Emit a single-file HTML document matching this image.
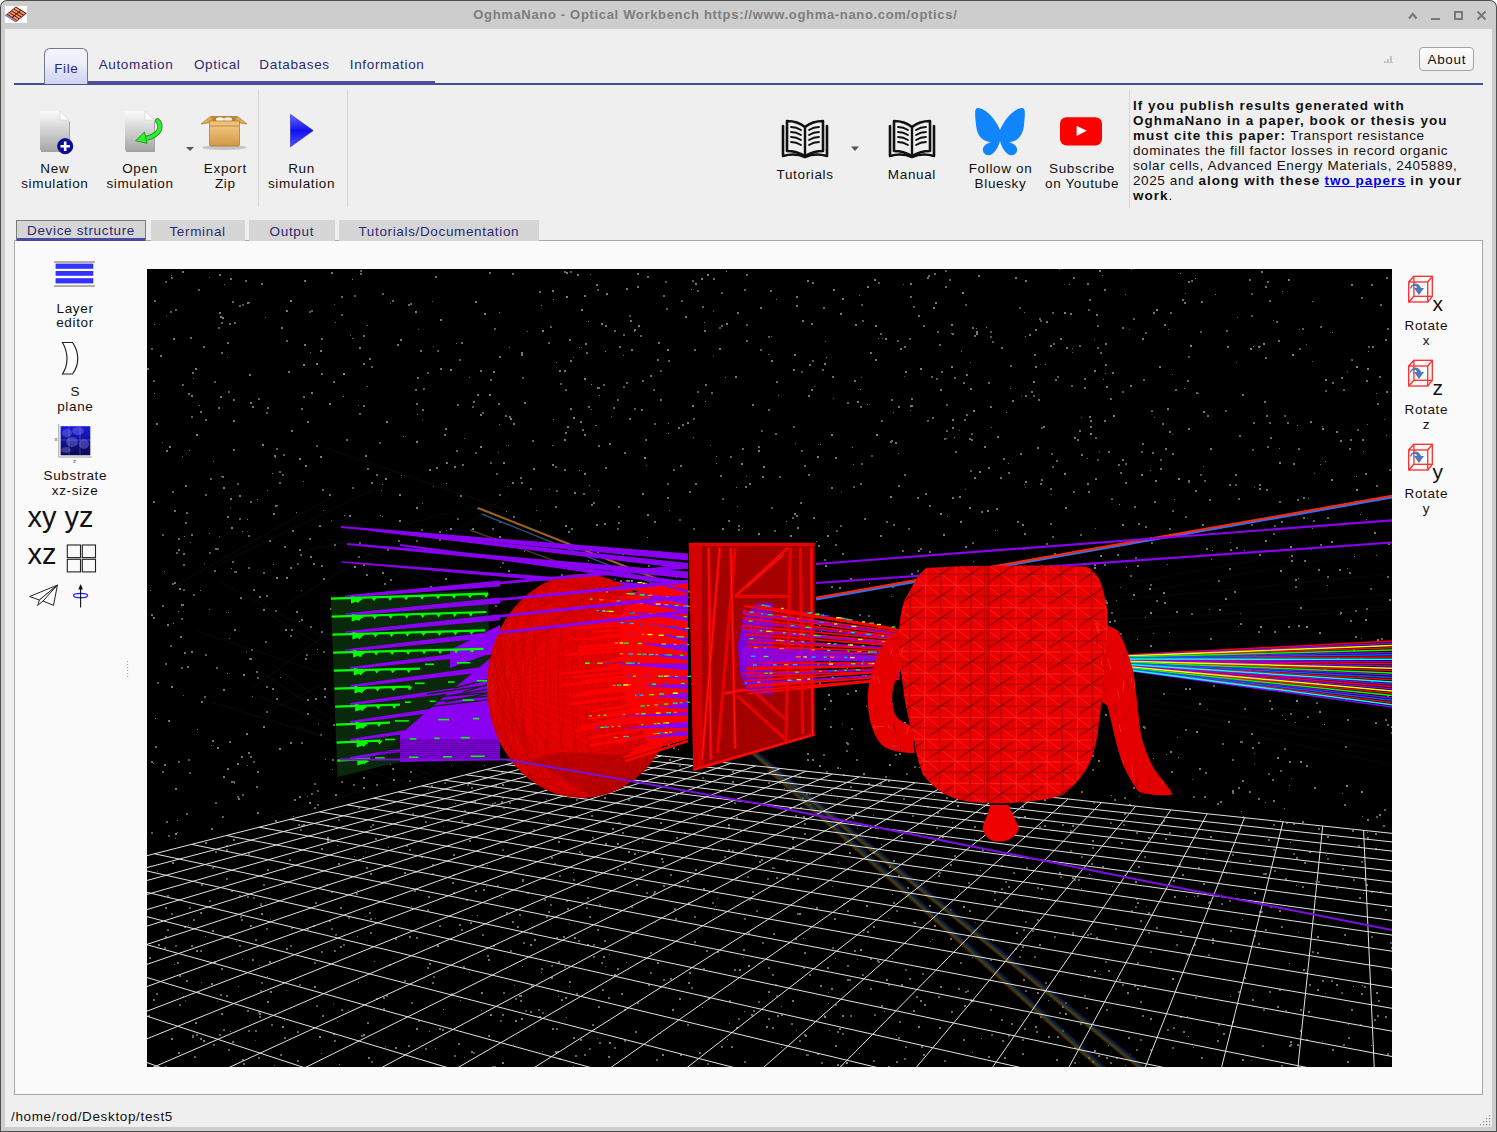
<!DOCTYPE html>
<html><head><meta charset="utf-8"><title>OghmaNano</title>
<style>html,body{margin:0;padding:0;width:1497px;height:1132px;overflow:hidden;background:#fff}
#w{position:relative;width:1497px;height:1132px;overflow:hidden;font-family:'Liberation Sans',sans-serif}</style></head>
<body><div id="w">
<div style="position:absolute;left:0px;top:0px;width:1497px;height:1132px;background:#4e4e4e;border-radius:7px 7px 0 0"></div>
<div style="position:absolute;left:1px;top:1px;width:1495px;height:1130px;background:#cdcdcd;border-radius:6px 6px 0 0"></div>
<div style="position:absolute;left:5px;top:29px;width:1487px;height:1098px;background:#efefef"></div>
<div style="position:absolute;left:5px;top:6px;width:22px;height:17px;background:#fff"></div>
<svg style="position:absolute;left:5px;top:6px" width="22" height="17" viewBox="0 0 22 17"><g transform="matrix(10.9 6.9 -10.9 9 10.9 0.4)"><rect x="0" y="0" width="1" height="1" fill="#6a0a28"/><rect x="0.06" y="0.08" width="0.4" height="0.13" fill="#f0b060"/><rect x="0.54" y="0.08" width="0.4" height="0.13" fill="#e8a858"/><rect x="0.06" y="0.28" width="0.4" height="0.13" fill="#f0b060"/><rect x="0.54" y="0.28" width="0.4" height="0.13" fill="#e8a858"/><rect x="0.06" y="0.48" width="0.4" height="0.13" fill="#f0b060"/><rect x="0.54" y="0.48" width="0.4" height="0.13" fill="#e8a858"/><rect x="0.06" y="0.68" width="0.4" height="0.13" fill="#f0b060"/><rect x="0.54" y="0.68" width="0.4" height="0.13" fill="#e8a858"/><rect x="0" y="0.86" width="1" height="0.14" fill="#9a8a9a"/></g></svg>
<div style="position:absolute;left:15.34px;top:8.20px;width:1400px;text-align:center;font:bold 13px/14px 'Liberation Sans', sans-serif;letter-spacing:0.67px;color:#7d7d7d;white-space:pre;">OghmaNano - Optical Workbench https://www.oghma-nano.com/optics/</div>
<svg style="position:absolute;left:0;top:0" width="1497" height="30"><g stroke="#7a7a7a" stroke-width="2" fill="none"><polyline points="1409,18.5 1412.8,14 1416.5,18.5" stroke-width="2.2"/><line x1="1431" y1="19" x2="1440" y2="19"/><rect x="1455" y="12" width="7" height="7"/><line x1="1477.5" y1="11.5" x2="1485.5" y2="19.5"/><line x1="1485.5" y1="11.5" x2="1477.5" y2="19.5"/></g></svg>
<div style="position:absolute;left:14px;top:83px;width:1469px;height:2px;background:#454d9c"></div>
<div style="position:absolute;left:88px;top:81px;width:347px;height:2px;background:#4f4f9e"></div>
<div style="position:absolute;left:44px;top:48px;width:44px;height:36px;border:1px solid #77778a;border-bottom:none;border-radius:6px 6px 0 0;box-sizing:border-box;background:linear-gradient(#f4f4fd 0%,#eeeefb 40%,#dcdff5 70%,#cdd6ef 100%)"></div>
<div style="position:absolute;left:-633.67px;top:60.52px;width:1400px;text-align:center;font:normal 13.5px/15px 'Liberation Sans', sans-serif;letter-spacing:0.65px;color:#2c2a72;white-space:pre;">File</div>
<div style="position:absolute;left:-563.97px;top:56.52px;width:1400px;text-align:center;font:normal 13.5px/15px 'Liberation Sans', sans-serif;letter-spacing:0.65px;color:#2c2a72;white-space:pre;">Automation</div>
<div style="position:absolute;left:-482.78px;top:56.52px;width:1400px;text-align:center;font:normal 13.5px/15px 'Liberation Sans', sans-serif;letter-spacing:0.65px;color:#2c2a72;white-space:pre;">Optical</div>
<div style="position:absolute;left:-405.48px;top:56.52px;width:1400px;text-align:center;font:normal 13.5px/15px 'Liberation Sans', sans-serif;letter-spacing:0.65px;color:#2c2a72;white-space:pre;">Databases</div>
<div style="position:absolute;left:-312.88px;top:56.52px;width:1400px;text-align:center;font:normal 13.5px/15px 'Liberation Sans', sans-serif;letter-spacing:0.65px;color:#2c2a72;white-space:pre;">Information</div>
<div style="position:absolute;left:1419px;top:47px;width:55px;height:24px;border:1px solid #a4a4a4;border-radius:4px;box-sizing:border-box;background:linear-gradient(#fdfdfd,#efefef)"></div>
<div style="position:absolute;left:746.83px;top:52.12px;width:1400px;text-align:center;font:normal 13.5px/15px 'Liberation Sans', sans-serif;letter-spacing:0.65px;color:#111;white-space:pre;">About</div>
<svg style="position:absolute;left:1383px;top:53px" width="12" height="12" viewBox="0 0 12 12"><g fill="#c4c4c4"><rect x="1" y="8" width="2" height="2"/><rect x="4" y="6" width="2" height="4"/><rect x="7" y="3" width="2" height="7"/><rect x="1" y="9" width="9" height="1"/></g></svg>
<div style="position:absolute;left:258px;top:90px;width:1px;height:117px;background:#d6d6d6"></div>
<div style="position:absolute;left:347px;top:90px;width:1px;height:117px;background:#d6d6d6"></div>
<div style="position:absolute;left:1129px;top:90px;width:1px;height:118px;background:#d6d6d6"></div>
<svg style="position:absolute;left:0px;top:100px" width="350" height="60" viewBox="0 0 350 60"><defs><linearGradient id="dg40" x1="0" y1="0" x2="0" y2="1"><stop offset="0" stop-color="#fbfbfb"/><stop offset="1" stop-color="#a9a9a9"/></linearGradient></defs><path d="M41,13 h20 l9,9 v30 h-29 z" fill="#6f6f6f" opacity="0.6"/><path d="M40,11 h20 l9,9 v30 h-29 z" fill="url(#dg40)"/><path d="M60,11 v9 h9 z" fill="#fff" stroke="#cfcfcf" stroke-width="0.6"/><circle cx="65.2" cy="46.2" r="7.6" fill="#0a0aa0" stroke="#000070" stroke-width="0.8"/><path d="M65.2,41.5 v9.4 M60.5,46.2 h9.4" stroke="#fff" stroke-width="2.6"/><defs><linearGradient id="dg125" x1="0" y1="0" x2="0" y2="1"><stop offset="0" stop-color="#fbfbfb"/><stop offset="1" stop-color="#a9a9a9"/></linearGradient></defs><path d="M126,13 h20 l9,9 v30 h-29 z" fill="#6f6f6f" opacity="0.6"/><path d="M125,11 h20 l9,9 v30 h-29 z" fill="url(#dg125)"/><path d="M145,11 v9 h9 z" fill="#fff" stroke="#cfcfcf" stroke-width="0.6"/><path d="M157.5,20.8 C161,24 161,30 156,34 C153,36.5 150,37.5 146.5,38.3" stroke="#119911" stroke-width="5.2" fill="none" stroke-linecap="round"/><path d="M157.5,20.8 C161,24 161,30 156,34 C153,36.5 150,37.5 146.5,38.3" stroke="#33ee33" stroke-width="3.4" fill="none" stroke-linecap="round"/><path d="M135.6,40.8 L144.5,31.9 L147,43.3 z" fill="#33ee33" stroke="#119911" stroke-width="0.9" stroke-linejoin="round"/><path d="M186,47 h8 l-4,4 z" fill="#555"/><defs><linearGradient id="bx" x1="0" y1="0" x2="0" y2="1"><stop offset="0" stop-color="#f2c47c"/><stop offset="1" stop-color="#cf9846"/></linearGradient></defs><ellipse cx="224.5" cy="47.5" rx="22" ry="2.5" fill="#000" opacity="0.18"/><path d="M206,22 l6,-6 h24 l6,6 z" fill="#b88438"/><ellipse cx="220" cy="19.5" rx="4" ry="2.2" fill="#f6f6f6"/><ellipse cx="228" cy="19.5" rx="4" ry="2.2" fill="#eee"/><path d="M201,24 l10,-8 l3,6 z M247,24 l-10,-8 l-3,6 z" fill="#e0a858" stroke="#b07830" stroke-width="0.7"/><rect x="209.5" y="21" width="30" height="6" fill="#f0c078" stroke="#b58036" stroke-width="0.8"/><rect x="209.5" y="26" width="30" height="20" rx="1.5" fill="url(#bx)" stroke="#b07c34" stroke-width="0.8"/><defs><linearGradient id="rn" x1="0" y1="0" x2="0" y2="1"><stop offset="0" stop-color="#6a6aff"/><stop offset="0.5" stop-color="#1010f0"/><stop offset="1" stop-color="#5050ff"/></linearGradient></defs><path d="M290.5,14.4 L313.2,30.6 L290.5,46.8 z" fill="url(#rn)" stroke="#2020c0" stroke-width="0.6"/></svg>
<div style="position:absolute;left:-645.17px;top:160.52px;width:1400px;text-align:center;font:normal 13.5px/15px 'Liberation Sans', sans-serif;letter-spacing:0.65px;color:#111;white-space:pre;">New</div>
<div style="position:absolute;left:-645.17px;top:175.52px;width:1400px;text-align:center;font:normal 13.5px/15px 'Liberation Sans', sans-serif;letter-spacing:0.65px;color:#111;white-space:pre;">simulation</div>
<div style="position:absolute;left:-559.97px;top:160.52px;width:1400px;text-align:center;font:normal 13.5px/15px 'Liberation Sans', sans-serif;letter-spacing:0.65px;color:#111;white-space:pre;">Open</div>
<div style="position:absolute;left:-559.97px;top:175.52px;width:1400px;text-align:center;font:normal 13.5px/15px 'Liberation Sans', sans-serif;letter-spacing:0.65px;color:#111;white-space:pre;">simulation</div>
<div style="position:absolute;left:-474.68px;top:160.52px;width:1400px;text-align:center;font:normal 13.5px/15px 'Liberation Sans', sans-serif;letter-spacing:0.65px;color:#111;white-space:pre;">Export</div>
<div style="position:absolute;left:-474.68px;top:175.52px;width:1400px;text-align:center;font:normal 13.5px/15px 'Liberation Sans', sans-serif;letter-spacing:0.65px;color:#111;white-space:pre;">Zip</div>
<div style="position:absolute;left:-398.48px;top:160.52px;width:1400px;text-align:center;font:normal 13.5px/15px 'Liberation Sans', sans-serif;letter-spacing:0.65px;color:#111;white-space:pre;">Run</div>
<div style="position:absolute;left:-398.48px;top:175.52px;width:1400px;text-align:center;font:normal 13.5px/15px 'Liberation Sans', sans-serif;letter-spacing:0.65px;color:#111;white-space:pre;">simulation</div>
<svg style="position:absolute;left:0px;top:0px" width="1497" height="210" viewBox="0 0 1497 210"><g transform="translate(782,120)" fill="none" stroke="#111" stroke-linecap="round" stroke-linejoin="round"><path d="M1,6 v30 c7,-2 15,-2 22,1 c7,-3 15,-3 22,-1 v-30" stroke-width="2.6"/><path d="M5,1 c7,0 13,2 18,6 c5,-4 11,-6 18,-6 v30 c-7,0 -13,2 -18,5 c-5,-3 -11,-5 -18,-5 z" stroke-width="2.6"/><path d="M23,7 v29" stroke-width="2.4"/><path d="M9,7 c4,0 7,1 10,3 M9,12 c4,0 7,1 10,3 M9,17 c4,0 7,1 10,3 M9,22 c4,0 7,1 10,3" stroke-width="1.8"/><path d="M27,10 c3,-2 6,-3 10,-3 M27,15 c3,-2 6,-3 10,-3 M27,20 c3,-2 6,-3 10,-3 M27,25 c3,-2 6,-3 10,-3" stroke-width="1.8"/></g><g transform="translate(889,120)" fill="none" stroke="#111" stroke-linecap="round" stroke-linejoin="round"><path d="M1,6 v30 c7,-2 15,-2 22,1 c7,-3 15,-3 22,-1 v-30" stroke-width="2.6"/><path d="M5,1 c7,0 13,2 18,6 c5,-4 11,-6 18,-6 v30 c-7,0 -13,2 -18,5 c-5,-3 -11,-5 -18,-5 z" stroke-width="2.6"/><path d="M23,7 v29" stroke-width="2.4"/><path d="M9,7 c4,0 7,1 10,3 M9,12 c4,0 7,1 10,3 M9,17 c4,0 7,1 10,3 M9,22 c4,0 7,1 10,3" stroke-width="1.8"/><path d="M27,10 c3,-2 6,-3 10,-3 M27,15 c3,-2 6,-3 10,-3 M27,20 c3,-2 6,-3 10,-3 M27,25 c3,-2 6,-3 10,-3" stroke-width="1.8"/></g><path d="M851,146.5 h8 l-4,4.5 z" fill="#555"/><path d="M1000,130 C995,118 985,108 978,108 C974,108 975,114 976,125 C977,137 984,142 991,142 C984,144 981,149 984,153 C988,158 996,155 1000,141 C1004,155 1012,158 1016,153 C1019,149 1016,144 1009,142 C1016,142 1023,137 1024,125 C1025,114 1026,108 1022,108 C1015,108 1005,118 1000,130 z" fill="#1185fe"/><rect x="1060" y="117.2" width="42" height="28.3" rx="6.5" fill="#ff0000"/><path d="M1076.6,125.7 L1086.8,130.8 L1076.6,135.9 z" fill="#fff"/></svg>
<div style="position:absolute;left:105.12px;top:167.02px;width:1400px;text-align:center;font:normal 13.5px/15px 'Liberation Sans', sans-serif;letter-spacing:0.65px;color:#111;white-space:pre;">Tutorials</div>
<div style="position:absolute;left:211.93px;top:167.02px;width:1400px;text-align:center;font:normal 13.5px/15px 'Liberation Sans', sans-serif;letter-spacing:0.65px;color:#111;white-space:pre;">Manual</div>
<div style="position:absolute;left:300.53px;top:160.52px;width:1400px;text-align:center;font:normal 13.5px/15px 'Liberation Sans', sans-serif;letter-spacing:0.65px;color:#111;white-space:pre;">Follow on</div>
<div style="position:absolute;left:300.53px;top:175.52px;width:1400px;text-align:center;font:normal 13.5px/15px 'Liberation Sans', sans-serif;letter-spacing:0.65px;color:#111;white-space:pre;">Bluesky</div>
<div style="position:absolute;left:382.03px;top:160.52px;width:1400px;text-align:center;font:normal 13.5px/15px 'Liberation Sans', sans-serif;letter-spacing:0.65px;color:#111;white-space:pre;">Subscribe</div>
<div style="position:absolute;left:382.03px;top:175.52px;width:1400px;text-align:center;font:normal 13.5px/15px 'Liberation Sans', sans-serif;letter-spacing:0.65px;color:#111;white-space:pre;">on Youtube</div>
<div style="position:absolute;left:1133.00px;top:97.52px;font:normal 13.5px/15px 'Liberation Sans', sans-serif;letter-spacing:0.6px;color:#111;white-space:pre;"><span style="font-weight:bold;letter-spacing:1.0px">If you publish results generated with</span></div>
<div style="position:absolute;left:1133.00px;top:112.52px;font:normal 13.5px/15px 'Liberation Sans', sans-serif;letter-spacing:0.6px;color:#111;white-space:pre;"><span style="font-weight:bold;letter-spacing:1.0px">OghmaNano in a paper, book or thesis you</span></div>
<div style="position:absolute;left:1133.00px;top:127.52px;font:normal 13.5px/15px 'Liberation Sans', sans-serif;letter-spacing:0.6px;color:#111;white-space:pre;"><span style="font-weight:bold;letter-spacing:1.0px">must cite this paper:</span> Transport resistance</div>
<div style="position:absolute;left:1133.00px;top:142.52px;font:normal 13.5px/15px 'Liberation Sans', sans-serif;letter-spacing:0.6px;color:#111;white-space:pre;">dominates the fill factor losses in record organic</div>
<div style="position:absolute;left:1133.00px;top:157.52px;font:normal 13.5px/15px 'Liberation Sans', sans-serif;letter-spacing:0.6px;color:#111;white-space:pre;">solar cells, Advanced Energy Materials, 2405889,</div>
<div style="position:absolute;left:1133.00px;top:172.52px;font:normal 13.5px/15px 'Liberation Sans', sans-serif;letter-spacing:0.6px;color:#111;white-space:pre;">2025 and <span style="font-weight:bold;letter-spacing:1.0px">along with these</span> <span style="font-weight:bold;letter-spacing:1.0px;color:#0000ee;text-decoration:underline">two papers</span> <span style="font-weight:bold;letter-spacing:1.0px">in your</span></div>
<div style="position:absolute;left:1133.00px;top:187.52px;font:normal 13.5px/15px 'Liberation Sans', sans-serif;letter-spacing:0.6px;color:#111;white-space:pre;"><span style="font-weight:bold;letter-spacing:1.0px">work</span>.</div>
<div style="position:absolute;left:14px;top:240px;width:1469px;height:855px;background:#fafafa;border:1px solid #a9a9a9;box-sizing:border-box"></div>
<div style="position:absolute;left:16px;top:220px;width:130px;height:21px;background:#d5d5d5;border:1px solid #7b7b7b;box-sizing:border-box"></div>
<div style="position:absolute;left:17px;top:238px;width:128px;height:3px;background:#4a4aa2"></div>
<div style="position:absolute;left:-618.97px;top:222.52px;width:1400px;text-align:center;font:normal 13.5px/15px 'Liberation Sans', sans-serif;letter-spacing:0.65px;color:#2c2a72;white-space:pre;">Device structure</div>
<div style="position:absolute;left:150.5px;top:220px;width:94.5px;height:21px;background:#d6d6d6"></div>
<div style="position:absolute;left:-502.43px;top:224.12px;width:1400px;text-align:center;font:normal 13.5px/15px 'Liberation Sans', sans-serif;letter-spacing:0.65px;color:#2c2a72;white-space:pre;">Terminal</div>
<div style="position:absolute;left:249px;top:220px;width:86px;height:21px;background:#d6d6d6"></div>
<div style="position:absolute;left:-408.18px;top:224.12px;width:1400px;text-align:center;font:normal 13.5px/15px 'Liberation Sans', sans-serif;letter-spacing:0.65px;color:#2c2a72;white-space:pre;">Output</div>
<div style="position:absolute;left:339.4px;top:220px;width:199.20000000000005px;height:21px;background:#d6d6d6"></div>
<div style="position:absolute;left:-261.18px;top:224.12px;width:1400px;text-align:center;font:normal 13.5px/15px 'Liberation Sans', sans-serif;letter-spacing:0.65px;color:#2c2a72;white-space:pre;">Tutorials/Documentation</div>
<svg style="position:absolute;left:0px;top:0px" width="147" height="640" viewBox="0 0 147 640"><rect x="54" y="261" width="41" height="2" fill="#b9aca2"/><rect x="54" y="285" width="41" height="2" fill="#b9aca2"/><rect x="55.6" y="263.6" width="37.7" height="5.2" fill="#3333ff"/><rect x="55.6" y="271" width="37.7" height="4.8" fill="#3333ff"/><rect x="55.6" y="278.2" width="37.7" height="5.2" fill="#3333ff"/><path d="M62.5,342.5 h10 c7,10 7,22 0,31.5 h-10 c6,-9 6,-21 0,-31.5 z" fill="#fff" stroke="#222" stroke-width="1.2"/><defs><linearGradient id="sb" x1="0" y1="0" x2="0" y2="1"><stop offset="0" stop-color="#1a1ae0"/><stop offset="1" stop-color="#0a0a50"/></linearGradient></defs><rect x="60.6" y="426.2" width="29.7" height="29.1" fill="url(#sb)"/><g fill="#9090e0" opacity="0.35"><ellipse cx="67" cy="433" rx="5" ry="4"/><ellipse cx="78" cy="431" rx="6" ry="4"/><ellipse cx="72" cy="442" rx="6" ry="5"/><ellipse cx="84" cy="444" rx="5" ry="5"/><ellipse cx="66" cy="450" rx="5" ry="3"/></g><g stroke="#a0a0e0" stroke-width="0.5" opacity="0.6"><line x1="69" y1="426" x2="69" y2="455"/><line x1="80" y1="426" x2="80" y2="455"/><line x1="60" y1="440" x2="90" y2="440"/></g><path d="M58.8,424 v33 h33" stroke="#888" stroke-width="0.8" fill="none"/><text x="54.5" y="441" font-size="6" fill="#444" font-family="Liberation Sans">x</text><text x="73" y="463" font-size="6" fill="#444" font-family="Liberation Sans">z</text><g fill="none" stroke="#222" stroke-width="1.1"><rect x="67.3" y="545" width="13.2" height="12.6"/><rect x="82.3" y="545" width="13.2" height="12.6"/><rect x="67.3" y="559.3" width="13.2" height="12.6"/><rect x="82.3" y="559.3" width="13.2" height="12.6"/></g><g fill="#fff" stroke="#222" stroke-width="1" stroke-linejoin="round"><path d="M29.7,596.5 L57.4,585.1 L39.4,600 z"/><path d="M39.4,600 L57.4,585.1 L53.5,605.4 L43,601 L37.7,605.4 z"/><path d="M43,601 L57.4,585.1" fill="none"/></g><ellipse cx="80.6" cy="595.5" rx="7" ry="2.2" fill="none" stroke="#2222ff" stroke-width="1.3"/><line x1="80.6" y1="586" x2="80.6" y2="607.5" stroke="#111" stroke-width="1.1"/><path d="M78.3,589.5 L80.6,584 L82.9,589.5 z" fill="#111"/></svg>
<div style="position:absolute;left:-624.97px;top:300.52px;width:1400px;text-align:center;font:normal 13.5px/15px 'Liberation Sans', sans-serif;letter-spacing:0.65px;color:#111;white-space:pre;">Layer</div>
<div style="position:absolute;left:-624.97px;top:315.12px;width:1400px;text-align:center;font:normal 13.5px/15px 'Liberation Sans', sans-serif;letter-spacing:0.65px;color:#111;white-space:pre;">editor</div>
<div style="position:absolute;left:-624.77px;top:384.32px;width:1400px;text-align:center;font:normal 13.5px/15px 'Liberation Sans', sans-serif;letter-spacing:0.65px;color:#111;white-space:pre;">S</div>
<div style="position:absolute;left:-624.67px;top:399.32px;width:1400px;text-align:center;font:normal 13.5px/15px 'Liberation Sans', sans-serif;letter-spacing:0.65px;color:#111;white-space:pre;">plane</div>
<div style="position:absolute;left:-624.67px;top:468.22px;width:1400px;text-align:center;font:normal 13.5px/15px 'Liberation Sans', sans-serif;letter-spacing:0.65px;color:#111;white-space:pre;">Substrate</div>
<div style="position:absolute;left:-624.97px;top:482.72px;width:1400px;text-align:center;font:normal 13.5px/15px 'Liberation Sans', sans-serif;letter-spacing:0.65px;color:#111;white-space:pre;">xz-size</div>
<div style="position:absolute;left:27.50px;top:501.45px;font:normal 29px/32px 'Liberation Sans', sans-serif;letter-spacing:0px;color:#111;white-space:pre;">xy yz</div>
<div style="position:absolute;left:27.50px;top:537.65px;font:normal 29px/32px 'Liberation Sans', sans-serif;letter-spacing:0px;color:#111;white-space:pre;">xz</div>
<svg style="position:absolute;left:124px;top:661px" width="6" height="20" viewBox="0 0 6 20"><rect x="3" y="0" width="1.1" height="1.1" fill="#a8a8a8"/><rect x="3" y="3" width="1.1" height="1.1" fill="#a8a8a8"/><rect x="3" y="6" width="1.1" height="1.1" fill="#a8a8a8"/><rect x="3" y="9" width="1.1" height="1.1" fill="#a8a8a8"/><rect x="3" y="12" width="1.1" height="1.1" fill="#a8a8a8"/><rect x="3" y="15" width="1.1" height="1.1" fill="#a8a8a8"/></svg>
<svg style="position:absolute;left:0px;top:0px" width="1497" height="520" viewBox="0 0 1497 520"><g transform="translate(0,0)" fill="none" stroke="#ff2a2a" stroke-width="1.3"><rect x="1408.7" y="282" width="19" height="20"/><rect x="1413.9" y="276.3" width="18.4" height="20"/><line x1="1408.7" y1="282" x2="1413.9" y2="276.3"/><line x1="1427.7" y1="282" x2="1432.3" y2="276.3"/><line x1="1408.7" y1="302" x2="1413.9" y2="296.3"/><line x1="1427.7" y1="302" x2="1432.3" y2="296.3"/></g><g transform="translate(0,0)"><path d="M1410,288 c2,-6 9,-6 11,0 l3,0 l-5,7 l-5,-7 l3,0 c-1,-3 -5,-3 -6,1 z" fill="#4a7ab8"/></g><g transform="translate(0,84)" fill="none" stroke="#ff2a2a" stroke-width="1.3"><rect x="1408.7" y="282" width="19" height="20"/><rect x="1413.9" y="276.3" width="18.4" height="20"/><line x1="1408.7" y1="282" x2="1413.9" y2="276.3"/><line x1="1427.7" y1="282" x2="1432.3" y2="276.3"/><line x1="1408.7" y1="302" x2="1413.9" y2="296.3"/><line x1="1427.7" y1="302" x2="1432.3" y2="296.3"/></g><g transform="translate(0,84)"><path d="M1410,288 c2,-6 9,-6 11,0 l3,0 l-5,7 l-5,-7 l3,0 c-1,-3 -5,-3 -6,1 z" fill="#4a7ab8"/></g><g transform="translate(0,168)" fill="none" stroke="#ff2a2a" stroke-width="1.3"><rect x="1408.7" y="282" width="19" height="20"/><rect x="1413.9" y="276.3" width="18.4" height="20"/><line x1="1408.7" y1="282" x2="1413.9" y2="276.3"/><line x1="1427.7" y1="282" x2="1432.3" y2="276.3"/><line x1="1408.7" y1="302" x2="1413.9" y2="296.3"/><line x1="1427.7" y1="302" x2="1432.3" y2="296.3"/></g><g transform="translate(0,168)"><path d="M1410,288 c2,-6 9,-6 11,0 l3,0 l-5,7 l-5,-7 l3,0 c-1,-3 -5,-3 -6,1 z" fill="#4a7ab8"/></g></svg>
<div style="position:absolute;left:1432.50px;top:291.92px;font:normal 21px/23px 'Liberation Sans', sans-serif;letter-spacing:0px;color:#111;white-space:pre;">x</div>
<div style="position:absolute;left:726.33px;top:318.12px;width:1400px;text-align:center;font:normal 13.5px/15px 'Liberation Sans', sans-serif;letter-spacing:0.65px;color:#111;white-space:pre;">Rotate</div>
<div style="position:absolute;left:726.33px;top:333.12px;width:1400px;text-align:center;font:normal 13.5px/15px 'Liberation Sans', sans-serif;letter-spacing:0.65px;color:#111;white-space:pre;">x</div>
<div style="position:absolute;left:1432.50px;top:375.92px;font:normal 21px/23px 'Liberation Sans', sans-serif;letter-spacing:0px;color:#111;white-space:pre;">z</div>
<div style="position:absolute;left:726.33px;top:402.12px;width:1400px;text-align:center;font:normal 13.5px/15px 'Liberation Sans', sans-serif;letter-spacing:0.65px;color:#111;white-space:pre;">Rotate</div>
<div style="position:absolute;left:726.33px;top:417.12px;width:1400px;text-align:center;font:normal 13.5px/15px 'Liberation Sans', sans-serif;letter-spacing:0.65px;color:#111;white-space:pre;">z</div>
<div style="position:absolute;left:1432.50px;top:459.92px;font:normal 21px/23px 'Liberation Sans', sans-serif;letter-spacing:0px;color:#111;white-space:pre;">y</div>
<div style="position:absolute;left:726.33px;top:486.12px;width:1400px;text-align:center;font:normal 13.5px/15px 'Liberation Sans', sans-serif;letter-spacing:0.65px;color:#111;white-space:pre;">Rotate</div>
<div style="position:absolute;left:726.33px;top:501.12px;width:1400px;text-align:center;font:normal 13.5px/15px 'Liberation Sans', sans-serif;letter-spacing:0.65px;color:#111;white-space:pre;">y</div>
<div style="position:absolute;left:11.00px;top:1109.22px;font:normal 13.5px/15px 'Liberation Sans', sans-serif;letter-spacing:0.65px;color:#111;white-space:pre;">/home/rod/Desktop/test5</div>
<svg style="position:absolute;left:0;top:0" width="1497" height="1132"><rect x="1489" y="1115" width="1.2" height="1.2" fill="#8a8a8a"/><rect x="1486" y="1118" width="1.2" height="1.2" fill="#8a8a8a"/><rect x="1489" y="1118" width="1.2" height="1.2" fill="#8a8a8a"/><rect x="1483" y="1121" width="1.2" height="1.2" fill="#8a8a8a"/><rect x="1486" y="1121" width="1.2" height="1.2" fill="#8a8a8a"/><rect x="1489" y="1121" width="1.2" height="1.2" fill="#8a8a8a"/><rect x="1480" y="1124" width="1.2" height="1.2" fill="#8a8a8a"/><rect x="1483" y="1124" width="1.2" height="1.2" fill="#8a8a8a"/><rect x="1486" y="1124" width="1.2" height="1.2" fill="#8a8a8a"/><rect x="1489" y="1124" width="1.2" height="1.2" fill="#8a8a8a"/></svg>
<svg style="position:absolute;left:147px;top:269px" width="1245" height="798" viewBox="147 269 1245 798"><rect x="147" y="269" width="1245" height="798" fill="#000"/><rect x="732" y="850" width="2" height="2" fill="rgb(104,104,104)"/><rect x="1089" y="874" width="1" height="1" fill="rgb(119,119,119)"/><rect x="767" y="600" width="2" height="2" fill="rgb(124,124,124)"/><rect x="1023" y="683" width="2" height="2" fill="rgb(98,98,98)"/><rect x="1298" y="932" width="1" height="1" fill="rgb(94,94,94)"/><rect x="1366" y="884" width="2" height="2" fill="rgb(125,125,125)"/><rect x="1072" y="877" width="2" height="2" fill="rgb(109,109,109)"/><rect x="552" y="599" width="1" height="1" fill="rgb(121,121,121)"/><rect x="432" y="301" width="1" height="1" fill="rgb(99,99,99)"/><rect x="469" y="672" width="2" height="2" fill="rgb(121,121,121)"/><rect x="286" y="948" width="2" height="2" fill="rgb(123,123,123)"/><rect x="725" y="377" width="1" height="1" fill="rgb(108,108,108)"/><rect x="323" y="578" width="2" height="2" fill="rgb(106,106,106)"/><rect x="1034" y="956" width="2" height="2" fill="rgb(93,93,93)"/><rect x="1001" y="347" width="2" height="2" fill="rgb(86,116,111)"/><rect x="1023" y="548" width="2" height="2" fill="rgb(95,95,80)"/><rect x="1012" y="749" width="2" height="2" fill="rgb(115,115,115)"/><rect x="1357" y="429" width="2" height="2" fill="rgb(89,89,89)"/><rect x="849" y="852" width="2" height="2" fill="rgb(123,123,108)"/><rect x="390" y="579" width="2" height="2" fill="rgb(117,117,117)"/><rect x="1080" y="980" width="1" height="1" fill="rgb(87,87,87)"/><rect x="824" y="1016" width="2" height="2" fill="rgb(115,145,140)"/><rect x="791" y="1023" width="2" height="2" fill="rgb(98,98,98)"/><rect x="256" y="671" width="2" height="2" fill="rgb(100,100,100)"/><rect x="352" y="338" width="1" height="1" fill="rgb(129,129,114)"/><rect x="846" y="1062" width="2" height="2" fill="rgb(115,145,140)"/><rect x="370" y="826" width="2" height="2" fill="rgb(90,90,75)"/><rect x="223" y="776" width="2" height="2" fill="rgb(124,124,124)"/><rect x="868" y="783" width="2" height="2" fill="rgb(119,119,104)"/><rect x="1059" y="775" width="1" height="1" fill="rgb(98,98,98)"/><rect x="1222" y="743" width="2" height="2" fill="rgb(93,93,93)"/><rect x="642" y="869" width="2" height="2" fill="rgb(107,107,107)"/><rect x="564" y="271" width="2" height="2" fill="rgb(99,99,99)"/><rect x="1362" y="439" width="2" height="2" fill="rgb(114,114,114)"/><rect x="209" y="533" width="1" height="1" fill="rgb(117,117,117)"/><rect x="1314" y="473" width="1" height="1" fill="rgb(95,95,95)"/><rect x="1176" y="944" width="2" height="2" fill="rgb(89,89,89)"/><rect x="178" y="538" width="2" height="2" fill="rgb(101,101,101)"/><rect x="727" y="615" width="2" height="2" fill="rgb(116,116,116)"/><rect x="1105" y="364" width="2" height="2" fill="rgb(112,112,112)"/><rect x="1024" y="312" width="1" height="1" fill="rgb(112,112,112)"/><rect x="1254" y="487" width="1" height="1" fill="rgb(92,92,92)"/><rect x="318" y="723" width="1" height="1" fill="rgb(91,91,91)"/><rect x="1025" y="481" width="2" height="2" fill="rgb(125,125,110)"/><rect x="147" y="368" width="2" height="2" fill="rgb(109,109,109)"/><rect x="860" y="406" width="2" height="2" fill="rgb(100,100,100)"/><rect x="1266" y="489" width="2" height="2" fill="rgb(107,107,107)"/><rect x="642" y="493" width="2" height="2" fill="rgb(117,117,117)"/><rect x="1117" y="554" width="2" height="2" fill="rgb(111,111,111)"/><rect x="503" y="807" width="2" height="2" fill="rgb(97,97,97)"/><rect x="461" y="929" width="2" height="2" fill="rgb(98,98,98)"/><rect x="959" y="496" width="2" height="2" fill="rgb(119,119,119)"/><rect x="262" y="444" width="2" height="2" fill="rgb(123,123,123)"/><rect x="792" y="858" width="1" height="1" fill="rgb(96,96,96)"/><rect x="744" y="560" width="2" height="2" fill="rgb(86,86,86)"/><rect x="226" y="845" width="2" height="2" fill="rgb(98,98,83)"/><rect x="384" y="881" width="2" height="2" fill="rgb(89,89,89)"/><rect x="1150" y="886" width="1" height="1" fill="rgb(123,123,108)"/><rect x="687" y="422" width="2" height="2" fill="rgb(115,115,115)"/><rect x="301" y="742" width="2" height="2" fill="rgb(93,93,93)"/><rect x="880" y="783" width="2" height="2" fill="rgb(99,99,99)"/><rect x="514" y="985" width="1" height="1" fill="rgb(109,109,109)"/><rect x="568" y="531" width="2" height="2" fill="rgb(106,106,106)"/><rect x="172" y="491" width="2" height="2" fill="rgb(93,93,93)"/><rect x="1141" y="474" width="2" height="2" fill="rgb(125,125,110)"/><rect x="822" y="369" width="2" height="2" fill="rgb(93,93,93)"/><rect x="178" y="761" width="2" height="2" fill="rgb(92,92,92)"/><rect x="188" y="393" width="2" height="2" fill="rgb(108,108,108)"/><rect x="1251" y="733" width="2" height="2" fill="rgb(120,120,120)"/><rect x="500" y="574" width="2" height="2" fill="rgb(116,116,116)"/><rect x="599" y="395" width="1" height="1" fill="rgb(117,117,117)"/><rect x="480" y="414" width="2" height="2" fill="rgb(114,114,114)"/><rect x="1062" y="606" width="2" height="2" fill="rgb(103,103,103)"/><rect x="1029" y="334" width="2" height="2" fill="rgb(115,115,115)"/><rect x="772" y="867" width="2" height="2" fill="rgb(99,99,99)"/><rect x="963" y="775" width="2" height="2" fill="rgb(116,116,116)"/><rect x="409" y="849" width="2" height="2" fill="rgb(115,115,115)"/><rect x="1389" y="469" width="2" height="2" fill="rgb(92,92,77)"/><rect x="818" y="545" width="2" height="2" fill="rgb(84,114,109)"/><rect x="540" y="520" width="1" height="1" fill="rgb(96,96,96)"/><rect x="807" y="1054" width="2" height="2" fill="rgb(91,91,91)"/><rect x="636" y="598" width="2" height="2" fill="rgb(98,98,83)"/><rect x="595" y="600" width="1" height="1" fill="rgb(105,105,90)"/><rect x="707" y="274" width="2" height="2" fill="rgb(123,123,123)"/><rect x="1037" y="887" width="2" height="2" fill="rgb(102,102,87)"/><rect x="1385" y="1016" width="2" height="2" fill="rgb(111,111,111)"/><rect x="710" y="445" width="1" height="1" fill="rgb(87,87,87)"/><rect x="1192" y="779" width="1" height="1" fill="rgb(89,89,89)"/><rect x="1094" y="564" width="2" height="2" fill="rgb(119,119,119)"/><rect x="1254" y="655" width="2" height="2" fill="rgb(122,122,122)"/><rect x="1131" y="910" width="2" height="2" fill="rgb(102,102,102)"/><rect x="614" y="780" width="1" height="1" fill="rgb(82,112,107)"/><rect x="1268" y="839" width="2" height="2" fill="rgb(117,117,102)"/><rect x="165" y="281" width="2" height="2" fill="rgb(93,93,78)"/><rect x="432" y="982" width="2" height="2" fill="rgb(102,102,102)"/><rect x="1184" y="302" width="2" height="2" fill="rgb(112,112,97)"/><rect x="358" y="556" width="2" height="2" fill="rgb(85,85,85)"/><rect x="1092" y="614" width="2" height="2" fill="rgb(124,124,124)"/><rect x="988" y="382" width="2" height="2" fill="rgb(107,107,107)"/><rect x="1279" y="462" width="2" height="2" fill="rgb(103,133,128)"/><rect x="231" y="890" width="2" height="2" fill="rgb(119,119,104)"/><rect x="432" y="873" width="2" height="2" fill="rgb(95,95,95)"/><rect x="1020" y="453" width="2" height="2" fill="rgb(111,111,111)"/><rect x="1106" y="602" width="2" height="2" fill="rgb(118,118,118)"/><rect x="1172" y="978" width="2" height="2" fill="rgb(125,125,125)"/><rect x="596" y="425" width="1" height="1" fill="rgb(105,135,130)"/><rect x="1050" y="488" width="2" height="2" fill="rgb(100,100,100)"/><rect x="994" y="576" width="2" height="2" fill="rgb(113,113,113)"/><rect x="1052" y="702" width="2" height="2" fill="rgb(129,129,114)"/><rect x="976" y="333" width="2" height="2" fill="rgb(121,121,106)"/><rect x="797" y="913" width="2" height="2" fill="rgb(91,91,91)"/><rect x="1044" y="719" width="1" height="1" fill="rgb(111,111,111)"/><rect x="753" y="1010" width="2" height="2" fill="rgb(105,105,105)"/><rect x="1193" y="1047" width="1" height="1" fill="rgb(124,124,124)"/><rect x="180" y="636" width="2" height="2" fill="rgb(117,117,117)"/><rect x="1367" y="819" width="2" height="2" fill="rgb(121,121,121)"/><rect x="951" y="729" width="2" height="2" fill="rgb(125,125,125)"/><rect x="576" y="993" width="2" height="2" fill="rgb(90,90,90)"/><rect x="521" y="1018" width="2" height="2" fill="rgb(124,124,124)"/><rect x="399" y="494" width="2" height="2" fill="rgb(112,112,112)"/><rect x="748" y="714" width="2" height="2" fill="rgb(104,104,104)"/><rect x="1122" y="391" width="2" height="2" fill="rgb(90,90,90)"/><rect x="186" y="813" width="2" height="2" fill="rgb(98,98,98)"/><rect x="350" y="335" width="1" height="1" fill="rgb(115,115,100)"/><rect x="813" y="517" width="2" height="2" fill="rgb(105,105,105)"/><rect x="1350" y="620" width="2" height="2" fill="rgb(109,109,109)"/><rect x="1089" y="299" width="2" height="2" fill="rgb(108,108,93)"/><rect x="203" y="1040" width="2" height="2" fill="rgb(127,127,112)"/><rect x="247" y="896" width="2" height="2" fill="rgb(97,97,82)"/><rect x="274" y="1065" width="1" height="1" fill="rgb(99,99,99)"/><rect x="904" y="636" width="2" height="2" fill="rgb(115,115,115)"/><rect x="1244" y="550" width="1" height="1" fill="rgb(92,122,117)"/><rect x="1072" y="934" width="2" height="2" fill="rgb(113,113,113)"/><rect x="821" y="1062" width="2" height="2" fill="rgb(99,99,84)"/><rect x="972" y="957" width="1" height="1" fill="rgb(99,99,99)"/><rect x="804" y="465" width="2" height="2" fill="rgb(95,95,95)"/><rect x="310" y="802" width="1" height="1" fill="rgb(94,94,79)"/><rect x="178" y="1052" width="2" height="2" fill="rgb(122,122,122)"/><rect x="570" y="805" width="2" height="2" fill="rgb(88,118,113)"/><rect x="487" y="865" width="1" height="1" fill="rgb(113,113,113)"/><rect x="928" y="275" width="2" height="2" fill="rgb(104,104,89)"/><rect x="462" y="654" width="2" height="2" fill="rgb(96,96,96)"/><rect x="842" y="298" width="2" height="2" fill="rgb(111,111,111)"/><rect x="247" y="519" width="1" height="1" fill="rgb(121,121,121)"/><rect x="309" y="802" width="2" height="2" fill="rgb(123,123,123)"/><rect x="1279" y="989" width="2" height="2" fill="rgb(116,116,116)"/><rect x="937" y="812" width="2" height="2" fill="rgb(113,113,98)"/><rect x="374" y="961" width="1" height="1" fill="rgb(108,108,108)"/><rect x="1349" y="448" width="2" height="2" fill="rgb(107,107,92)"/><rect x="745" y="615" width="2" height="2" fill="rgb(107,107,107)"/><rect x="198" y="992" width="2" height="2" fill="rgb(88,88,88)"/><rect x="910" y="672" width="2" height="2" fill="rgb(96,96,96)"/><rect x="164" y="947" width="2" height="2" fill="rgb(81,111,106)"/><rect x="211" y="745" width="1" height="1" fill="rgb(104,104,104)"/><rect x="901" y="984" width="2" height="2" fill="rgb(117,117,117)"/><rect x="453" y="854" width="2" height="2" fill="rgb(101,131,126)"/><rect x="1372" y="346" width="2" height="2" fill="rgb(112,112,112)"/><rect x="969" y="910" width="2" height="2" fill="rgb(121,121,121)"/><rect x="1135" y="881" width="2" height="2" fill="rgb(123,123,123)"/><rect x="744" y="1061" width="2" height="2" fill="rgb(92,92,92)"/><rect x="382" y="572" width="2" height="2" fill="rgb(116,116,116)"/><rect x="333" y="1004" width="1" height="1" fill="rgb(88,88,88)"/><rect x="637" y="286" width="2" height="2" fill="rgb(113,113,113)"/><rect x="849" y="663" width="2" height="2" fill="rgb(88,88,88)"/><rect x="503" y="992" width="2" height="2" fill="rgb(93,93,93)"/><rect x="303" y="824" width="2" height="2" fill="rgb(118,118,118)"/><rect x="481" y="1010" width="1" height="1" fill="rgb(113,113,113)"/><rect x="750" y="778" width="2" height="2" fill="rgb(90,90,75)"/><rect x="219" y="274" width="2" height="2" fill="rgb(112,112,112)"/><rect x="893" y="902" width="2" height="2" fill="rgb(91,121,116)"/><rect x="199" y="405" width="1" height="1" fill="rgb(121,121,121)"/><rect x="878" y="667" width="2" height="2" fill="rgb(112,112,112)"/><rect x="192" y="1035" width="2" height="2" fill="rgb(110,110,110)"/><rect x="1024" y="533" width="2" height="2" fill="rgb(112,112,112)"/><rect x="1136" y="1049" width="2" height="2" fill="rgb(91,91,91)"/><rect x="731" y="1046" width="2" height="2" fill="rgb(107,107,107)"/><rect x="509" y="802" width="2" height="2" fill="rgb(107,107,107)"/><rect x="1364" y="879" width="2" height="2" fill="rgb(108,108,108)"/><rect x="227" y="342" width="2" height="2" fill="rgb(107,107,107)"/><rect x="564" y="913" width="1" height="1" fill="rgb(105,105,90)"/><rect x="1293" y="853" width="2" height="2" fill="rgb(91,91,91)"/><rect x="212" y="740" width="2" height="2" fill="rgb(92,122,117)"/><rect x="1258" y="346" width="2" height="2" fill="rgb(119,119,119)"/><rect x="1122" y="459" width="2" height="2" fill="rgb(111,111,111)"/><rect x="257" y="771" width="2" height="2" fill="rgb(115,115,115)"/><rect x="358" y="807" width="2" height="2" fill="rgb(96,96,96)"/><rect x="247" y="302" width="2" height="2" fill="rgb(99,129,124)"/><rect x="697" y="290" width="2" height="2" fill="rgb(88,88,88)"/><rect x="609" y="443" width="2" height="2" fill="rgb(111,111,111)"/><rect x="1139" y="796" width="1" height="1" fill="rgb(93,93,93)"/><rect x="521" y="482" width="2" height="2" fill="rgb(108,108,108)"/><rect x="1289" y="761" width="2" height="2" fill="rgb(118,118,118)"/><rect x="976" y="331" width="2" height="2" fill="rgb(99,129,124)"/><rect x="804" y="1034" width="2" height="2" fill="rgb(92,92,92)"/><rect x="200" y="590" width="1" height="1" fill="rgb(124,124,124)"/><rect x="323" y="510" width="1" height="1" fill="rgb(91,91,91)"/><rect x="561" y="999" width="2" height="2" fill="rgb(120,120,120)"/><rect x="705" y="384" width="2" height="2" fill="rgb(108,108,108)"/><rect x="911" y="573" width="2" height="2" fill="rgb(107,107,107)"/><rect x="1077" y="439" width="2" height="2" fill="rgb(112,112,97)"/><rect x="566" y="900" width="2" height="2" fill="rgb(94,94,94)"/><rect x="732" y="771" width="2" height="2" fill="rgb(107,107,107)"/><rect x="1073" y="277" width="2" height="2" fill="rgb(98,98,98)"/><rect x="457" y="518" width="2" height="2" fill="rgb(87,87,87)"/><rect x="1013" y="581" width="2" height="2" fill="rgb(94,94,94)"/><rect x="1386" y="277" width="2" height="2" fill="rgb(108,108,108)"/><rect x="877" y="960" width="2" height="2" fill="rgb(103,103,103)"/><rect x="545" y="778" width="2" height="2" fill="rgb(95,95,95)"/><rect x="880" y="333" width="2" height="2" fill="rgb(96,96,81)"/><rect x="563" y="936" width="2" height="2" fill="rgb(118,118,103)"/><rect x="333" y="1033" width="2" height="2" fill="rgb(123,123,123)"/><rect x="917" y="746" width="2" height="2" fill="rgb(122,122,122)"/><rect x="837" y="798" width="1" height="1" fill="rgb(103,103,88)"/><rect x="263" y="609" width="2" height="2" fill="rgb(118,118,118)"/><rect x="531" y="985" width="2" height="2" fill="rgb(91,91,91)"/><rect x="1252" y="999" width="2" height="2" fill="rgb(106,106,106)"/><rect x="930" y="775" width="2" height="2" fill="rgb(90,90,90)"/><rect x="200" y="950" width="2" height="2" fill="rgb(83,113,108)"/><rect x="740" y="674" width="2" height="2" fill="rgb(108,108,108)"/><rect x="335" y="322" width="1" height="1" fill="rgb(104,104,104)"/><rect x="1280" y="570" width="2" height="2" fill="rgb(122,122,122)"/><rect x="569" y="919" width="1" height="1" fill="rgb(89,89,89)"/><rect x="281" y="327" width="2" height="2" fill="rgb(115,115,115)"/><rect x="981" y="1038" width="1" height="1" fill="rgb(125,125,125)"/><rect x="196" y="950" width="2" height="2" fill="rgb(124,124,124)"/><rect x="1340" y="614" width="1" height="1" fill="rgb(123,123,123)"/><rect x="794" y="513" width="2" height="2" fill="rgb(124,124,124)"/><rect x="1163" y="693" width="2" height="2" fill="rgb(93,93,93)"/><rect x="717" y="714" width="2" height="2" fill="rgb(94,94,94)"/><rect x="475" y="301" width="2" height="2" fill="rgb(125,125,110)"/><rect x="671" y="565" width="2" height="2" fill="rgb(110,110,110)"/><rect x="1032" y="930" width="2" height="2" fill="rgb(102,102,102)"/><rect x="1118" y="464" width="2" height="2" fill="rgb(104,104,104)"/><rect x="1111" y="795" width="1" height="1" fill="rgb(112,112,112)"/><rect x="912" y="815" width="2" height="2" fill="rgb(88,88,88)"/><rect x="618" y="822" width="2" height="2" fill="rgb(109,109,94)"/><rect x="492" y="1066" width="2" height="2" fill="rgb(98,98,98)"/><rect x="668" y="433" width="1" height="1" fill="rgb(117,117,117)"/><rect x="1155" y="480" width="2" height="2" fill="rgb(121,121,121)"/><rect x="863" y="773" width="2" height="2" fill="rgb(104,134,129)"/><rect x="904" y="474" width="2" height="2" fill="rgb(100,100,85)"/><rect x="960" y="962" width="2" height="2" fill="rgb(91,91,91)"/><rect x="1174" y="499" width="1" height="1" fill="rgb(106,106,106)"/><rect x="553" y="419" width="1" height="1" fill="rgb(120,120,105)"/><rect x="1344" y="804" width="2" height="2" fill="rgb(106,106,106)"/><rect x="929" y="905" width="2" height="2" fill="rgb(102,102,102)"/><rect x="1238" y="626" width="1" height="1" fill="rgb(92,92,77)"/><rect x="175" y="838" width="1" height="1" fill="rgb(95,95,95)"/><rect x="893" y="860" width="2" height="2" fill="rgb(122,122,122)"/><rect x="1001" y="1019" width="2" height="2" fill="rgb(107,107,107)"/><rect x="242" y="794" width="2" height="2" fill="rgb(90,90,90)"/><rect x="691" y="987" width="2" height="2" fill="rgb(92,92,92)"/><rect x="1359" y="897" width="2" height="2" fill="rgb(119,119,119)"/><rect x="949" y="702" width="2" height="2" fill="rgb(125,125,125)"/><rect x="1165" y="838" width="2" height="2" fill="rgb(127,127,112)"/><rect x="1091" y="693" width="1" height="1" fill="rgb(88,88,88)"/><rect x="1347" y="1061" width="2" height="2" fill="rgb(99,129,124)"/><rect x="610" y="781" width="2" height="2" fill="rgb(124,124,124)"/><rect x="888" y="705" width="1" height="1" fill="rgb(92,92,92)"/><rect x="1015" y="277" width="2" height="2" fill="rgb(115,115,115)"/><rect x="530" y="1011" width="2" height="2" fill="rgb(109,109,109)"/><rect x="1279" y="910" width="2" height="2" fill="rgb(118,118,103)"/><rect x="584" y="378" width="2" height="2" fill="rgb(127,127,112)"/><rect x="1185" y="293" width="1" height="1" fill="rgb(98,98,98)"/><rect x="1292" y="354" width="2" height="2" fill="rgb(124,124,124)"/><rect x="1214" y="680" width="2" height="2" fill="rgb(95,95,95)"/><rect x="327" y="825" width="2" height="2" fill="rgb(99,99,99)"/><rect x="238" y="798" width="2" height="2" fill="rgb(116,116,101)"/><rect x="1059" y="872" width="2" height="2" fill="rgb(111,111,111)"/><rect x="217" y="1001" width="1" height="1" fill="rgb(97,97,82)"/><rect x="727" y="1039" width="1" height="1" fill="rgb(129,129,114)"/><rect x="513" y="691" width="2" height="2" fill="rgb(121,121,121)"/><rect x="569" y="981" width="2" height="2" fill="rgb(117,117,102)"/><rect x="1116" y="600" width="1" height="1" fill="rgb(108,108,93)"/><rect x="410" y="686" width="2" height="2" fill="rgb(114,114,114)"/><rect x="472" y="528" width="2" height="2" fill="rgb(114,114,114)"/><rect x="1110" y="398" width="2" height="2" fill="rgb(99,99,99)"/><rect x="1299" y="348" width="2" height="2" fill="rgb(93,93,78)"/><rect x="564" y="439" width="2" height="2" fill="rgb(105,135,130)"/><rect x="436" y="467" width="2" height="2" fill="rgb(113,113,113)"/><rect x="715" y="906" width="1" height="1" fill="rgb(103,103,103)"/><rect x="1013" y="872" width="2" height="2" fill="rgb(97,97,97)"/><rect x="237" y="763" width="2" height="2" fill="rgb(104,134,129)"/><rect x="693" y="418" width="2" height="2" fill="rgb(85,85,85)"/><rect x="228" y="612" width="1" height="1" fill="rgb(105,105,105)"/><rect x="792" y="846" width="2" height="2" fill="rgb(124,124,124)"/><rect x="1209" y="609" width="1" height="1" fill="rgb(115,115,100)"/><rect x="742" y="680" width="2" height="2" fill="rgb(101,101,101)"/><rect x="1074" y="879" width="2" height="2" fill="rgb(93,93,93)"/><rect x="905" y="371" width="2" height="2" fill="rgb(119,119,119)"/><rect x="966" y="414" width="2" height="2" fill="rgb(103,103,103)"/><rect x="1224" y="655" width="2" height="2" fill="rgb(87,87,87)"/><rect x="266" y="686" width="2" height="2" fill="rgb(97,97,97)"/><rect x="598" y="387" width="2" height="2" fill="rgb(98,98,98)"/><rect x="660" y="370" width="2" height="2" fill="rgb(85,85,85)"/><rect x="790" y="535" width="2" height="2" fill="rgb(122,122,122)"/><rect x="422" y="657" width="2" height="2" fill="rgb(86,86,86)"/><rect x="828" y="694" width="2" height="2" fill="rgb(124,124,124)"/><rect x="1341" y="992" width="2" height="2" fill="rgb(89,89,89)"/><rect x="335" y="934" width="2" height="2" fill="rgb(92,92,77)"/><rect x="552" y="464" width="2" height="2" fill="rgb(117,117,117)"/><rect x="212" y="867" width="2" height="2" fill="rgb(91,91,91)"/><rect x="1375" y="833" width="2" height="2" fill="rgb(114,114,114)"/><rect x="327" y="840" width="2" height="2" fill="rgb(125,125,125)"/><rect x="1133" y="594" width="2" height="2" fill="rgb(120,120,120)"/><rect x="221" y="476" width="1" height="1" fill="rgb(119,119,119)"/><rect x="650" y="375" width="2" height="2" fill="rgb(116,116,116)"/><rect x="862" y="974" width="2" height="2" fill="rgb(78,108,103)"/><rect x="220" y="316" width="2" height="2" fill="rgb(122,122,122)"/><rect x="914" y="766" width="2" height="2" fill="rgb(85,85,85)"/><rect x="970" y="470" width="2" height="2" fill="rgb(94,94,94)"/><rect x="732" y="781" width="2" height="2" fill="rgb(119,119,119)"/><rect x="1001" y="888" width="2" height="2" fill="rgb(90,90,90)"/><rect x="722" y="528" width="2" height="2" fill="rgb(122,122,107)"/><rect x="638" y="325" width="2" height="2" fill="rgb(122,122,122)"/><rect x="965" y="991" width="2" height="2" fill="rgb(94,94,94)"/><rect x="719" y="348" width="2" height="2" fill="rgb(119,119,119)"/><rect x="660" y="822" width="2" height="2" fill="rgb(125,125,125)"/><rect x="1035" y="1026" width="2" height="2" fill="rgb(119,119,119)"/><rect x="1212" y="942" width="2" height="2" fill="rgb(106,106,106)"/><rect x="502" y="1062" width="2" height="2" fill="rgb(128,128,113)"/><rect x="876" y="434" width="2" height="2" fill="rgb(124,124,124)"/><rect x="867" y="286" width="2" height="2" fill="rgb(123,123,108)"/><rect x="1064" y="593" width="2" height="2" fill="rgb(112,112,112)"/><rect x="1165" y="448" width="2" height="2" fill="rgb(113,113,113)"/><rect x="1129" y="329" width="1" height="1" fill="rgb(95,95,95)"/><rect x="811" y="323" width="2" height="2" fill="rgb(110,110,110)"/><rect x="542" y="330" width="2" height="2" fill="rgb(105,135,130)"/><rect x="301" y="590" width="1" height="1" fill="rgb(98,98,98)"/><rect x="570" y="360" width="2" height="2" fill="rgb(119,119,104)"/><rect x="366" y="574" width="2" height="2" fill="rgb(107,107,107)"/><rect x="166" y="821" width="2" height="2" fill="rgb(97,97,97)"/><rect x="354" y="566" width="2" height="2" fill="rgb(124,124,124)"/><rect x="321" y="631" width="2" height="2" fill="rgb(102,102,102)"/><rect x="1361" y="658" width="1" height="1" fill="rgb(122,122,122)"/><rect x="851" y="728" width="2" height="2" fill="rgb(101,101,101)"/><rect x="1062" y="1006" width="2" height="2" fill="rgb(123,123,123)"/><rect x="734" y="969" width="2" height="2" fill="rgb(99,99,99)"/><rect x="957" y="805" width="2" height="2" fill="rgb(125,125,110)"/><rect x="273" y="513" width="2" height="2" fill="rgb(105,135,130)"/><rect x="1115" y="928" width="2" height="2" fill="rgb(91,91,91)"/><rect x="795" y="443" width="1" height="1" fill="rgb(94,94,94)"/><rect x="667" y="349" width="2" height="2" fill="rgb(128,128,113)"/><rect x="201" y="701" width="2" height="2" fill="rgb(116,116,116)"/><rect x="1058" y="639" width="2" height="2" fill="rgb(107,107,107)"/><rect x="1387" y="328" width="2" height="2" fill="rgb(100,100,100)"/><rect x="1277" y="1006" width="2" height="2" fill="rgb(118,118,118)"/><rect x="675" y="918" width="2" height="2" fill="rgb(108,108,108)"/><rect x="847" y="979" width="2" height="2" fill="rgb(119,119,104)"/><rect x="736" y="1027" width="2" height="2" fill="rgb(118,118,118)"/><rect x="1178" y="478" width="2" height="2" fill="rgb(112,142,137)"/><rect x="439" y="717" width="2" height="2" fill="rgb(110,110,110)"/><rect x="494" y="328" width="2" height="2" fill="rgb(87,87,87)"/><rect x="565" y="389" width="2" height="2" fill="rgb(94,94,94)"/><rect x="409" y="936" width="2" height="2" fill="rgb(114,114,114)"/><rect x="541" y="305" width="1" height="1" fill="rgb(97,127,122)"/><rect x="334" y="659" width="1" height="1" fill="rgb(114,114,114)"/><rect x="370" y="690" width="1" height="1" fill="rgb(90,90,90)"/><rect x="432" y="659" width="1" height="1" fill="rgb(107,107,107)"/><rect x="403" y="436" width="1" height="1" fill="rgb(112,112,97)"/><rect x="712" y="849" width="2" height="2" fill="rgb(90,90,90)"/><rect x="965" y="546" width="2" height="2" fill="rgb(118,118,118)"/><rect x="470" y="922" width="2" height="2" fill="rgb(110,110,110)"/><rect x="1242" y="919" width="1" height="1" fill="rgb(105,105,105)"/><rect x="634" y="853" width="2" height="2" fill="rgb(108,108,108)"/><rect x="915" y="656" width="2" height="2" fill="rgb(120,120,105)"/><rect x="1172" y="434" width="1" height="1" fill="rgb(85,85,85)"/><rect x="779" y="476" width="2" height="2" fill="rgb(95,95,95)"/><rect x="903" y="798" width="2" height="2" fill="rgb(90,90,90)"/><rect x="420" y="350" width="2" height="2" fill="rgb(120,120,105)"/><rect x="1061" y="887" width="1" height="1" fill="rgb(96,96,96)"/><rect x="1317" y="952" width="2" height="2" fill="rgb(114,114,99)"/><rect x="1051" y="494" width="1" height="1" fill="rgb(91,91,91)"/><rect x="1097" y="459" width="2" height="2" fill="rgb(86,86,86)"/><rect x="1191" y="280" width="2" height="2" fill="rgb(105,105,90)"/><rect x="795" y="815" width="2" height="2" fill="rgb(108,108,108)"/><rect x="397" y="344" width="2" height="2" fill="rgb(119,119,119)"/><rect x="1243" y="1059" width="1" height="1" fill="rgb(112,112,112)"/><rect x="687" y="592" width="1" height="1" fill="rgb(90,90,90)"/><rect x="705" y="565" width="1" height="1" fill="rgb(91,91,91)"/><rect x="1389" y="672" width="1" height="1" fill="rgb(93,93,93)"/><rect x="416" y="1028" width="2" height="2" fill="rgb(124,124,109)"/><rect x="908" y="528" width="2" height="2" fill="rgb(92,92,92)"/><rect x="952" y="419" width="2" height="2" fill="rgb(119,119,119)"/><rect x="828" y="672" width="2" height="2" fill="rgb(92,92,92)"/><rect x="952" y="822" width="1" height="1" fill="rgb(108,108,108)"/><rect x="945" y="286" width="2" height="2" fill="rgb(105,105,105)"/><rect x="1254" y="935" width="2" height="2" fill="rgb(94,94,94)"/><rect x="1217" y="1040" width="2" height="2" fill="rgb(112,112,97)"/><rect x="1191" y="613" width="2" height="2" fill="rgb(95,95,95)"/><rect x="509" y="347" width="1" height="1" fill="rgb(97,97,82)"/><rect x="987" y="510" width="2" height="2" fill="rgb(126,126,111)"/><rect x="826" y="771" width="2" height="2" fill="rgb(87,87,87)"/><rect x="679" y="998" width="2" height="2" fill="rgb(122,122,122)"/><rect x="953" y="582" width="1" height="1" fill="rgb(88,88,88)"/><rect x="1290" y="1044" width="2" height="2" fill="rgb(107,107,107)"/><rect x="814" y="386" width="1" height="1" fill="rgb(105,105,90)"/><rect x="597" y="605" width="2" height="2" fill="rgb(100,100,100)"/><rect x="1081" y="791" width="2" height="2" fill="rgb(99,99,99)"/><rect x="1327" y="517" width="2" height="2" fill="rgb(106,106,106)"/><rect x="193" y="378" width="1" height="1" fill="rgb(94,94,79)"/><rect x="969" y="935" width="1" height="1" fill="rgb(117,117,102)"/><rect x="656" y="1059" width="2" height="2" fill="rgb(91,91,91)"/><rect x="1288" y="279" width="2" height="2" fill="rgb(108,138,133)"/><rect x="474" y="801" width="2" height="2" fill="rgb(118,118,118)"/><rect x="1212" y="550" width="1" height="1" fill="rgb(123,123,108)"/><rect x="315" y="698" width="2" height="2" fill="rgb(112,112,112)"/><rect x="919" y="668" width="2" height="2" fill="rgb(103,103,103)"/><rect x="781" y="1006" width="1" height="1" fill="rgb(104,104,104)"/><rect x="320" y="350" width="2" height="2" fill="rgb(125,125,125)"/><rect x="939" y="1027" width="2" height="2" fill="rgb(99,99,99)"/><rect x="321" y="565" width="2" height="2" fill="rgb(103,103,103)"/><rect x="685" y="596" width="2" height="2" fill="rgb(116,116,116)"/><rect x="597" y="551" width="2" height="2" fill="rgb(109,109,109)"/><rect x="619" y="822" width="2" height="2" fill="rgb(90,90,90)"/><rect x="574" y="937" width="2" height="2" fill="rgb(122,122,122)"/><rect x="1142" y="338" width="2" height="2" fill="rgb(120,120,120)"/><rect x="306" y="654" width="2" height="2" fill="rgb(93,93,93)"/><rect x="846" y="742" width="2" height="2" fill="rgb(101,101,101)"/><rect x="222" y="317" width="2" height="2" fill="rgb(124,124,124)"/><rect x="721" y="292" width="2" height="2" fill="rgb(94,94,94)"/><rect x="1387" y="695" width="2" height="2" fill="rgb(104,104,89)"/><rect x="696" y="818" width="1" height="1" fill="rgb(88,88,88)"/><rect x="439" y="666" width="1" height="1" fill="rgb(103,103,103)"/><rect x="305" y="465" width="2" height="2" fill="rgb(125,125,125)"/><rect x="768" y="409" width="2" height="2" fill="rgb(99,99,84)"/><rect x="1302" y="328" width="2" height="2" fill="rgb(91,91,91)"/><rect x="580" y="1039" width="2" height="2" fill="rgb(106,106,106)"/><rect x="197" y="729" width="1" height="1" fill="rgb(125,125,125)"/><rect x="289" y="859" width="2" height="2" fill="rgb(106,106,106)"/><rect x="873" y="815" width="1" height="1" fill="rgb(92,92,92)"/><rect x="859" y="669" width="2" height="2" fill="rgb(120,120,120)"/><rect x="1282" y="715" width="1" height="1" fill="rgb(119,119,119)"/><rect x="1070" y="830" width="2" height="2" fill="rgb(92,92,92)"/><rect x="1361" y="791" width="2" height="2" fill="rgb(124,124,124)"/><rect x="644" y="457" width="2" height="2" fill="rgb(112,142,137)"/><rect x="659" y="551" width="2" height="2" fill="rgb(111,111,111)"/><rect x="724" y="856" width="2" height="2" fill="rgb(79,109,104)"/><rect x="832" y="376" width="2" height="2" fill="rgb(107,107,107)"/><rect x="578" y="940" width="2" height="2" fill="rgb(105,105,90)"/><rect x="555" y="506" width="2" height="2" fill="rgb(99,99,99)"/><rect x="314" y="783" width="2" height="2" fill="rgb(91,91,76)"/><rect x="1265" y="929" width="2" height="2" fill="rgb(113,113,113)"/><rect x="960" y="521" width="2" height="2" fill="rgb(101,131,126)"/><rect x="1316" y="702" width="2" height="2" fill="rgb(92,92,92)"/><rect x="1090" y="426" width="2" height="2" fill="rgb(115,115,100)"/><rect x="1332" y="332" width="1" height="1" fill="rgb(116,116,116)"/><rect x="940" y="389" width="2" height="2" fill="rgb(120,120,105)"/><rect x="542" y="1051" width="1" height="1" fill="rgb(118,118,118)"/><rect x="573" y="1066" width="1" height="1" fill="rgb(105,105,105)"/><rect x="218" y="327" width="2" height="2" fill="rgb(92,92,77)"/><rect x="781" y="1047" width="1" height="1" fill="rgb(88,118,113)"/><rect x="416" y="540" width="2" height="2" fill="rgb(89,89,89)"/><rect x="253" y="589" width="2" height="2" fill="rgb(101,101,101)"/><rect x="646" y="674" width="2" height="2" fill="rgb(90,120,115)"/><rect x="708" y="998" width="2" height="2" fill="rgb(87,87,87)"/><rect x="373" y="707" width="2" height="2" fill="rgb(93,93,93)"/><rect x="1126" y="567" width="1" height="1" fill="rgb(122,122,122)"/><rect x="835" y="1045" width="2" height="2" fill="rgb(112,112,112)"/><rect x="1365" y="473" width="2" height="2" fill="rgb(115,115,115)"/><rect x="662" y="861" width="2" height="2" fill="rgb(101,101,101)"/><rect x="932" y="939" width="1" height="1" fill="rgb(87,87,87)"/><rect x="628" y="851" width="2" height="2" fill="rgb(130,130,115)"/><rect x="624" y="647" width="1" height="1" fill="rgb(106,106,106)"/><rect x="857" y="828" width="1" height="1" fill="rgb(121,121,121)"/><rect x="1128" y="1037" width="2" height="2" fill="rgb(110,110,110)"/><rect x="1084" y="995" width="2" height="2" fill="rgb(90,90,90)"/><rect x="631" y="349" width="2" height="2" fill="rgb(118,118,118)"/><rect x="743" y="566" width="1" height="1" fill="rgb(122,122,122)"/><rect x="668" y="744" width="2" height="2" fill="rgb(88,88,88)"/><rect x="1142" y="1015" width="2" height="2" fill="rgb(102,102,102)"/><rect x="972" y="1052" width="1" height="1" fill="rgb(105,105,105)"/><rect x="744" y="918" width="2" height="2" fill="rgb(93,93,93)"/><rect x="565" y="997" width="2" height="2" fill="rgb(104,134,129)"/><rect x="1376" y="393" width="1" height="1" fill="rgb(90,120,115)"/><rect x="758" y="450" width="2" height="2" fill="rgb(121,121,121)"/><rect x="1143" y="726" width="2" height="2" fill="rgb(122,122,122)"/><rect x="647" y="537" width="1" height="1" fill="rgb(124,124,124)"/><rect x="827" y="967" width="2" height="2" fill="rgb(125,125,125)"/><rect x="807" y="753" width="2" height="2" fill="rgb(115,115,115)"/><rect x="1156" y="927" width="2" height="2" fill="rgb(109,109,109)"/><rect x="1088" y="733" width="2" height="2" fill="rgb(95,95,95)"/><rect x="799" y="1040" width="2" height="2" fill="rgb(87,117,112)"/><rect x="1241" y="811" width="1" height="1" fill="rgb(105,105,105)"/><rect x="1386" y="435" width="1" height="1" fill="rgb(98,98,98)"/><rect x="1229" y="484" width="2" height="2" fill="rgb(111,111,111)"/><rect x="829" y="660" width="2" height="2" fill="rgb(102,102,87)"/><rect x="806" y="1054" width="2" height="2" fill="rgb(97,97,97)"/><rect x="1157" y="657" width="2" height="2" fill="rgb(113,113,113)"/><rect x="404" y="872" width="2" height="2" fill="rgb(105,135,130)"/><rect x="361" y="1035" width="2" height="2" fill="rgb(106,106,106)"/><rect x="847" y="402" width="2" height="2" fill="rgb(99,99,99)"/><rect x="823" y="307" width="2" height="2" fill="rgb(104,104,104)"/><rect x="648" y="984" width="2" height="2" fill="rgb(115,115,115)"/><rect x="307" y="699" width="2" height="2" fill="rgb(115,115,115)"/><rect x="541" y="576" width="1" height="1" fill="rgb(92,92,92)"/><rect x="357" y="936" width="1" height="1" fill="rgb(104,104,89)"/><rect x="243" y="674" width="2" height="2" fill="rgb(125,125,125)"/><rect x="543" y="702" width="1" height="1" fill="rgb(100,100,100)"/><rect x="290" y="635" width="2" height="2" fill="rgb(89,89,89)"/><rect x="1355" y="636" width="2" height="2" fill="rgb(113,113,113)"/><rect x="1331" y="541" width="2" height="2" fill="rgb(124,124,124)"/><rect x="831" y="487" width="2" height="2" fill="rgb(104,104,104)"/><rect x="416" y="507" width="2" height="2" fill="rgb(124,124,124)"/><rect x="840" y="525" width="2" height="2" fill="rgb(87,87,87)"/><rect x="596" y="720" width="2" height="2" fill="rgb(127,127,112)"/><rect x="418" y="1020" width="2" height="2" fill="rgb(100,100,85)"/><rect x="614" y="330" width="2" height="2" fill="rgb(95,95,95)"/><rect x="454" y="466" width="2" height="2" fill="rgb(118,118,103)"/><rect x="903" y="284" width="1" height="1" fill="rgb(88,88,88)"/><rect x="992" y="939" width="2" height="2" fill="rgb(92,92,77)"/><rect x="598" y="766" width="2" height="2" fill="rgb(111,111,111)"/><rect x="1130" y="385" width="2" height="2" fill="rgb(115,115,115)"/><rect x="597" y="1038" width="1" height="1" fill="rgb(93,93,93)"/><rect x="1217" y="803" width="2" height="2" fill="rgb(103,103,103)"/><rect x="234" y="322" width="2" height="2" fill="rgb(97,97,97)"/><rect x="712" y="743" width="2" height="2" fill="rgb(122,122,122)"/><rect x="702" y="777" width="2" height="2" fill="rgb(86,86,86)"/><rect x="177" y="820" width="1" height="1" fill="rgb(116,116,116)"/><rect x="238" y="986" width="1" height="1" fill="rgb(102,102,102)"/><rect x="971" y="433" width="2" height="2" fill="rgb(92,92,92)"/><rect x="743" y="949" width="2" height="2" fill="rgb(98,128,123)"/><rect x="1186" y="896" width="1" height="1" fill="rgb(124,124,124)"/><rect x="1320" y="464" width="1" height="1" fill="rgb(113,113,113)"/><rect x="352" y="279" width="1" height="1" fill="rgb(122,122,122)"/><rect x="738" y="529" width="2" height="2" fill="rgb(84,114,109)"/><rect x="368" y="1057" width="2" height="2" fill="rgb(118,118,118)"/><rect x="321" y="848" width="2" height="2" fill="rgb(99,129,124)"/><rect x="917" y="696" width="1" height="1" fill="rgb(108,138,133)"/><rect x="835" y="457" width="2" height="2" fill="rgb(112,112,112)"/><rect x="1286" y="822" width="2" height="2" fill="rgb(103,103,103)"/><rect x="348" y="917" width="2" height="2" fill="rgb(91,91,91)"/><rect x="501" y="801" width="2" height="2" fill="rgb(115,115,115)"/><rect x="1202" y="663" width="2" height="2" fill="rgb(118,118,118)"/><rect x="1167" y="564" width="1" height="1" fill="rgb(97,97,97)"/><rect x="824" y="363" width="2" height="2" fill="rgb(124,124,124)"/><rect x="1229" y="568" width="2" height="2" fill="rgb(100,100,100)"/><rect x="936" y="827" width="2" height="2" fill="rgb(91,91,91)"/><rect x="954" y="855" width="2" height="2" fill="rgb(101,101,101)"/><rect x="222" y="816" width="2" height="2" fill="rgb(95,95,95)"/><rect x="520" y="995" width="2" height="2" fill="rgb(111,141,136)"/><rect x="901" y="837" width="2" height="2" fill="rgb(105,135,130)"/><rect x="455" y="803" width="1" height="1" fill="rgb(109,109,94)"/><rect x="804" y="704" width="2" height="2" fill="rgb(110,110,110)"/><rect x="1303" y="969" width="2" height="2" fill="rgb(120,120,120)"/><rect x="654" y="423" width="2" height="2" fill="rgb(87,87,87)"/><rect x="557" y="990" width="2" height="2" fill="rgb(93,93,93)"/><rect x="333" y="620" width="2" height="2" fill="rgb(93,93,93)"/><rect x="586" y="859" width="2" height="2" fill="rgb(114,114,114)"/><rect x="745" y="486" width="2" height="2" fill="rgb(113,113,113)"/><rect x="334" y="304" width="1" height="1" fill="rgb(85,85,85)"/><rect x="384" y="719" width="2" height="2" fill="rgb(124,124,124)"/><rect x="385" y="478" width="2" height="2" fill="rgb(129,129,114)"/><rect x="967" y="990" width="2" height="2" fill="rgb(95,95,95)"/><rect x="938" y="875" width="2" height="2" fill="rgb(119,119,104)"/><rect x="1300" y="607" width="2" height="2" fill="rgb(120,120,105)"/><rect x="282" y="1026" width="2" height="2" fill="rgb(125,125,125)"/><rect x="1079" y="345" width="2" height="2" fill="rgb(92,92,92)"/><rect x="191" y="416" width="2" height="2" fill="rgb(86,86,86)"/><rect x="246" y="733" width="2" height="2" fill="rgb(120,120,105)"/><rect x="829" y="853" width="2" height="2" fill="rgb(102,102,102)"/><rect x="387" y="549" width="2" height="2" fill="rgb(92,92,92)"/><rect x="338" y="819" width="2" height="2" fill="rgb(92,92,92)"/><rect x="260" y="990" width="2" height="2" fill="rgb(88,88,88)"/><rect x="171" y="277" width="2" height="2" fill="rgb(103,103,103)"/><rect x="971" y="739" width="2" height="2" fill="rgb(125,125,125)"/><rect x="1102" y="275" width="1" height="1" fill="rgb(117,117,117)"/><rect x="991" y="1034" width="2" height="2" fill="rgb(91,91,91)"/><rect x="331" y="928" width="2" height="2" fill="rgb(86,86,86)"/><rect x="803" y="816" width="2" height="2" fill="rgb(100,130,125)"/><rect x="493" y="795" width="2" height="2" fill="rgb(101,101,101)"/><rect x="905" y="969" width="2" height="2" fill="rgb(86,86,86)"/><rect x="1095" y="734" width="2" height="2" fill="rgb(120,120,120)"/><rect x="878" y="626" width="2" height="2" fill="rgb(94,94,94)"/><rect x="768" y="336" width="2" height="2" fill="rgb(86,86,86)"/><rect x="770" y="729" width="2" height="2" fill="rgb(102,102,102)"/><rect x="153" y="999" width="2" height="2" fill="rgb(113,113,98)"/><rect x="445" y="578" width="2" height="2" fill="rgb(118,118,118)"/><rect x="1120" y="633" width="2" height="2" fill="rgb(92,92,92)"/><rect x="533" y="468" width="2" height="2" fill="rgb(116,116,116)"/><rect x="1387" y="724" width="2" height="2" fill="rgb(104,104,104)"/><rect x="798" y="607" width="2" height="2" fill="rgb(115,115,115)"/><rect x="762" y="942" width="2" height="2" fill="rgb(92,92,92)"/><rect x="979" y="471" width="2" height="2" fill="rgb(124,124,124)"/><rect x="200" y="1038" width="2" height="2" fill="rgb(116,116,101)"/><rect x="981" y="511" width="2" height="2" fill="rgb(105,105,105)"/><rect x="444" y="601" width="1" height="1" fill="rgb(103,103,103)"/><rect x="334" y="632" width="2" height="2" fill="rgb(89,89,89)"/><rect x="953" y="774" width="1" height="1" fill="rgb(118,118,103)"/><rect x="638" y="852" width="1" height="1" fill="rgb(97,97,97)"/><rect x="649" y="708" width="1" height="1" fill="rgb(122,122,122)"/><rect x="171" y="1038" width="2" height="2" fill="rgb(103,133,128)"/><rect x="768" y="684" width="2" height="2" fill="rgb(110,110,110)"/><rect x="330" y="608" width="2" height="2" fill="rgb(118,118,103)"/><rect x="174" y="510" width="2" height="2" fill="rgb(110,110,110)"/><rect x="597" y="689" width="2" height="2" fill="rgb(95,95,95)"/><rect x="356" y="746" width="2" height="2" fill="rgb(109,109,94)"/><rect x="311" y="793" width="2" height="2" fill="rgb(90,90,90)"/><rect x="445" y="428" width="2" height="2" fill="rgb(115,115,115)"/><rect x="423" y="388" width="2" height="2" fill="rgb(93,93,93)"/><rect x="462" y="464" width="2" height="2" fill="rgb(103,103,103)"/><rect x="595" y="425" width="1" height="1" fill="rgb(92,92,92)"/><rect x="550" y="904" width="2" height="2" fill="rgb(87,87,87)"/><rect x="1363" y="893" width="1" height="1" fill="rgb(121,121,121)"/><rect x="919" y="767" width="1" height="1" fill="rgb(114,114,99)"/><rect x="900" y="348" width="2" height="2" fill="rgb(116,116,116)"/><rect x="626" y="288" width="2" height="2" fill="rgb(118,118,118)"/><rect x="1184" y="388" width="1" height="1" fill="rgb(111,111,111)"/><rect x="1108" y="451" width="2" height="2" fill="rgb(109,109,109)"/><rect x="564" y="370" width="2" height="2" fill="rgb(119,119,119)"/><rect x="443" y="1009" width="1" height="1" fill="rgb(125,125,125)"/><rect x="1342" y="868" width="2" height="2" fill="rgb(89,89,89)"/><rect x="833" y="398" width="1" height="1" fill="rgb(89,89,89)"/><rect x="923" y="325" width="2" height="2" fill="rgb(95,95,95)"/><rect x="250" y="756" width="2" height="2" fill="rgb(104,104,104)"/><rect x="1022" y="524" width="2" height="2" fill="rgb(114,114,114)"/><rect x="835" y="544" width="2" height="2" fill="rgb(95,95,95)"/><rect x="1327" y="858" width="2" height="2" fill="rgb(85,85,85)"/><rect x="867" y="931" width="2" height="2" fill="rgb(123,123,123)"/><rect x="1123" y="824" width="2" height="2" fill="rgb(90,90,90)"/><rect x="854" y="950" width="2" height="2" fill="rgb(111,111,111)"/><rect x="1343" y="389" width="2" height="2" fill="rgb(89,89,89)"/><rect x="1004" y="1057" width="2" height="2" fill="rgb(88,118,113)"/><rect x="383" y="881" width="1" height="1" fill="rgb(94,94,94)"/><rect x="874" y="715" width="1" height="1" fill="rgb(123,123,108)"/><rect x="227" y="516" width="2" height="2" fill="rgb(91,121,116)"/><rect x="480" y="370" width="2" height="2" fill="rgb(107,107,107)"/><rect x="1218" y="580" width="2" height="2" fill="rgb(93,93,93)"/><rect x="1156" y="600" width="2" height="2" fill="rgb(101,101,101)"/><rect x="1297" y="425" width="1" height="1" fill="rgb(124,124,124)"/><rect x="1124" y="813" width="2" height="2" fill="rgb(118,118,118)"/><rect x="946" y="404" width="2" height="2" fill="rgb(90,90,90)"/><rect x="947" y="516" width="1" height="1" fill="rgb(102,102,102)"/><rect x="921" y="883" width="1" height="1" fill="rgb(108,108,108)"/><rect x="408" y="634" width="2" height="2" fill="rgb(87,87,87)"/><rect x="927" y="718" width="2" height="2" fill="rgb(93,93,93)"/><rect x="231" y="568" width="1" height="1" fill="rgb(113,113,113)"/><rect x="744" y="848" width="2" height="2" fill="rgb(95,95,95)"/><rect x="1106" y="1009" width="2" height="2" fill="rgb(97,97,97)"/><rect x="1045" y="364" width="1" height="1" fill="rgb(105,105,105)"/><rect x="951" y="333" width="1" height="1" fill="rgb(110,110,110)"/><rect x="1277" y="659" width="2" height="2" fill="rgb(94,94,94)"/><rect x="1253" y="346" width="1" height="1" fill="rgb(115,145,140)"/><rect x="521" y="352" width="2" height="2" fill="rgb(122,122,122)"/><rect x="1259" y="554" width="2" height="2" fill="rgb(116,116,101)"/><rect x="809" y="793" width="2" height="2" fill="rgb(104,104,104)"/><rect x="1377" y="403" width="2" height="2" fill="rgb(107,107,107)"/><rect x="744" y="1011" width="1" height="1" fill="rgb(121,121,121)"/><rect x="972" y="327" width="2" height="2" fill="rgb(85,115,110)"/><rect x="166" y="316" width="1" height="1" fill="rgb(87,87,87)"/><rect x="1249" y="791" width="2" height="2" fill="rgb(108,108,108)"/><rect x="209" y="609" width="1" height="1" fill="rgb(113,113,113)"/><rect x="767" y="567" width="1" height="1" fill="rgb(122,122,122)"/><rect x="988" y="1056" width="2" height="2" fill="rgb(112,112,112)"/><rect x="1148" y="912" width="2" height="2" fill="rgb(111,111,111)"/><rect x="240" y="597" width="2" height="2" fill="rgb(108,108,108)"/><rect x="587" y="944" width="2" height="2" fill="rgb(124,124,124)"/><rect x="1206" y="853" width="1" height="1" fill="rgb(103,103,88)"/><rect x="505" y="619" width="2" height="2" fill="rgb(91,91,91)"/><rect x="1026" y="867" width="2" height="2" fill="rgb(99,99,99)"/><rect x="337" y="757" width="2" height="2" fill="rgb(126,126,111)"/><rect x="1290" y="713" width="2" height="2" fill="rgb(96,96,96)"/><rect x="631" y="748" width="2" height="2" fill="rgb(113,113,113)"/><rect x="718" y="640" width="2" height="2" fill="rgb(118,118,118)"/><rect x="442" y="713" width="2" height="2" fill="rgb(106,106,106)"/><rect x="243" y="1063" width="2" height="2" fill="rgb(113,113,113)"/><rect x="1251" y="1060" width="1" height="1" fill="rgb(85,85,85)"/><rect x="298" y="824" width="2" height="2" fill="rgb(107,107,92)"/><rect x="1306" y="344" width="1" height="1" fill="rgb(86,86,86)"/><rect x="1112" y="372" width="2" height="2" fill="rgb(112,112,112)"/><rect x="571" y="528" width="2" height="2" fill="rgb(81,111,106)"/><rect x="1129" y="804" width="2" height="2" fill="rgb(125,125,125)"/><rect x="951" y="324" width="2" height="2" fill="rgb(125,125,125)"/><rect x="1204" y="796" width="2" height="2" fill="rgb(106,106,106)"/><rect x="673" y="555" width="2" height="2" fill="rgb(124,124,124)"/><rect x="1261" y="911" width="2" height="2" fill="rgb(107,107,107)"/><rect x="1060" y="876" width="2" height="2" fill="rgb(88,88,88)"/><rect x="716" y="463" width="1" height="1" fill="rgb(114,114,114)"/><rect x="923" y="1054" width="2" height="2" fill="rgb(118,118,118)"/><rect x="467" y="671" width="2" height="2" fill="rgb(75,105,100)"/><rect x="1209" y="499" width="2" height="2" fill="rgb(104,104,104)"/><rect x="796" y="1030" width="1" height="1" fill="rgb(93,93,93)"/><rect x="990" y="577" width="2" height="2" fill="rgb(116,116,116)"/><rect x="257" y="812" width="2" height="2" fill="rgb(119,119,119)"/><rect x="1190" y="345" width="2" height="2" fill="rgb(112,142,137)"/><rect x="863" y="932" width="1" height="1" fill="rgb(110,110,110)"/><rect x="1256" y="915" width="1" height="1" fill="rgb(118,118,118)"/><rect x="304" y="280" width="2" height="2" fill="rgb(121,121,106)"/><rect x="802" y="320" width="2" height="2" fill="rgb(120,120,120)"/><rect x="1164" y="324" width="2" height="2" fill="rgb(111,111,96)"/><rect x="220" y="396" width="2" height="2" fill="rgb(111,111,111)"/><rect x="1297" y="499" width="2" height="2" fill="rgb(105,105,105)"/><rect x="545" y="803" width="1" height="1" fill="rgb(120,120,120)"/><rect x="965" y="304" width="2" height="2" fill="rgb(88,88,88)"/><rect x="573" y="357" width="1" height="1" fill="rgb(97,97,97)"/><rect x="170" y="645" width="2" height="2" fill="rgb(87,87,87)"/><rect x="553" y="299" width="1" height="1" fill="rgb(113,113,113)"/><rect x="1194" y="944" width="2" height="2" fill="rgb(82,112,107)"/><rect x="967" y="781" width="2" height="2" fill="rgb(94,94,94)"/><rect x="587" y="897" width="2" height="2" fill="rgb(95,95,95)"/><rect x="422" y="409" width="2" height="2" fill="rgb(113,113,98)"/><rect x="459" y="359" width="2" height="2" fill="rgb(89,89,89)"/><rect x="1267" y="446" width="2" height="2" fill="rgb(97,97,97)"/><rect x="471" y="1051" width="2" height="2" fill="rgb(114,114,114)"/><rect x="1154" y="501" width="2" height="2" fill="rgb(107,107,92)"/><rect x="1390" y="942" width="2" height="2" fill="rgb(92,92,92)"/><rect x="766" y="1026" width="2" height="2" fill="rgb(122,122,122)"/><rect x="1366" y="608" width="2" height="2" fill="rgb(97,97,97)"/><rect x="1092" y="671" width="2" height="2" fill="rgb(111,111,111)"/><rect x="1169" y="668" width="2" height="2" fill="rgb(115,115,100)"/><rect x="1349" y="572" width="2" height="2" fill="rgb(110,110,110)"/><rect x="461" y="342" width="2" height="2" fill="rgb(109,109,109)"/><rect x="1379" y="814" width="2" height="2" fill="rgb(119,119,119)"/><rect x="597" y="387" width="2" height="2" fill="rgb(114,114,114)"/><rect x="1160" y="468" width="2" height="2" fill="rgb(109,109,109)"/><rect x="870" y="719" width="2" height="2" fill="rgb(107,107,107)"/><rect x="1285" y="719" width="1" height="1" fill="rgb(87,87,87)"/><rect x="624" y="1040" width="2" height="2" fill="rgb(101,101,101)"/><rect x="228" y="1049" width="2" height="2" fill="rgb(78,108,103)"/><rect x="239" y="305" width="2" height="2" fill="rgb(98,98,98)"/><rect x="1149" y="588" width="2" height="2" fill="rgb(121,121,121)"/><rect x="873" y="852" width="2" height="2" fill="rgb(123,123,123)"/><rect x="793" y="369" width="2" height="2" fill="rgb(99,129,124)"/><rect x="1201" y="1057" width="2" height="2" fill="rgb(95,95,95)"/><rect x="852" y="817" width="2" height="2" fill="rgb(117,117,117)"/><rect x="667" y="483" width="2" height="2" fill="rgb(92,92,92)"/><rect x="983" y="663" width="2" height="2" fill="rgb(111,111,111)"/><rect x="1380" y="304" width="2" height="2" fill="rgb(107,107,107)"/><rect x="183" y="553" width="2" height="2" fill="rgb(112,112,112)"/><rect x="1120" y="653" width="2" height="2" fill="rgb(111,111,111)"/><rect x="487" y="955" width="2" height="2" fill="rgb(105,105,105)"/><rect x="239" y="895" width="2" height="2" fill="rgb(99,99,99)"/><rect x="363" y="564" width="2" height="2" fill="rgb(122,122,122)"/><rect x="1190" y="843" width="1" height="1" fill="rgb(90,90,90)"/><rect x="391" y="830" width="1" height="1" fill="rgb(90,90,75)"/><rect x="588" y="560" width="1" height="1" fill="rgb(94,124,119)"/><rect x="171" y="686" width="2" height="2" fill="rgb(125,125,125)"/><rect x="291" y="430" width="2" height="2" fill="rgb(114,114,114)"/><rect x="1133" y="318" width="2" height="2" fill="rgb(96,96,96)"/><rect x="809" y="364" width="2" height="2" fill="rgb(105,105,105)"/><rect x="1060" y="774" width="2" height="2" fill="rgb(114,114,114)"/><rect x="599" y="904" width="2" height="2" fill="rgb(92,92,92)"/><rect x="1259" y="488" width="2" height="2" fill="rgb(93,123,118)"/><rect x="209" y="552" width="2" height="2" fill="rgb(92,92,92)"/><rect x="898" y="875" width="2" height="2" fill="rgb(96,96,96)"/><rect x="1169" y="632" width="1" height="1" fill="rgb(104,104,89)"/><rect x="360" y="270" width="2" height="2" fill="rgb(99,99,84)"/><rect x="1291" y="778" width="1" height="1" fill="rgb(91,91,91)"/><rect x="679" y="765" width="2" height="2" fill="rgb(95,95,95)"/><rect x="1288" y="626" width="2" height="2" fill="rgb(106,106,106)"/><rect x="736" y="817" width="2" height="2" fill="rgb(121,121,121)"/><rect x="429" y="469" width="2" height="2" fill="rgb(123,123,123)"/><rect x="1065" y="507" width="2" height="2" fill="rgb(99,129,124)"/><rect x="286" y="340" width="2" height="2" fill="rgb(94,94,94)"/><rect x="828" y="1003" width="1" height="1" fill="rgb(104,104,104)"/><rect x="596" y="284" width="2" height="2" fill="rgb(109,109,109)"/><rect x="1105" y="343" width="2" height="2" fill="rgb(113,113,113)"/><rect x="628" y="799" width="2" height="2" fill="rgb(94,94,94)"/><rect x="566" y="629" width="2" height="2" fill="rgb(110,110,110)"/><rect x="388" y="619" width="2" height="2" fill="rgb(93,93,93)"/><rect x="863" y="929" width="2" height="2" fill="rgb(91,91,91)"/><rect x="1131" y="269" width="1" height="1" fill="rgb(92,92,92)"/><rect x="376" y="784" width="2" height="2" fill="rgb(99,99,99)"/><rect x="450" y="528" width="2" height="2" fill="rgb(122,122,122)"/><rect x="1110" y="1062" width="2" height="2" fill="rgb(99,99,99)"/><rect x="1080" y="1023" width="2" height="2" fill="rgb(97,97,97)"/><rect x="1140" y="920" width="2" height="2" fill="rgb(115,115,115)"/><rect x="1099" y="1030" width="1" height="1" fill="rgb(91,91,91)"/><rect x="1269" y="300" width="2" height="2" fill="rgb(102,102,102)"/><rect x="409" y="780" width="2" height="2" fill="rgb(89,89,89)"/><rect x="886" y="521" width="2" height="2" fill="rgb(98,98,83)"/><rect x="393" y="779" width="2" height="2" fill="rgb(117,117,117)"/><rect x="229" y="323" width="2" height="2" fill="rgb(104,104,104)"/><rect x="1090" y="933" width="2" height="2" fill="rgb(92,92,92)"/><rect x="1254" y="892" width="2" height="2" fill="rgb(122,122,122)"/><rect x="1172" y="510" width="2" height="2" fill="rgb(87,87,87)"/><rect x="292" y="530" width="2" height="2" fill="rgb(89,119,114)"/><rect x="230" y="1031" width="1" height="1" fill="rgb(115,115,115)"/><rect x="603" y="956" width="2" height="2" fill="rgb(121,121,121)"/><rect x="1348" y="1037" width="2" height="2" fill="rgb(99,99,99)"/><rect x="805" y="1035" width="2" height="2" fill="rgb(125,125,125)"/><rect x="768" y="967" width="2" height="2" fill="rgb(93,93,93)"/><rect x="1046" y="321" width="2" height="2" fill="rgb(122,122,122)"/><rect x="427" y="909" width="2" height="2" fill="rgb(95,95,95)"/><rect x="779" y="544" width="2" height="2" fill="rgb(122,122,107)"/><rect x="668" y="360" width="2" height="2" fill="rgb(98,98,98)"/><rect x="224" y="284" width="1" height="1" fill="rgb(101,101,101)"/><rect x="617" y="528" width="2" height="2" fill="rgb(92,92,92)"/><rect x="1160" y="459" width="2" height="2" fill="rgb(89,89,89)"/><rect x="282" y="474" width="2" height="2" fill="rgb(123,123,108)"/><rect x="910" y="405" width="2" height="2" fill="rgb(120,120,120)"/><rect x="1054" y="553" width="2" height="2" fill="rgb(107,107,107)"/><rect x="1035" y="329" width="2" height="2" fill="rgb(118,118,118)"/><rect x="1023" y="979" width="2" height="2" fill="rgb(114,114,114)"/><rect x="591" y="815" width="2" height="2" fill="rgb(106,106,106)"/><rect x="628" y="733" width="2" height="2" fill="rgb(94,94,94)"/><rect x="604" y="523" width="2" height="2" fill="rgb(121,121,121)"/><rect x="291" y="629" width="2" height="2" fill="rgb(93,93,93)"/><rect x="261" y="913" width="2" height="2" fill="rgb(110,140,135)"/><rect x="1290" y="546" width="2" height="2" fill="rgb(125,125,125)"/><rect x="1048" y="1036" width="2" height="2" fill="rgb(114,114,114)"/><rect x="459" y="924" width="2" height="2" fill="rgb(85,115,110)"/><rect x="1225" y="410" width="2" height="2" fill="rgb(90,90,75)"/><rect x="861" y="463" width="2" height="2" fill="rgb(86,86,86)"/><rect x="1350" y="439" width="2" height="2" fill="rgb(107,107,107)"/><rect x="1219" y="609" width="2" height="2" fill="rgb(99,99,99)"/><rect x="410" y="771" width="2" height="2" fill="rgb(106,106,106)"/><rect x="393" y="678" width="2" height="2" fill="rgb(126,126,111)"/><rect x="550" y="326" width="2" height="2" fill="rgb(88,88,88)"/><rect x="283" y="454" width="2" height="2" fill="rgb(89,89,89)"/><rect x="1203" y="411" width="2" height="2" fill="rgb(124,124,124)"/><rect x="233" y="420" width="2" height="2" fill="rgb(117,117,117)"/><rect x="895" y="754" width="2" height="2" fill="rgb(85,85,85)"/><rect x="378" y="643" width="2" height="2" fill="rgb(106,106,106)"/><rect x="910" y="283" width="2" height="2" fill="rgb(117,117,117)"/><rect x="494" y="802" width="2" height="2" fill="rgb(89,89,89)"/><rect x="1040" y="597" width="2" height="2" fill="rgb(96,96,96)"/><rect x="205" y="494" width="2" height="2" fill="rgb(97,97,97)"/><rect x="1150" y="951" width="2" height="2" fill="rgb(85,85,85)"/><rect x="191" y="395" width="2" height="2" fill="rgb(123,123,123)"/><rect x="1050" y="345" width="2" height="2" fill="rgb(121,121,121)"/><rect x="435" y="628" width="2" height="2" fill="rgb(110,110,110)"/><rect x="174" y="964" width="1" height="1" fill="rgb(117,117,117)"/><rect x="876" y="837" width="2" height="2" fill="rgb(77,107,102)"/><rect x="730" y="456" width="2" height="2" fill="rgb(100,100,100)"/><rect x="1174" y="896" width="2" height="2" fill="rgb(119,119,119)"/><rect x="1300" y="1009" width="2" height="2" fill="rgb(101,101,101)"/><rect x="1251" y="315" width="2" height="2" fill="rgb(86,86,86)"/><rect x="542" y="595" width="2" height="2" fill="rgb(85,85,85)"/><rect x="456" y="450" width="2" height="2" fill="rgb(97,97,82)"/><rect x="781" y="1014" width="2" height="2" fill="rgb(124,124,109)"/><rect x="290" y="945" width="2" height="2" fill="rgb(87,87,87)"/><rect x="532" y="440" width="2" height="2" fill="rgb(100,100,100)"/><rect x="261" y="283" width="2" height="2" fill="rgb(108,108,108)"/><rect x="442" y="1029" width="2" height="2" fill="rgb(109,109,109)"/><rect x="1150" y="470" width="1" height="1" fill="rgb(118,118,118)"/><rect x="579" y="470" width="1" height="1" fill="rgb(116,116,116)"/><rect x="574" y="492" width="2" height="2" fill="rgb(120,120,120)"/><rect x="1041" y="565" width="2" height="2" fill="rgb(118,118,118)"/><rect x="1213" y="685" width="2" height="2" fill="rgb(95,95,95)"/><rect x="729" y="567" width="1" height="1" fill="rgb(97,97,97)"/><rect x="940" y="701" width="2" height="2" fill="rgb(91,121,116)"/><rect x="645" y="439" width="2" height="2" fill="rgb(97,97,97)"/><rect x="1027" y="590" width="2" height="2" fill="rgb(117,117,117)"/><rect x="704" y="330" width="2" height="2" fill="rgb(115,115,100)"/><rect x="232" y="1041" width="2" height="2" fill="rgb(115,115,115)"/><rect x="1270" y="437" width="2" height="2" fill="rgb(108,108,108)"/><rect x="1000" y="477" width="2" height="2" fill="rgb(112,112,112)"/><rect x="1168" y="329" width="1" height="1" fill="rgb(114,114,114)"/><rect x="421" y="709" width="1" height="1" fill="rgb(116,116,116)"/><rect x="1273" y="849" width="2" height="2" fill="rgb(90,90,90)"/><rect x="373" y="723" width="1" height="1" fill="rgb(104,104,104)"/><rect x="1021" y="770" width="2" height="2" fill="rgb(86,86,86)"/><rect x="524" y="551" width="1" height="1" fill="rgb(121,121,121)"/><rect x="605" y="351" width="1" height="1" fill="rgb(128,128,113)"/><rect x="671" y="677" width="2" height="2" fill="rgb(111,111,111)"/><rect x="493" y="945" width="2" height="2" fill="rgb(109,109,109)"/><rect x="1173" y="1027" width="2" height="2" fill="rgb(93,93,93)"/><rect x="236" y="941" width="1" height="1" fill="rgb(97,97,97)"/><rect x="427" y="615" width="2" height="2" fill="rgb(106,106,106)"/><rect x="1235" y="654" width="1" height="1" fill="rgb(95,95,95)"/><rect x="1297" y="1044" width="2" height="2" fill="rgb(112,112,112)"/><rect x="1022" y="1053" width="2" height="2" fill="rgb(107,107,107)"/><rect x="1371" y="891" width="2" height="2" fill="rgb(92,92,92)"/><rect x="440" y="368" width="2" height="2" fill="rgb(114,114,99)"/><rect x="1304" y="560" width="2" height="2" fill="rgb(111,111,111)"/><rect x="360" y="273" width="2" height="2" fill="rgb(108,108,108)"/><rect x="748" y="635" width="2" height="2" fill="rgb(97,97,97)"/><rect x="1059" y="269" width="1" height="1" fill="rgb(97,97,97)"/><rect x="1025" y="487" width="1" height="1" fill="rgb(90,90,90)"/><rect x="276" y="577" width="2" height="2" fill="rgb(120,120,120)"/><rect x="797" y="551" width="2" height="2" fill="rgb(115,115,115)"/><rect x="804" y="952" width="2" height="2" fill="rgb(114,114,99)"/><rect x="587" y="766" width="1" height="1" fill="rgb(123,123,123)"/><rect x="461" y="820" width="2" height="2" fill="rgb(98,98,83)"/><rect x="280" y="677" width="1" height="1" fill="rgb(106,106,91)"/><rect x="356" y="893" width="2" height="2" fill="rgb(95,95,95)"/><rect x="1137" y="639" width="1" height="1" fill="rgb(121,121,121)"/><rect x="249" y="658" width="2" height="2" fill="rgb(98,98,98)"/><rect x="977" y="787" width="2" height="2" fill="rgb(93,93,78)"/><rect x="564" y="827" width="1" height="1" fill="rgb(102,102,102)"/><rect x="907" y="887" width="2" height="2" fill="rgb(120,120,105)"/><rect x="1105" y="961" width="2" height="2" fill="rgb(87,87,87)"/><rect x="460" y="1000" width="1" height="1" fill="rgb(125,125,125)"/><rect x="204" y="563" width="1" height="1" fill="rgb(85,85,85)"/><rect x="1104" y="420" width="2" height="2" fill="rgb(107,107,107)"/><rect x="294" y="799" width="2" height="2" fill="rgb(111,111,111)"/><rect x="776" y="877" width="2" height="2" fill="rgb(108,108,108)"/><rect x="1040" y="320" width="2" height="2" fill="rgb(90,90,90)"/><rect x="465" y="591" width="2" height="2" fill="rgb(91,91,91)"/><rect x="476" y="704" width="2" height="2" fill="rgb(86,86,86)"/><rect x="437" y="648" width="2" height="2" fill="rgb(128,128,113)"/><rect x="1366" y="380" width="2" height="2" fill="rgb(109,109,109)"/><rect x="1024" y="484" width="1" height="1" fill="rgb(102,102,102)"/><rect x="555" y="1051" width="2" height="2" fill="rgb(124,124,124)"/><rect x="752" y="404" width="2" height="2" fill="rgb(112,112,112)"/><rect x="1096" y="937" width="2" height="2" fill="rgb(110,110,95)"/><rect x="1322" y="426" width="1" height="1" fill="rgb(104,104,104)"/><rect x="186" y="512" width="2" height="2" fill="rgb(108,108,93)"/><rect x="472" y="406" width="2" height="2" fill="rgb(87,87,87)"/><rect x="1105" y="373" width="1" height="1" fill="rgb(112,112,112)"/><rect x="1059" y="1012" width="2" height="2" fill="rgb(88,88,88)"/><rect x="679" y="886" width="2" height="2" fill="rgb(89,89,89)"/><rect x="185" y="485" width="2" height="2" fill="rgb(116,116,116)"/><rect x="310" y="626" width="2" height="2" fill="rgb(96,96,96)"/><rect x="510" y="418" width="2" height="2" fill="rgb(125,125,125)"/><rect x="1199" y="768" width="2" height="2" fill="rgb(117,117,117)"/><rect x="816" y="907" width="2" height="2" fill="rgb(115,115,115)"/><rect x="870" y="988" width="2" height="2" fill="rgb(101,101,101)"/><rect x="870" y="352" width="2" height="2" fill="rgb(115,115,100)"/><rect x="934" y="925" width="2" height="2" fill="rgb(120,120,120)"/><rect x="905" y="697" width="2" height="2" fill="rgb(87,87,87)"/><rect x="767" y="878" width="2" height="2" fill="rgb(91,91,91)"/><rect x="867" y="931" width="1" height="1" fill="rgb(121,121,121)"/><rect x="1145" y="617" width="1" height="1" fill="rgb(120,120,120)"/><rect x="151" y="348" width="2" height="2" fill="rgb(93,93,93)"/><rect x="192" y="372" width="2" height="2" fill="rgb(110,110,110)"/><rect x="1150" y="612" width="2" height="2" fill="rgb(123,123,123)"/><rect x="1374" y="532" width="2" height="2" fill="rgb(116,116,116)"/><rect x="404" y="980" width="2" height="2" fill="rgb(98,98,98)"/><rect x="439" y="539" width="2" height="2" fill="rgb(95,95,95)"/><rect x="1230" y="549" width="2" height="2" fill="rgb(104,104,104)"/><rect x="762" y="476" width="2" height="2" fill="rgb(117,117,117)"/><rect x="1235" y="894" width="1" height="1" fill="rgb(94,94,94)"/><rect x="232" y="301" width="2" height="2" fill="rgb(100,100,100)"/><rect x="246" y="651" width="1" height="1" fill="rgb(85,85,85)"/><rect x="519" y="995" width="2" height="2" fill="rgb(115,115,115)"/><rect x="301" y="825" width="2" height="2" fill="rgb(99,99,99)"/><rect x="527" y="683" width="1" height="1" fill="rgb(118,118,118)"/><rect x="1305" y="972" width="2" height="2" fill="rgb(96,96,96)"/><rect x="1327" y="836" width="2" height="2" fill="rgb(123,123,123)"/><rect x="1308" y="498" width="1" height="1" fill="rgb(107,107,107)"/><rect x="297" y="563" width="2" height="2" fill="rgb(87,87,87)"/><rect x="1007" y="581" width="2" height="2" fill="rgb(121,121,121)"/><rect x="513" y="423" width="2" height="2" fill="rgb(118,118,118)"/><rect x="630" y="320" width="2" height="2" fill="rgb(113,113,113)"/><rect x="853" y="486" width="2" height="2" fill="rgb(91,91,91)"/><rect x="1381" y="638" width="2" height="2" fill="rgb(98,98,83)"/><rect x="934" y="273" width="2" height="2" fill="rgb(103,103,103)"/><rect x="1076" y="615" width="2" height="2" fill="rgb(110,110,110)"/><rect x="322" y="1015" width="2" height="2" fill="rgb(111,111,96)"/><rect x="1018" y="652" width="2" height="2" fill="rgb(91,91,91)"/><rect x="1187" y="380" width="2" height="2" fill="rgb(101,101,101)"/><rect x="151" y="614" width="2" height="2" fill="rgb(106,106,106)"/><rect x="1325" y="379" width="2" height="2" fill="rgb(125,125,125)"/><rect x="610" y="811" width="2" height="2" fill="rgb(89,89,89)"/><rect x="372" y="824" width="2" height="2" fill="rgb(101,101,101)"/><rect x="164" y="571" width="1" height="1" fill="rgb(101,101,101)"/><rect x="570" y="271" width="2" height="2" fill="rgb(88,88,88)"/><rect x="552" y="1028" width="2" height="2" fill="rgb(117,117,117)"/><rect x="371" y="1061" width="2" height="2" fill="rgb(85,85,85)"/><rect x="1040" y="1016" width="2" height="2" fill="rgb(110,110,110)"/><rect x="1236" y="362" width="1" height="1" fill="rgb(94,94,94)"/><rect x="523" y="659" width="1" height="1" fill="rgb(101,131,126)"/><rect x="525" y="1010" width="2" height="2" fill="rgb(85,85,85)"/><rect x="1383" y="825" width="2" height="2" fill="rgb(105,105,105)"/><rect x="464" y="1057" width="1" height="1" fill="rgb(98,98,98)"/><rect x="1391" y="726" width="2" height="2" fill="rgb(125,125,125)"/><rect x="735" y="376" width="2" height="2" fill="rgb(115,115,115)"/><rect x="927" y="806" width="2" height="2" fill="rgb(95,95,95)"/><rect x="395" y="1047" width="2" height="2" fill="rgb(121,121,121)"/><rect x="323" y="651" width="2" height="2" fill="rgb(90,90,90)"/><rect x="663" y="979" width="2" height="2" fill="rgb(96,96,96)"/><rect x="446" y="530" width="1" height="1" fill="rgb(107,107,107)"/><rect x="481" y="992" width="2" height="2" fill="rgb(125,125,125)"/><rect x="860" y="949" width="2" height="2" fill="rgb(114,144,139)"/><rect x="1391" y="947" width="2" height="2" fill="rgb(101,101,101)"/><rect x="566" y="296" width="2" height="2" fill="rgb(123,123,123)"/><rect x="556" y="937" width="2" height="2" fill="rgb(110,110,110)"/><rect x="722" y="498" width="2" height="2" fill="rgb(85,85,85)"/><rect x="205" y="654" width="2" height="2" fill="rgb(95,95,95)"/><rect x="227" y="357" width="1" height="1" fill="rgb(88,88,88)"/><rect x="1331" y="479" width="2" height="2" fill="rgb(125,125,125)"/><rect x="695" y="869" width="2" height="2" fill="rgb(117,117,102)"/><rect x="1077" y="768" width="2" height="2" fill="rgb(119,119,119)"/><rect x="534" y="939" width="2" height="2" fill="rgb(124,124,124)"/><rect x="337" y="625" width="2" height="2" fill="rgb(109,109,109)"/><rect x="1269" y="422" width="2" height="2" fill="rgb(91,91,91)"/><rect x="1120" y="472" width="2" height="2" fill="rgb(103,103,103)"/><rect x="167" y="895" width="2" height="2" fill="rgb(97,97,97)"/><rect x="322" y="489" width="2" height="2" fill="rgb(96,96,96)"/><rect x="861" y="377" width="1" height="1" fill="rgb(96,96,96)"/><rect x="1231" y="848" width="1" height="1" fill="rgb(87,87,87)"/><rect x="614" y="1047" width="2" height="2" fill="rgb(101,101,101)"/><rect x="190" y="337" width="2" height="2" fill="rgb(85,115,110)"/><rect x="1281" y="926" width="2" height="2" fill="rgb(101,101,101)"/><rect x="831" y="793" width="1" height="1" fill="rgb(99,99,99)"/><rect x="311" y="392" width="2" height="2" fill="rgb(121,121,121)"/><rect x="359" y="347" width="2" height="2" fill="rgb(120,120,120)"/><rect x="482" y="412" width="2" height="2" fill="rgb(87,87,87)"/><rect x="1325" y="461" width="1" height="1" fill="rgb(122,122,122)"/><rect x="952" y="427" width="2" height="2" fill="rgb(114,114,114)"/><rect x="253" y="761" width="2" height="2" fill="rgb(85,85,85)"/><rect x="1289" y="785" width="1" height="1" fill="rgb(115,115,115)"/><rect x="821" y="647" width="2" height="2" fill="rgb(116,116,116)"/><rect x="593" y="746" width="2" height="2" fill="rgb(123,123,123)"/><rect x="1180" y="931" width="2" height="2" fill="rgb(115,115,115)"/><rect x="324" y="688" width="2" height="2" fill="rgb(121,121,121)"/><rect x="367" y="468" width="2" height="2" fill="rgb(102,102,102)"/><rect x="501" y="771" width="2" height="2" fill="rgb(97,97,97)"/><rect x="777" y="633" width="2" height="2" fill="rgb(107,107,92)"/><rect x="265" y="317" width="1" height="1" fill="rgb(96,96,96)"/><rect x="813" y="686" width="2" height="2" fill="rgb(113,113,113)"/><rect x="1344" y="934" width="2" height="2" fill="rgb(105,105,105)"/><rect x="439" y="1028" width="2" height="2" fill="rgb(118,118,118)"/><rect x="182" y="456" width="1" height="1" fill="rgb(115,115,115)"/><rect x="819" y="765" width="2" height="2" fill="rgb(122,122,122)"/><rect x="769" y="600" width="2" height="2" fill="rgb(114,114,114)"/><rect x="1220" y="801" width="2" height="2" fill="rgb(118,118,118)"/><rect x="1130" y="870" width="2" height="2" fill="rgb(105,105,105)"/><rect x="168" y="720" width="2" height="2" fill="rgb(119,119,119)"/><rect x="819" y="624" width="2" height="2" fill="rgb(92,92,92)"/><rect x="992" y="341" width="2" height="2" fill="rgb(91,91,91)"/><rect x="561" y="574" width="2" height="2" fill="rgb(79,109,104)"/><rect x="1057" y="765" width="2" height="2" fill="rgb(105,105,105)"/><rect x="512" y="482" width="2" height="2" fill="rgb(110,110,110)"/><rect x="676" y="795" width="1" height="1" fill="rgb(87,87,87)"/><rect x="855" y="690" width="2" height="2" fill="rgb(110,140,135)"/><rect x="966" y="602" width="2" height="2" fill="rgb(86,86,86)"/><rect x="1050" y="523" width="2" height="2" fill="rgb(94,94,94)"/><rect x="489" y="747" width="1" height="1" fill="rgb(121,121,121)"/><rect x="178" y="549" width="2" height="2" fill="rgb(113,113,113)"/><rect x="802" y="797" width="2" height="2" fill="rgb(102,102,102)"/><rect x="449" y="742" width="2" height="2" fill="rgb(95,95,95)"/><rect x="541" y="972" width="1" height="1" fill="rgb(112,142,137)"/><rect x="1112" y="886" width="1" height="1" fill="rgb(108,108,108)"/><rect x="573" y="595" width="2" height="2" fill="rgb(94,94,94)"/><rect x="359" y="413" width="2" height="2" fill="rgb(99,99,99)"/><rect x="734" y="802" width="2" height="2" fill="rgb(100,100,100)"/><rect x="1133" y="787" width="2" height="2" fill="rgb(102,102,102)"/><rect x="416" y="403" width="2" height="2" fill="rgb(100,100,100)"/><rect x="362" y="724" width="2" height="2" fill="rgb(106,106,91)"/><rect x="1025" y="280" width="2" height="2" fill="rgb(119,119,119)"/><rect x="433" y="622" width="2" height="2" fill="rgb(103,103,103)"/><rect x="647" y="276" width="2" height="2" fill="rgb(102,102,102)"/><rect x="859" y="295" width="1" height="1" fill="rgb(109,109,94)"/><rect x="893" y="412" width="1" height="1" fill="rgb(102,102,102)"/><rect x="672" y="1009" width="2" height="2" fill="rgb(124,124,124)"/><rect x="1135" y="906" width="2" height="2" fill="rgb(91,91,91)"/><rect x="498" y="452" width="1" height="1" fill="rgb(94,94,79)"/><rect x="1269" y="700" width="2" height="2" fill="rgb(102,102,102)"/><rect x="1081" y="417" width="1" height="1" fill="rgb(89,89,89)"/><rect x="932" y="841" width="2" height="2" fill="rgb(120,120,120)"/><rect x="506" y="511" width="1" height="1" fill="rgb(111,111,111)"/><rect x="392" y="300" width="2" height="2" fill="rgb(80,110,105)"/><rect x="631" y="580" width="2" height="2" fill="rgb(121,121,121)"/><rect x="179" y="588" width="2" height="2" fill="rgb(122,122,122)"/><rect x="784" y="788" width="1" height="1" fill="rgb(111,111,111)"/><rect x="223" y="689" width="2" height="2" fill="rgb(117,117,117)"/><rect x="153" y="763" width="1" height="1" fill="rgb(99,99,99)"/><rect x="1002" y="771" width="2" height="2" fill="rgb(91,121,116)"/><rect x="371" y="482" width="2" height="2" fill="rgb(113,113,113)"/><rect x="175" y="833" width="2" height="2" fill="rgb(112,142,137)"/><rect x="1291" y="555" width="2" height="2" fill="rgb(115,115,115)"/><rect x="777" y="1015" width="2" height="2" fill="rgb(118,118,118)"/><rect x="239" y="495" width="2" height="2" fill="rgb(117,117,117)"/><rect x="209" y="277" width="1" height="1" fill="rgb(90,90,75)"/><rect x="219" y="1034" width="2" height="2" fill="rgb(86,116,111)"/><rect x="348" y="1010" width="1" height="1" fill="rgb(87,87,87)"/><rect x="270" y="991" width="2" height="2" fill="rgb(125,125,110)"/><rect x="488" y="1035" width="2" height="2" fill="rgb(115,115,115)"/><rect x="843" y="903" width="2" height="2" fill="rgb(88,88,88)"/><rect x="839" y="1028" width="2" height="2" fill="rgb(128,128,113)"/><rect x="605" y="325" width="2" height="2" fill="rgb(107,107,92)"/><rect x="828" y="992" width="1" height="1" fill="rgb(95,95,95)"/><rect x="565" y="769" width="1" height="1" fill="rgb(118,118,103)"/><rect x="1189" y="688" width="2" height="2" fill="rgb(108,108,108)"/><rect x="1016" y="932" width="2" height="2" fill="rgb(107,107,107)"/><rect x="786" y="521" width="1" height="1" fill="rgb(118,118,118)"/><rect x="980" y="576" width="1" height="1" fill="rgb(91,91,91)"/><rect x="499" y="424" width="1" height="1" fill="rgb(123,123,123)"/><rect x="530" y="944" width="2" height="2" fill="rgb(108,138,133)"/><rect x="1281" y="689" width="2" height="2" fill="rgb(106,106,106)"/><rect x="1203" y="883" width="2" height="2" fill="rgb(118,118,118)"/><rect x="840" y="788" width="1" height="1" fill="rgb(114,114,114)"/><rect x="1259" y="911" width="2" height="2" fill="rgb(105,105,90)"/><rect x="1326" y="855" width="1" height="1" fill="rgb(115,115,115)"/><rect x="1080" y="597" width="2" height="2" fill="rgb(100,100,100)"/><rect x="917" y="570" width="2" height="2" fill="rgb(94,94,94)"/><rect x="1242" y="780" width="2" height="2" fill="rgb(112,112,112)"/><rect x="654" y="891" width="2" height="2" fill="rgb(88,118,113)"/><rect x="587" y="720" width="2" height="2" fill="rgb(125,125,125)"/><rect x="381" y="490" width="1" height="1" fill="rgb(102,102,102)"/><rect x="1361" y="297" width="2" height="2" fill="rgb(92,92,92)"/><rect x="1237" y="317" width="1" height="1" fill="rgb(99,99,99)"/><rect x="673" y="469" width="2" height="2" fill="rgb(95,95,80)"/><rect x="310" y="556" width="2" height="2" fill="rgb(120,120,120)"/><rect x="1298" y="578" width="1" height="1" fill="rgb(119,119,119)"/><rect x="808" y="474" width="2" height="2" fill="rgb(106,106,106)"/><rect x="918" y="1026" width="2" height="2" fill="rgb(123,123,123)"/><rect x="154" y="324" width="1" height="1" fill="rgb(111,111,111)"/><rect x="859" y="1053" width="1" height="1" fill="rgb(91,91,91)"/><rect x="372" y="722" width="1" height="1" fill="rgb(90,90,90)"/><rect x="761" y="430" width="2" height="2" fill="rgb(89,89,89)"/><rect x="169" y="446" width="2" height="2" fill="rgb(123,123,123)"/><rect x="670" y="602" width="2" height="2" fill="rgb(120,120,120)"/><rect x="663" y="885" width="2" height="2" fill="rgb(114,114,114)"/><rect x="1287" y="422" width="2" height="2" fill="rgb(102,102,102)"/><rect x="853" y="464" width="1" height="1" fill="rgb(86,116,111)"/><rect x="755" y="625" width="1" height="1" fill="rgb(96,96,96)"/><rect x="508" y="570" width="2" height="2" fill="rgb(115,115,115)"/><rect x="605" y="467" width="2" height="2" fill="rgb(107,107,107)"/><rect x="792" y="1000" width="2" height="2" fill="rgb(122,122,107)"/><rect x="807" y="280" width="2" height="2" fill="rgb(123,123,123)"/><rect x="1355" y="610" width="2" height="2" fill="rgb(90,90,90)"/><rect x="1070" y="850" width="2" height="2" fill="rgb(89,89,89)"/><rect x="1129" y="542" width="2" height="2" fill="rgb(122,122,122)"/><rect x="1347" y="568" width="1" height="1" fill="rgb(102,102,102)"/><rect x="531" y="616" width="2" height="2" fill="rgb(116,116,116)"/><rect x="873" y="1060" width="2" height="2" fill="rgb(99,99,84)"/><rect x="305" y="658" width="2" height="2" fill="rgb(105,105,105)"/><rect x="490" y="379" width="2" height="2" fill="rgb(100,100,100)"/><rect x="1232" y="790" width="2" height="2" fill="rgb(117,117,117)"/><rect x="433" y="486" width="1" height="1" fill="rgb(94,94,94)"/><rect x="258" y="1011" width="2" height="2" fill="rgb(97,97,82)"/><rect x="1054" y="936" width="2" height="2" fill="rgb(86,86,86)"/><rect x="832" y="886" width="1" height="1" fill="rgb(110,110,110)"/><rect x="482" y="554" width="2" height="2" fill="rgb(113,113,113)"/><rect x="689" y="491" width="2" height="2" fill="rgb(105,105,105)"/><rect x="1127" y="992" width="2" height="2" fill="rgb(127,127,112)"/><rect x="1296" y="885" width="1" height="1" fill="rgb(118,118,118)"/><rect x="817" y="456" width="2" height="2" fill="rgb(125,125,125)"/><rect x="579" y="787" width="1" height="1" fill="rgb(102,102,102)"/><rect x="1289" y="963" width="1" height="1" fill="rgb(130,130,115)"/><rect x="1119" y="979" width="2" height="2" fill="rgb(107,107,107)"/><rect x="536" y="510" width="1" height="1" fill="rgb(116,116,116)"/><rect x="626" y="664" width="2" height="2" fill="rgb(95,95,95)"/><rect x="1210" y="836" width="2" height="2" fill="rgb(120,120,120)"/><rect x="604" y="940" width="2" height="2" fill="rgb(113,113,113)"/><rect x="508" y="445" width="1" height="1" fill="rgb(122,122,122)"/><rect x="761" y="859" width="2" height="2" fill="rgb(116,116,116)"/><rect x="245" y="280" width="2" height="2" fill="rgb(99,99,99)"/><rect x="1221" y="903" width="2" height="2" fill="rgb(97,97,97)"/><rect x="1040" y="483" width="2" height="2" fill="rgb(86,116,111)"/><rect x="1123" y="716" width="2" height="2" fill="rgb(86,86,86)"/><rect x="958" y="988" width="2" height="2" fill="rgb(103,103,103)"/><rect x="1254" y="753" width="1" height="1" fill="rgb(92,92,92)"/><rect x="354" y="295" width="2" height="2" fill="rgb(90,90,90)"/><rect x="565" y="525" width="2" height="2" fill="rgb(123,123,123)"/><rect x="1263" y="343" width="2" height="2" fill="rgb(125,125,125)"/><rect x="557" y="705" width="2" height="2" fill="rgb(88,88,88)"/><rect x="367" y="748" width="1" height="1" fill="rgb(95,95,95)"/><rect x="1230" y="860" width="1" height="1" fill="rgb(91,91,91)"/><rect x="269" y="540" width="2" height="2" fill="rgb(95,125,120)"/><rect x="575" y="591" width="2" height="2" fill="rgb(118,118,118)"/><rect x="1386" y="391" width="2" height="2" fill="rgb(119,119,119)"/><rect x="1375" y="722" width="2" height="2" fill="rgb(114,114,114)"/><rect x="390" y="303" width="1" height="1" fill="rgb(104,104,104)"/><rect x="513" y="1044" width="1" height="1" fill="rgb(93,93,93)"/><rect x="286" y="310" width="2" height="2" fill="rgb(121,121,121)"/><rect x="573" y="879" width="2" height="2" fill="rgb(93,93,93)"/><rect x="466" y="899" width="2" height="2" fill="rgb(92,92,92)"/><rect x="1086" y="1007" width="2" height="2" fill="rgb(99,99,99)"/><rect x="679" y="519" width="2" height="2" fill="rgb(87,87,87)"/><rect x="1053" y="343" width="2" height="2" fill="rgb(95,95,95)"/><rect x="1322" y="428" width="2" height="2" fill="rgb(125,125,125)"/><rect x="1315" y="881" width="1" height="1" fill="rgb(87,87,87)"/><rect x="1098" y="1055" width="2" height="2" fill="rgb(113,113,98)"/><rect x="552" y="290" width="2" height="2" fill="rgb(121,121,106)"/><rect x="981" y="596" width="2" height="2" fill="rgb(85,85,85)"/><rect x="448" y="727" width="2" height="2" fill="rgb(88,88,88)"/><rect x="402" y="690" width="2" height="2" fill="rgb(108,108,108)"/><rect x="841" y="491" width="1" height="1" fill="rgb(90,90,90)"/><rect x="469" y="972" width="1" height="1" fill="rgb(100,100,85)"/><rect x="179" y="975" width="2" height="2" fill="rgb(114,114,99)"/><rect x="1269" y="991" width="2" height="2" fill="rgb(101,101,101)"/><rect x="695" y="483" width="2" height="2" fill="rgb(109,109,109)"/><rect x="920" y="548" width="2" height="2" fill="rgb(94,94,94)"/><rect x="1265" y="540" width="2" height="2" fill="rgb(123,123,108)"/><rect x="1084" y="378" width="2" height="2" fill="rgb(102,102,102)"/><rect x="824" y="559" width="2" height="2" fill="rgb(92,92,92)"/><rect x="855" y="812" width="2" height="2" fill="rgb(111,141,136)"/><rect x="1079" y="430" width="2" height="2" fill="rgb(104,104,104)"/><rect x="705" y="782" width="1" height="1" fill="rgb(117,117,117)"/><rect x="488" y="959" width="2" height="2" fill="rgb(122,122,122)"/><rect x="806" y="793" width="2" height="2" fill="rgb(129,129,114)"/><rect x="942" y="748" width="2" height="2" fill="rgb(106,106,91)"/><rect x="821" y="629" width="1" height="1" fill="rgb(92,122,117)"/><rect x="742" y="448" width="2" height="2" fill="rgb(100,100,100)"/><rect x="1088" y="309" width="2" height="2" fill="rgb(86,86,86)"/><rect x="972" y="542" width="2" height="2" fill="rgb(92,92,92)"/><rect x="484" y="765" width="1" height="1" fill="rgb(80,110,105)"/><rect x="807" y="759" width="2" height="2" fill="rgb(112,112,112)"/><rect x="398" y="540" width="2" height="2" fill="rgb(96,96,96)"/><rect x="1038" y="399" width="2" height="2" fill="rgb(105,105,105)"/><rect x="1053" y="672" width="2" height="2" fill="rgb(101,101,86)"/><rect x="480" y="446" width="2" height="2" fill="rgb(124,124,124)"/><rect x="801" y="371" width="2" height="2" fill="rgb(86,86,86)"/><rect x="1137" y="962" width="2" height="2" fill="rgb(96,96,96)"/><rect x="1097" y="325" width="2" height="2" fill="rgb(93,93,93)"/><rect x="1029" y="650" width="2" height="2" fill="rgb(92,92,92)"/><rect x="382" y="293" width="2" height="2" fill="rgb(93,93,93)"/><rect x="970" y="999" width="2" height="2" fill="rgb(86,86,86)"/><rect x="457" y="404" width="2" height="2" fill="rgb(106,106,106)"/><rect x="480" y="793" width="1" height="1" fill="rgb(86,86,86)"/><rect x="639" y="597" width="2" height="2" fill="rgb(124,124,124)"/><rect x="1169" y="832" width="2" height="2" fill="rgb(106,106,106)"/><rect x="267" y="1001" width="2" height="2" fill="rgb(121,121,121)"/><rect x="990" y="604" width="2" height="2" fill="rgb(118,118,118)"/><rect x="1239" y="842" width="1" height="1" fill="rgb(85,85,85)"/><rect x="874" y="279" width="2" height="2" fill="rgb(125,125,125)"/><rect x="911" y="405" width="2" height="2" fill="rgb(122,122,122)"/><rect x="1081" y="888" width="1" height="1" fill="rgb(113,113,113)"/><rect x="1070" y="672" width="2" height="2" fill="rgb(109,109,109)"/><rect x="226" y="849" width="2" height="2" fill="rgb(105,105,90)"/><rect x="266" y="928" width="2" height="2" fill="rgb(93,93,93)"/><rect x="248" y="1030" width="2" height="2" fill="rgb(94,94,94)"/><rect x="548" y="342" width="2" height="2" fill="rgb(96,96,96)"/><rect x="556" y="1028" width="2" height="2" fill="rgb(100,100,100)"/><rect x="186" y="980" width="2" height="2" fill="rgb(113,113,113)"/><rect x="340" y="907" width="2" height="2" fill="rgb(112,112,112)"/><rect x="490" y="462" width="2" height="2" fill="rgb(89,89,89)"/><rect x="951" y="1011" width="2" height="2" fill="rgb(101,101,101)"/><rect x="166" y="450" width="2" height="2" fill="rgb(114,114,114)"/><rect x="970" y="362" width="1" height="1" fill="rgb(91,91,91)"/><rect x="1319" y="711" width="2" height="2" fill="rgb(124,124,124)"/><rect x="1092" y="1061" width="2" height="2" fill="rgb(113,113,113)"/><rect x="1069" y="284" width="1" height="1" fill="rgb(108,108,108)"/><rect x="963" y="906" width="2" height="2" fill="rgb(113,143,138)"/><rect x="850" y="1015" width="2" height="2" fill="rgb(94,94,94)"/><rect x="1170" y="751" width="2" height="2" fill="rgb(124,124,124)"/><rect x="1109" y="621" width="2" height="2" fill="rgb(119,119,119)"/><rect x="1091" y="863" width="2" height="2" fill="rgb(110,110,110)"/><rect x="608" y="1056" width="2" height="2" fill="rgb(118,118,118)"/><rect x="937" y="331" width="2" height="2" fill="rgb(93,93,93)"/><rect x="702" y="306" width="2" height="2" fill="rgb(97,97,97)"/><rect x="153" y="501" width="2" height="2" fill="rgb(85,115,110)"/><rect x="205" y="842" width="2" height="2" fill="rgb(117,117,117)"/><rect x="515" y="1020" width="2" height="2" fill="rgb(124,124,124)"/><rect x="502" y="797" width="2" height="2" fill="rgb(96,96,96)"/><rect x="1146" y="906" width="1" height="1" fill="rgb(89,89,89)"/><rect x="1362" y="816" width="1" height="1" fill="rgb(98,98,98)"/><rect x="797" y="878" width="2" height="2" fill="rgb(129,129,114)"/><rect x="885" y="338" width="2" height="2" fill="rgb(122,122,122)"/><rect x="248" y="535" width="2" height="2" fill="rgb(101,101,101)"/><rect x="982" y="849" width="2" height="2" fill="rgb(101,131,126)"/><rect x="772" y="974" width="2" height="2" fill="rgb(100,100,100)"/><rect x="502" y="562" width="2" height="2" fill="rgb(95,95,95)"/><rect x="411" y="1002" width="2" height="2" fill="rgb(92,92,92)"/><rect x="576" y="799" width="2" height="2" fill="rgb(90,90,90)"/><rect x="504" y="684" width="2" height="2" fill="rgb(81,111,106)"/><rect x="892" y="958" width="1" height="1" fill="rgb(117,117,117)"/><rect x="830" y="700" width="2" height="2" fill="rgb(123,123,123)"/><rect x="155" y="746" width="2" height="2" fill="rgb(105,105,90)"/><rect x="1003" y="458" width="2" height="2" fill="rgb(99,99,99)"/><rect x="607" y="636" width="2" height="2" fill="rgb(110,110,110)"/><rect x="1187" y="1016" width="1" height="1" fill="rgb(115,115,115)"/><rect x="1161" y="822" width="2" height="2" fill="rgb(107,107,107)"/><rect x="557" y="1051" width="2" height="2" fill="rgb(104,104,104)"/><rect x="847" y="743" width="2" height="2" fill="rgb(114,114,99)"/><rect x="906" y="773" width="2" height="2" fill="rgb(91,91,91)"/><rect x="219" y="312" width="2" height="2" fill="rgb(116,116,116)"/><rect x="284" y="1037" width="2" height="2" fill="rgb(105,105,105)"/><rect x="168" y="835" width="2" height="2" fill="rgb(85,85,85)"/><rect x="831" y="988" width="2" height="2" fill="rgb(122,122,122)"/><rect x="674" y="908" width="2" height="2" fill="rgb(117,117,117)"/><rect x="800" y="807" width="2" height="2" fill="rgb(107,107,107)"/><rect x="533" y="829" width="2" height="2" fill="rgb(94,94,94)"/><rect x="820" y="444" width="1" height="1" fill="rgb(117,117,117)"/><rect x="554" y="863" width="2" height="2" fill="rgb(95,95,95)"/><rect x="788" y="942" width="2" height="2" fill="rgb(101,101,101)"/><rect x="183" y="564" width="2" height="2" fill="rgb(101,101,101)"/><rect x="833" y="289" width="2" height="2" fill="rgb(126,126,111)"/><rect x="239" y="945" width="2" height="2" fill="rgb(95,95,80)"/><rect x="1118" y="875" width="1" height="1" fill="rgb(91,91,91)"/><rect x="594" y="647" width="2" height="2" fill="rgb(115,115,115)"/><rect x="419" y="606" width="1" height="1" fill="rgb(128,128,113)"/><rect x="628" y="549" width="2" height="2" fill="rgb(112,112,112)"/><rect x="339" y="1064" width="1" height="1" fill="rgb(118,118,118)"/><rect x="463" y="678" width="2" height="2" fill="rgb(99,99,99)"/><rect x="663" y="716" width="2" height="2" fill="rgb(112,112,112)"/><rect x="965" y="489" width="1" height="1" fill="rgb(103,103,88)"/><rect x="1022" y="806" width="2" height="2" fill="rgb(109,109,94)"/><rect x="341" y="314" width="2" height="2" fill="rgb(97,97,97)"/><rect x="1170" y="312" width="2" height="2" fill="rgb(99,99,99)"/><rect x="994" y="892" width="2" height="2" fill="rgb(93,93,93)"/><rect x="936" y="378" width="2" height="2" fill="rgb(89,89,89)"/><rect x="892" y="586" width="2" height="2" fill="rgb(95,95,95)"/><rect x="510" y="950" width="2" height="2" fill="rgb(94,94,94)"/><rect x="239" y="518" width="2" height="2" fill="rgb(96,96,96)"/><rect x="1187" y="954" width="2" height="2" fill="rgb(86,86,86)"/><rect x="1298" y="625" width="2" height="2" fill="rgb(121,121,106)"/><rect x="1011" y="1023" width="2" height="2" fill="rgb(100,100,85)"/><rect x="647" y="514" width="2" height="2" fill="rgb(120,120,120)"/><rect x="1204" y="480" width="2" height="2" fill="rgb(88,88,88)"/><rect x="481" y="637" width="2" height="2" fill="rgb(107,107,107)"/><rect x="685" y="316" width="2" height="2" fill="rgb(116,116,116)"/><rect x="1314" y="787" width="2" height="2" fill="rgb(119,119,104)"/><rect x="519" y="914" width="2" height="2" fill="rgb(104,104,104)"/><rect x="181" y="604" width="2" height="2" fill="rgb(121,121,121)"/><rect x="527" y="892" width="2" height="2" fill="rgb(122,122,107)"/><rect x="573" y="872" width="1" height="1" fill="rgb(113,113,113)"/><rect x="920" y="1000" width="2" height="2" fill="rgb(125,125,110)"/><rect x="916" y="996" width="2" height="2" fill="rgb(104,104,104)"/><rect x="247" y="765" width="1" height="1" fill="rgb(115,115,100)"/><rect x="1353" y="649" width="2" height="2" fill="rgb(117,117,117)"/><rect x="776" y="299" width="1" height="1" fill="rgb(108,108,108)"/><rect x="954" y="377" width="2" height="2" fill="rgb(97,97,97)"/><rect x="623" y="334" width="2" height="2" fill="rgb(96,96,96)"/><rect x="1207" y="709" width="1" height="1" fill="rgb(90,90,90)"/><rect x="1309" y="851" width="2" height="2" fill="rgb(119,119,119)"/><rect x="1134" y="985" width="2" height="2" fill="rgb(109,109,109)"/><rect x="944" y="438" width="2" height="2" fill="rgb(92,92,92)"/><rect x="1058" y="619" width="2" height="2" fill="rgb(116,116,101)"/><rect x="941" y="792" width="2" height="2" fill="rgb(94,94,94)"/><rect x="778" y="395" width="1" height="1" fill="rgb(82,112,107)"/><rect x="279" y="482" width="2" height="2" fill="rgb(101,101,101)"/><rect x="1084" y="648" width="2" height="2" fill="rgb(107,107,92)"/><rect x="658" y="342" width="2" height="2" fill="rgb(118,118,103)"/><rect x="729" y="706" width="2" height="2" fill="rgb(112,112,112)"/><rect x="502" y="784" width="2" height="2" fill="rgb(102,132,127)"/><rect x="1111" y="498" width="2" height="2" fill="rgb(94,94,94)"/><rect x="1351" y="1009" width="2" height="2" fill="rgb(110,110,110)"/><rect x="556" y="490" width="2" height="2" fill="rgb(85,85,85)"/><rect x="1281" y="1065" width="2" height="2" fill="rgb(92,92,92)"/><rect x="217" y="747" width="2" height="2" fill="rgb(121,121,121)"/><rect x="1177" y="737" width="1" height="1" fill="rgb(105,105,105)"/><rect x="910" y="625" width="1" height="1" fill="rgb(118,118,103)"/><rect x="739" y="969" width="2" height="2" fill="rgb(124,124,124)"/><rect x="767" y="664" width="1" height="1" fill="rgb(106,106,106)"/><rect x="837" y="1064" width="2" height="2" fill="rgb(106,136,131)"/><rect x="380" y="515" width="1" height="1" fill="rgb(103,103,103)"/><rect x="489" y="394" width="2" height="2" fill="rgb(128,128,113)"/><rect x="1074" y="1062" width="2" height="2" fill="rgb(92,92,92)"/><rect x="293" y="816" width="1" height="1" fill="rgb(106,106,106)"/><rect x="512" y="273" width="2" height="2" fill="rgb(106,106,106)"/><rect x="1065" y="1013" width="2" height="2" fill="rgb(113,143,138)"/><rect x="332" y="759" width="2" height="2" fill="rgb(101,101,101)"/><rect x="1144" y="847" width="1" height="1" fill="rgb(104,104,104)"/><rect x="664" y="781" width="1" height="1" fill="rgb(108,108,108)"/><rect x="976" y="328" width="1" height="1" fill="rgb(122,122,107)"/><rect x="584" y="295" width="2" height="2" fill="rgb(98,128,123)"/><rect x="418" y="329" width="1" height="1" fill="rgb(98,98,98)"/><rect x="978" y="275" width="2" height="2" fill="rgb(115,115,115)"/><rect x="1313" y="520" width="2" height="2" fill="rgb(93,93,93)"/><rect x="712" y="902" width="2" height="2" fill="rgb(88,88,88)"/><rect x="832" y="947" width="2" height="2" fill="rgb(95,95,95)"/><rect x="397" y="548" width="2" height="2" fill="rgb(124,124,124)"/><rect x="747" y="876" width="2" height="2" fill="rgb(92,92,92)"/><rect x="349" y="515" width="2" height="2" fill="rgb(117,117,117)"/><rect x="1074" y="1047" width="2" height="2" fill="rgb(86,86,86)"/><rect x="454" y="1055" width="2" height="2" fill="rgb(85,85,85)"/><rect x="771" y="360" width="2" height="2" fill="rgb(120,120,120)"/><rect x="172" y="583" width="2" height="2" fill="rgb(94,94,94)"/><rect x="1008" y="472" width="2" height="2" fill="rgb(103,103,103)"/><rect x="259" y="596" width="2" height="2" fill="rgb(116,116,116)"/><rect x="1263" y="873" width="2" height="2" fill="rgb(100,100,100)"/><rect x="1094" y="567" width="2" height="2" fill="rgb(124,124,124)"/><rect x="559" y="370" width="2" height="2" fill="rgb(96,126,121)"/><rect x="990" y="406" width="2" height="2" fill="rgb(109,109,109)"/><rect x="321" y="338" width="2" height="2" fill="rgb(106,106,106)"/><rect x="1376" y="816" width="2" height="2" fill="rgb(93,93,93)"/><rect x="210" y="478" width="2" height="2" fill="rgb(100,100,85)"/><rect x="916" y="624" width="2" height="2" fill="rgb(92,92,92)"/><rect x="1387" y="1053" width="2" height="2" fill="rgb(105,105,90)"/><rect x="1046" y="579" width="2" height="2" fill="rgb(95,95,95)"/><rect x="1130" y="575" width="2" height="2" fill="rgb(90,90,90)"/><rect x="1306" y="765" width="2" height="2" fill="rgb(112,112,112)"/><rect x="299" y="984" width="2" height="2" fill="rgb(94,94,94)"/><rect x="492" y="528" width="2" height="2" fill="rgb(91,91,91)"/><rect x="623" y="355" width="1" height="1" fill="rgb(103,103,88)"/><rect x="1336" y="887" width="2" height="2" fill="rgb(88,88,88)"/><rect x="1072" y="825" width="2" height="2" fill="rgb(118,118,103)"/><rect x="878" y="961" width="2" height="2" fill="rgb(110,110,95)"/><rect x="353" y="676" width="2" height="2" fill="rgb(107,137,132)"/><rect x="1360" y="514" width="1" height="1" fill="rgb(110,110,110)"/><rect x="880" y="535" width="2" height="2" fill="rgb(99,129,124)"/><rect x="317" y="649" width="1" height="1" fill="rgb(124,124,124)"/><rect x="179" y="1004" width="2" height="2" fill="rgb(91,91,91)"/><rect x="1303" y="517" width="2" height="2" fill="rgb(108,108,108)"/><rect x="386" y="421" width="2" height="2" fill="rgb(123,123,123)"/><rect x="1188" y="428" width="2" height="2" fill="rgb(120,120,120)"/><rect x="669" y="510" width="1" height="1" fill="rgb(109,109,109)"/><rect x="275" y="457" width="1" height="1" fill="rgb(119,119,119)"/><rect x="1239" y="435" width="2" height="2" fill="rgb(104,104,104)"/><rect x="1040" y="899" width="1" height="1" fill="rgb(116,116,116)"/><rect x="909" y="338" width="2" height="2" fill="rgb(92,92,92)"/><rect x="1199" y="703" width="2" height="2" fill="rgb(120,120,120)"/><rect x="801" y="450" width="2" height="2" fill="rgb(95,95,95)"/><rect x="231" y="527" width="2" height="2" fill="rgb(119,119,119)"/><rect x="1274" y="525" width="2" height="2" fill="rgb(85,85,85)"/><rect x="499" y="635" width="2" height="2" fill="rgb(107,107,107)"/><rect x="1026" y="937" width="1" height="1" fill="rgb(100,100,100)"/><rect x="432" y="864" width="2" height="2" fill="rgb(110,110,110)"/><rect x="617" y="843" width="2" height="2" fill="rgb(113,143,138)"/><rect x="340" y="946" width="2" height="2" fill="rgb(110,110,110)"/><rect x="1093" y="717" width="2" height="2" fill="rgb(108,108,108)"/><rect x="881" y="420" width="2" height="2" fill="rgb(78,108,103)"/><rect x="895" y="442" width="2" height="2" fill="rgb(116,116,116)"/><rect x="427" y="372" width="2" height="2" fill="rgb(95,95,95)"/><rect x="501" y="897" width="1" height="1" fill="rgb(121,121,121)"/><rect x="165" y="1066" width="2" height="2" fill="rgb(91,91,91)"/><rect x="791" y="671" width="2" height="2" fill="rgb(97,97,82)"/><rect x="1159" y="366" width="2" height="2" fill="rgb(109,109,109)"/><rect x="920" y="610" width="2" height="2" fill="rgb(94,94,94)"/><rect x="428" y="896" width="2" height="2" fill="rgb(121,121,121)"/><rect x="539" y="291" width="2" height="2" fill="rgb(81,111,106)"/><rect x="1281" y="521" width="2" height="2" fill="rgb(105,105,105)"/><rect x="479" y="673" width="2" height="2" fill="rgb(107,107,107)"/><rect x="595" y="872" width="2" height="2" fill="rgb(96,96,96)"/><rect x="695" y="283" width="2" height="2" fill="rgb(123,123,123)"/><rect x="167" y="929" width="2" height="2" fill="rgb(100,100,100)"/><rect x="241" y="756" width="2" height="2" fill="rgb(100,130,125)"/><rect x="809" y="974" width="2" height="2" fill="rgb(106,106,106)"/><rect x="1322" y="1041" width="1" height="1" fill="rgb(85,85,85)"/><rect x="1119" y="504" width="1" height="1" fill="rgb(129,129,114)"/><rect x="891" y="399" width="2" height="2" fill="rgb(105,105,105)"/><rect x="320" y="456" width="2" height="2" fill="rgb(125,125,125)"/><rect x="1308" y="1011" width="2" height="2" fill="rgb(120,120,120)"/><rect x="1255" y="659" width="2" height="2" fill="rgb(119,119,119)"/><rect x="1376" y="992" width="2" height="2" fill="rgb(123,123,123)"/><rect x="1145" y="784" width="2" height="2" fill="rgb(111,111,111)"/><rect x="618" y="648" width="2" height="2" fill="rgb(112,112,112)"/><rect x="1087" y="483" width="2" height="2" fill="rgb(115,115,100)"/><rect x="1243" y="816" width="1" height="1" fill="rgb(116,116,116)"/><rect x="1385" y="339" width="2" height="2" fill="rgb(108,108,108)"/><rect x="978" y="743" width="2" height="2" fill="rgb(107,107,107)"/><rect x="447" y="861" width="1" height="1" fill="rgb(106,106,106)"/><rect x="1367" y="832" width="1" height="1" fill="rgb(104,104,104)"/><rect x="1385" y="909" width="2" height="2" fill="rgb(103,103,88)"/><rect x="1295" y="579" width="2" height="2" fill="rgb(113,113,113)"/><rect x="713" y="278" width="2" height="2" fill="rgb(104,104,104)"/><rect x="938" y="666" width="2" height="2" fill="rgb(96,96,81)"/><rect x="250" y="501" width="2" height="2" fill="rgb(95,95,95)"/><rect x="250" y="402" width="2" height="2" fill="rgb(114,114,99)"/><rect x="1150" y="584" width="2" height="2" fill="rgb(89,89,89)"/><rect x="618" y="506" width="2" height="2" fill="rgb(99,99,99)"/><rect x="509" y="416" width="2" height="2" fill="rgb(104,104,104)"/><rect x="850" y="578" width="2" height="2" fill="rgb(122,122,122)"/><rect x="1263" y="1009" width="2" height="2" fill="rgb(92,92,92)"/><rect x="442" y="711" width="2" height="2" fill="rgb(117,117,117)"/><rect x="1265" y="802" width="1" height="1" fill="rgb(114,114,114)"/><rect x="622" y="832" width="2" height="2" fill="rgb(103,103,103)"/><rect x="1280" y="819" width="1" height="1" fill="rgb(119,119,119)"/><rect x="384" y="583" width="2" height="2" fill="rgb(116,116,116)"/><rect x="601" y="962" width="2" height="2" fill="rgb(92,92,92)"/><rect x="1057" y="1036" width="2" height="2" fill="rgb(113,113,113)"/><rect x="1172" y="535" width="2" height="2" fill="rgb(94,94,94)"/><rect x="1025" y="395" width="2" height="2" fill="rgb(106,106,106)"/><rect x="1332" y="382" width="2" height="2" fill="rgb(103,103,103)"/><rect x="1205" y="772" width="2" height="2" fill="rgb(104,104,104)"/><rect x="603" y="384" width="2" height="2" fill="rgb(90,90,75)"/><rect x="1088" y="976" width="2" height="2" fill="rgb(98,98,98)"/><rect x="952" y="497" width="2" height="2" fill="rgb(121,121,121)"/><rect x="904" y="376" width="1" height="1" fill="rgb(87,87,87)"/><rect x="688" y="902" width="2" height="2" fill="rgb(96,96,96)"/><rect x="940" y="774" width="2" height="2" fill="rgb(119,119,119)"/><rect x="760" y="349" width="2" height="2" fill="rgb(103,103,103)"/><rect x="949" y="279" width="2" height="2" fill="rgb(96,96,96)"/><rect x="499" y="356" width="2" height="2" fill="rgb(107,107,107)"/><rect x="248" y="567" width="2" height="2" fill="rgb(90,90,75)"/><rect x="363" y="1034" width="2" height="2" fill="rgb(101,131,126)"/><rect x="1235" y="484" width="2" height="2" fill="rgb(92,92,77)"/><rect x="566" y="272" width="2" height="2" fill="rgb(120,120,120)"/><rect x="950" y="864" width="2" height="2" fill="rgb(110,110,110)"/><rect x="861" y="304" width="2" height="2" fill="rgb(89,89,89)"/><rect x="226" y="878" width="2" height="2" fill="rgb(94,94,94)"/><rect x="217" y="548" width="2" height="2" fill="rgb(92,92,92)"/><rect x="221" y="1013" width="2" height="2" fill="rgb(119,119,119)"/><rect x="552" y="709" width="2" height="2" fill="rgb(114,114,114)"/><rect x="746" y="476" width="1" height="1" fill="rgb(96,96,81)"/><rect x="713" y="311" width="1" height="1" fill="rgb(94,94,94)"/><rect x="249" y="374" width="2" height="2" fill="rgb(118,118,118)"/><rect x="196" y="434" width="2" height="2" fill="rgb(124,124,124)"/><rect x="157" y="682" width="2" height="2" fill="rgb(93,93,93)"/><rect x="1375" y="848" width="2" height="2" fill="rgb(107,107,107)"/><rect x="527" y="331" width="1" height="1" fill="rgb(98,98,98)"/><rect x="939" y="344" width="2" height="2" fill="rgb(101,101,101)"/><rect x="524" y="628" width="2" height="2" fill="rgb(95,125,120)"/><rect x="301" y="408" width="2" height="2" fill="rgb(101,101,101)"/><rect x="745" y="596" width="2" height="2" fill="rgb(120,120,105)"/><rect x="522" y="377" width="2" height="2" fill="rgb(88,88,88)"/><rect x="226" y="995" width="2" height="2" fill="rgb(106,106,106)"/><rect x="817" y="1053" width="2" height="2" fill="rgb(116,116,116)"/><rect x="193" y="594" width="2" height="2" fill="rgb(89,89,89)"/><rect x="391" y="734" width="2" height="2" fill="rgb(103,103,88)"/><rect x="1371" y="1045" width="1" height="1" fill="rgb(121,121,106)"/><rect x="711" y="392" width="2" height="2" fill="rgb(79,109,104)"/><rect x="352" y="487" width="2" height="2" fill="rgb(88,88,88)"/><rect x="1033" y="395" width="2" height="2" fill="rgb(86,86,86)"/><rect x="1137" y="988" width="2" height="2" fill="rgb(116,116,116)"/><rect x="793" y="426" width="2" height="2" fill="rgb(89,89,89)"/><rect x="1277" y="757" width="2" height="2" fill="rgb(125,125,125)"/><rect x="808" y="395" width="2" height="2" fill="rgb(114,114,99)"/><rect x="1063" y="610" width="2" height="2" fill="rgb(85,85,85)"/><rect x="473" y="401" width="2" height="2" fill="rgb(110,110,110)"/><rect x="255" y="1040" width="1" height="1" fill="rgb(91,91,91)"/><rect x="813" y="592" width="2" height="2" fill="rgb(91,91,91)"/><rect x="840" y="313" width="2" height="2" fill="rgb(120,120,120)"/><rect x="1307" y="716" width="2" height="2" fill="rgb(89,89,89)"/><rect x="929" y="691" width="2" height="2" fill="rgb(111,111,111)"/><rect x="1185" y="516" width="2" height="2" fill="rgb(94,94,94)"/><rect x="990" y="617" width="2" height="2" fill="rgb(91,91,91)"/><rect x="927" y="420" width="2" height="2" fill="rgb(96,96,96)"/><rect x="248" y="752" width="2" height="2" fill="rgb(118,118,118)"/><rect x="895" y="949" width="2" height="2" fill="rgb(94,94,79)"/><rect x="191" y="534" width="2" height="2" fill="rgb(104,104,104)"/><rect x="365" y="851" width="1" height="1" fill="rgb(86,86,86)"/><rect x="290" y="300" width="2" height="2" fill="rgb(123,123,123)"/><rect x="561" y="634" width="1" height="1" fill="rgb(94,94,94)"/><rect x="524" y="402" width="2" height="2" fill="rgb(114,114,114)"/><rect x="1073" y="491" width="2" height="2" fill="rgb(95,95,95)"/><rect x="666" y="308" width="2" height="2" fill="rgb(90,90,90)"/><rect x="1232" y="759" width="2" height="2" fill="rgb(95,95,95)"/><rect x="319" y="1036" width="2" height="2" fill="rgb(111,141,136)"/><rect x="758" y="446" width="2" height="2" fill="rgb(86,116,111)"/><rect x="221" y="322" width="2" height="2" fill="rgb(99,99,84)"/><rect x="500" y="723" width="2" height="2" fill="rgb(104,104,104)"/><rect x="399" y="520" width="2" height="2" fill="rgb(122,122,122)"/><rect x="274" y="455" width="2" height="2" fill="rgb(120,120,120)"/><rect x="1005" y="881" width="2" height="2" fill="rgb(91,91,91)"/><rect x="333" y="724" width="2" height="2" fill="rgb(110,110,110)"/><rect x="1124" y="797" width="2" height="2" fill="rgb(92,92,92)"/><rect x="1002" y="751" width="2" height="2" fill="rgb(109,109,94)"/><rect x="363" y="787" width="2" height="2" fill="rgb(108,108,108)"/><rect x="242" y="1059" width="2" height="2" fill="rgb(113,113,113)"/><rect x="1253" y="422" width="2" height="2" fill="rgb(97,97,97)"/><rect x="1376" y="555" width="1" height="1" fill="rgb(95,95,95)"/><rect x="719" y="327" width="2" height="2" fill="rgb(87,87,87)"/><rect x="721" y="325" width="2" height="2" fill="rgb(103,103,88)"/><rect x="737" y="506" width="1" height="1" fill="rgb(106,106,106)"/><rect x="1036" y="1031" width="2" height="2" fill="rgb(108,108,108)"/><rect x="609" y="1042" width="2" height="2" fill="rgb(125,125,125)"/><rect x="984" y="789" width="2" height="2" fill="rgb(102,102,102)"/><rect x="1069" y="745" width="1" height="1" fill="rgb(101,101,101)"/><rect x="602" y="989" width="2" height="2" fill="rgb(106,106,106)"/><rect x="1284" y="415" width="2" height="2" fill="rgb(88,88,88)"/><rect x="673" y="747" width="2" height="2" fill="rgb(86,86,86)"/><rect x="701" y="278" width="2" height="2" fill="rgb(125,125,110)"/><rect x="768" y="1018" width="2" height="2" fill="rgb(100,100,100)"/><rect x="1052" y="608" width="2" height="2" fill="rgb(102,102,87)"/><rect x="1318" y="881" width="2" height="2" fill="rgb(102,102,102)"/><rect x="707" y="1063" width="2" height="2" fill="rgb(86,86,86)"/><rect x="755" y="843" width="1" height="1" fill="rgb(111,111,111)"/><rect x="1021" y="396" width="1" height="1" fill="rgb(91,91,76)"/><rect x="151" y="761" width="2" height="2" fill="rgb(102,102,102)"/><rect x="1070" y="639" width="1" height="1" fill="rgb(109,109,109)"/><rect x="774" y="530" width="2" height="2" fill="rgb(89,89,89)"/><rect x="1072" y="348" width="1" height="1" fill="rgb(86,86,86)"/><rect x="681" y="731" width="2" height="2" fill="rgb(104,104,104)"/><rect x="1206" y="548" width="2" height="2" fill="rgb(109,109,109)"/><rect x="1031" y="391" width="2" height="2" fill="rgb(104,104,104)"/><rect x="662" y="1054" width="2" height="2" fill="rgb(120,120,120)"/><rect x="175" y="309" width="2" height="2" fill="rgb(92,92,92)"/><rect x="663" y="583" width="2" height="2" fill="rgb(115,115,115)"/><rect x="523" y="797" width="1" height="1" fill="rgb(113,113,113)"/><rect x="241" y="854" width="2" height="2" fill="rgb(104,104,104)"/><rect x="904" y="346" width="2" height="2" fill="rgb(106,106,106)"/><rect x="437" y="681" width="2" height="2" fill="rgb(120,120,120)"/><rect x="1109" y="838" width="1" height="1" fill="rgb(94,94,94)"/><rect x="388" y="642" width="2" height="2" fill="rgb(86,86,86)"/><rect x="223" y="1029" width="2" height="2" fill="rgb(90,90,90)"/><rect x="431" y="671" width="2" height="2" fill="rgb(118,118,118)"/><rect x="237" y="796" width="2" height="2" fill="rgb(95,95,80)"/><rect x="214" y="381" width="2" height="2" fill="rgb(87,87,87)"/><rect x="317" y="804" width="2" height="2" fill="rgb(77,107,102)"/><rect x="702" y="1007" width="1" height="1" fill="rgb(130,130,115)"/><rect x="768" y="991" width="2" height="2" fill="rgb(118,118,103)"/><rect x="1156" y="309" width="2" height="2" fill="rgb(129,129,114)"/><rect x="1182" y="299" width="2" height="2" fill="rgb(106,106,106)"/><rect x="403" y="833" width="1" height="1" fill="rgb(122,122,122)"/><rect x="648" y="565" width="2" height="2" fill="rgb(88,88,88)"/><rect x="834" y="918" width="2" height="2" fill="rgb(118,118,118)"/><rect x="786" y="619" width="2" height="2" fill="rgb(99,99,99)"/><rect x="267" y="869" width="2" height="2" fill="rgb(119,119,104)"/><rect x="172" y="862" width="2" height="2" fill="rgb(125,125,125)"/><rect x="760" y="307" width="2" height="2" fill="rgb(107,107,107)"/><rect x="467" y="669" width="1" height="1" fill="rgb(98,98,98)"/><rect x="749" y="671" width="2" height="2" fill="rgb(122,122,122)"/><rect x="310" y="352" width="1" height="1" fill="rgb(118,118,118)"/><rect x="796" y="305" width="2" height="2" fill="rgb(114,114,114)"/><rect x="959" y="430" width="1" height="1" fill="rgb(80,110,105)"/><rect x="401" y="475" width="1" height="1" fill="rgb(108,108,108)"/><rect x="559" y="1058" width="2" height="2" fill="rgb(123,123,123)"/><rect x="247" y="1010" width="2" height="2" fill="rgb(109,109,109)"/><rect x="742" y="585" width="2" height="2" fill="rgb(110,110,110)"/><rect x="1000" y="903" width="2" height="2" fill="rgb(121,121,121)"/><rect x="286" y="990" width="1" height="1" fill="rgb(102,102,87)"/><rect x="354" y="856" width="1" height="1" fill="rgb(93,93,93)"/><rect x="1172" y="374" width="1" height="1" fill="rgb(90,90,75)"/><rect x="200" y="411" width="2" height="2" fill="rgb(110,110,110)"/><rect x="1242" y="1059" width="2" height="2" fill="rgb(125,125,110)"/><rect x="494" y="538" width="2" height="2" fill="rgb(93,93,93)"/><rect x="977" y="773" width="2" height="2" fill="rgb(124,124,124)"/><rect x="188" y="925" width="1" height="1" fill="rgb(112,112,112)"/><rect x="721" y="1046" width="2" height="2" fill="rgb(99,99,99)"/><rect x="736" y="877" width="2" height="2" fill="rgb(91,91,91)"/><rect x="1361" y="993" width="2" height="2" fill="rgb(114,114,99)"/><rect x="269" y="961" width="2" height="2" fill="rgb(128,128,113)"/><rect x="1041" y="888" width="2" height="2" fill="rgb(97,127,122)"/><rect x="904" y="1058" width="2" height="2" fill="rgb(87,87,87)"/><rect x="615" y="574" width="2" height="2" fill="rgb(97,97,97)"/><rect x="242" y="304" width="2" height="2" fill="rgb(85,85,85)"/><rect x="367" y="386" width="1" height="1" fill="rgb(122,122,107)"/><rect x="303" y="364" width="2" height="2" fill="rgb(108,138,133)"/><rect x="153" y="617" width="2" height="2" fill="rgb(86,116,111)"/><rect x="579" y="851" width="2" height="2" fill="rgb(103,103,103)"/><rect x="1391" y="969" width="2" height="2" fill="rgb(105,105,105)"/><rect x="349" y="629" width="2" height="2" fill="rgb(87,87,87)"/><rect x="267" y="490" width="1" height="1" fill="rgb(110,110,110)"/><rect x="284" y="1020" width="1" height="1" fill="rgb(99,99,99)"/><rect x="831" y="434" width="2" height="2" fill="rgb(130,130,115)"/><rect x="263" y="884" width="2" height="2" fill="rgb(101,101,101)"/><rect x="1346" y="785" width="2" height="2" fill="rgb(125,125,125)"/><rect x="613" y="407" width="2" height="2" fill="rgb(97,97,97)"/><rect x="297" y="1031" width="2" height="2" fill="rgb(101,101,101)"/><rect x="965" y="654" width="2" height="2" fill="rgb(121,121,121)"/><rect x="413" y="745" width="2" height="2" fill="rgb(93,123,118)"/><rect x="250" y="658" width="2" height="2" fill="rgb(113,113,113)"/><rect x="1230" y="930" width="2" height="2" fill="rgb(112,112,112)"/><rect x="580" y="421" width="2" height="2" fill="rgb(115,115,115)"/><rect x="190" y="542" width="1" height="1" fill="rgb(98,98,98)"/><rect x="1015" y="948" width="2" height="2" fill="rgb(109,109,109)"/><rect x="251" y="649" width="2" height="2" fill="rgb(104,104,104)"/><rect x="799" y="776" width="2" height="2" fill="rgb(102,102,87)"/><rect x="1033" y="728" width="2" height="2" fill="rgb(95,95,95)"/><rect x="557" y="626" width="1" height="1" fill="rgb(105,105,105)"/><rect x="930" y="740" width="2" height="2" fill="rgb(89,89,89)"/><rect x="583" y="744" width="2" height="2" fill="rgb(115,115,115)"/><rect x="661" y="858" width="2" height="2" fill="rgb(117,117,117)"/><rect x="706" y="950" width="2" height="2" fill="rgb(107,107,92)"/><rect x="417" y="377" width="2" height="2" fill="rgb(102,102,102)"/><rect x="1079" y="711" width="2" height="2" fill="rgb(124,124,124)"/><rect x="974" y="477" width="2" height="2" fill="rgb(117,117,117)"/><rect x="1025" y="990" width="2" height="2" fill="rgb(91,91,91)"/><rect x="990" y="1009" width="2" height="2" fill="rgb(103,103,103)"/><rect x="575" y="1055" width="2" height="2" fill="rgb(102,102,102)"/><rect x="313" y="925" width="2" height="2" fill="rgb(102,102,102)"/><rect x="902" y="550" width="2" height="2" fill="rgb(98,98,98)"/><rect x="439" y="531" width="2" height="2" fill="rgb(77,107,102)"/><rect x="258" y="1057" width="2" height="2" fill="rgb(97,97,97)"/><rect x="1163" y="592" width="2" height="2" fill="rgb(125,125,125)"/><rect x="299" y="549" width="2" height="2" fill="rgb(113,113,98)"/><rect x="759" y="861" width="2" height="2" fill="rgb(128,128,113)"/><rect x="720" y="475" width="2" height="2" fill="rgb(101,101,101)"/><rect x="1167" y="1029" width="2" height="2" fill="rgb(94,94,94)"/><rect x="904" y="722" width="2" height="2" fill="rgb(126,126,111)"/><rect x="889" y="764" width="2" height="2" fill="rgb(125,125,125)"/><rect x="588" y="701" width="2" height="2" fill="rgb(95,125,120)"/><rect x="990" y="331" width="2" height="2" fill="rgb(85,85,85)"/><rect x="1318" y="569" width="2" height="2" fill="rgb(111,111,111)"/><rect x="1193" y="796" width="2" height="2" fill="rgb(92,92,77)"/><rect x="857" y="401" width="2" height="2" fill="rgb(122,122,122)"/><rect x="1345" y="746" width="2" height="2" fill="rgb(99,99,84)"/><rect x="567" y="908" width="2" height="2" fill="rgb(108,108,108)"/><rect x="738" y="525" width="2" height="2" fill="rgb(95,95,95)"/><rect x="825" y="565" width="2" height="2" fill="rgb(123,123,123)"/><rect x="1218" y="1024" width="2" height="2" fill="rgb(105,105,105)"/><rect x="1210" y="638" width="2" height="2" fill="rgb(103,103,103)"/><rect x="1115" y="667" width="2" height="2" fill="rgb(113,113,98)"/><rect x="1138" y="523" width="2" height="2" fill="rgb(110,110,110)"/><rect x="771" y="507" width="2" height="2" fill="rgb(85,85,85)"/><rect x="1092" y="755" width="2" height="2" fill="rgb(112,112,112)"/><rect x="1089" y="582" width="1" height="1" fill="rgb(113,113,113)"/><rect x="280" y="1054" width="2" height="2" fill="rgb(103,103,103)"/><rect x="946" y="438" width="1" height="1" fill="rgb(94,124,119)"/><rect x="751" y="1014" width="2" height="2" fill="rgb(116,116,116)"/><rect x="252" y="406" width="2" height="2" fill="rgb(98,128,123)"/><rect x="477" y="508" width="1" height="1" fill="rgb(108,108,108)"/><rect x="914" y="606" width="1" height="1" fill="rgb(114,114,114)"/><rect x="439" y="925" width="2" height="2" fill="rgb(107,107,107)"/><rect x="1162" y="423" width="2" height="2" fill="rgb(81,111,106)"/><rect x="263" y="572" width="2" height="2" fill="rgb(95,95,95)"/><rect x="1072" y="932" width="2" height="2" fill="rgb(88,88,88)"/><rect x="855" y="795" width="2" height="2" fill="rgb(85,85,85)"/><rect x="300" y="554" width="2" height="2" fill="rgb(93,93,93)"/><rect x="738" y="675" width="1" height="1" fill="rgb(110,110,110)"/><rect x="422" y="503" width="1" height="1" fill="rgb(101,101,86)"/><rect x="1066" y="696" width="2" height="2" fill="rgb(115,145,140)"/><rect x="824" y="708" width="2" height="2" fill="rgb(95,95,95)"/><rect x="1303" y="497" width="2" height="2" fill="rgb(113,113,113)"/><rect x="1150" y="1018" width="2" height="2" fill="rgb(120,120,120)"/><rect x="191" y="945" width="2" height="2" fill="rgb(102,102,102)"/><rect x="1055" y="379" width="2" height="2" fill="rgb(108,108,108)"/><rect x="581" y="309" width="2" height="2" fill="rgb(129,129,114)"/><rect x="1259" y="484" width="2" height="2" fill="rgb(106,106,106)"/><rect x="1295" y="586" width="2" height="2" fill="rgb(96,96,96)"/><rect x="1029" y="757" width="2" height="2" fill="rgb(122,122,122)"/><rect x="545" y="589" width="1" height="1" fill="rgb(124,124,124)"/><rect x="1166" y="754" width="1" height="1" fill="rgb(116,116,116)"/><rect x="950" y="748" width="2" height="2" fill="rgb(98,98,83)"/><rect x="1258" y="943" width="2" height="2" fill="rgb(108,108,93)"/><rect x="421" y="856" width="2" height="2" fill="rgb(107,107,107)"/><rect x="712" y="664" width="2" height="2" fill="rgb(119,119,119)"/><rect x="1053" y="642" width="2" height="2" fill="rgb(98,98,98)"/><rect x="1367" y="839" width="1" height="1" fill="rgb(104,104,89)"/><rect x="792" y="517" width="2" height="2" fill="rgb(93,93,93)"/><rect x="181" y="618" width="2" height="2" fill="rgb(95,95,95)"/><rect x="473" y="1052" width="2" height="2" fill="rgb(86,86,86)"/><rect x="866" y="588" width="2" height="2" fill="rgb(107,107,107)"/><rect x="184" y="536" width="1" height="1" fill="rgb(120,120,120)"/><rect x="1312" y="951" width="2" height="2" fill="rgb(96,96,96)"/><rect x="890" y="441" width="2" height="2" fill="rgb(122,122,122)"/><rect x="707" y="814" width="2" height="2" fill="rgb(106,106,106)"/><rect x="637" y="1002" width="2" height="2" fill="rgb(98,98,98)"/><rect x="1105" y="714" width="2" height="2" fill="rgb(117,117,102)"/><rect x="1081" y="856" width="2" height="2" fill="rgb(88,88,88)"/><rect x="1197" y="895" width="2" height="2" fill="rgb(86,86,86)"/><rect x="290" y="742" width="2" height="2" fill="rgb(121,121,121)"/><rect x="299" y="458" width="2" height="2" fill="rgb(122,122,122)"/><rect x="463" y="966" width="2" height="2" fill="rgb(101,101,101)"/><rect x="622" y="553" width="2" height="2" fill="rgb(90,90,90)"/><rect x="240" y="916" width="2" height="2" fill="rgb(95,95,80)"/><rect x="1106" y="1057" width="2" height="2" fill="rgb(115,115,115)"/><rect x="1088" y="860" width="2" height="2" fill="rgb(88,88,88)"/><rect x="148" y="1015" width="2" height="2" fill="rgb(108,108,108)"/><rect x="551" y="977" width="2" height="2" fill="rgb(93,123,118)"/><rect x="878" y="282" width="2" height="2" fill="rgb(89,89,89)"/><rect x="654" y="685" width="2" height="2" fill="rgb(116,116,116)"/><rect x="663" y="295" width="2" height="2" fill="rgb(102,102,102)"/><rect x="968" y="882" width="2" height="2" fill="rgb(98,98,98)"/><rect x="270" y="919" width="1" height="1" fill="rgb(110,110,110)"/><rect x="464" y="810" width="2" height="2" fill="rgb(104,104,89)"/><rect x="1106" y="386" width="2" height="2" fill="rgb(109,109,109)"/><rect x="800" y="502" width="2" height="2" fill="rgb(101,101,101)"/><rect x="1037" y="781" width="1" height="1" fill="rgb(102,102,87)"/><rect x="825" y="341" width="1" height="1" fill="rgb(102,102,102)"/><rect x="786" y="567" width="2" height="2" fill="rgb(86,86,86)"/><rect x="158" y="944" width="2" height="2" fill="rgb(122,122,122)"/><rect x="634" y="408" width="2" height="2" fill="rgb(87,87,87)"/><rect x="502" y="1014" width="2" height="2" fill="rgb(107,107,92)"/><rect x="896" y="910" width="2" height="2" fill="rgb(86,86,86)"/><rect x="657" y="555" width="2" height="2" fill="rgb(92,92,77)"/><rect x="966" y="374" width="2" height="2" fill="rgb(115,115,115)"/><rect x="588" y="749" width="2" height="2" fill="rgb(99,99,99)"/><rect x="1095" y="478" width="2" height="2" fill="rgb(106,106,106)"/><rect x="261" y="982" width="2" height="2" fill="rgb(88,88,88)"/><rect x="1064" y="312" width="2" height="2" fill="rgb(106,136,131)"/><rect x="987" y="609" width="2" height="2" fill="rgb(111,111,111)"/><rect x="272" y="688" width="2" height="2" fill="rgb(110,110,110)"/><rect x="589" y="485" width="1" height="1" fill="rgb(117,117,117)"/><rect x="760" y="349" width="2" height="2" fill="rgb(93,93,93)"/><rect x="773" y="933" width="2" height="2" fill="rgb(106,106,106)"/><rect x="897" y="340" width="2" height="2" fill="rgb(90,90,90)"/><rect x="1100" y="352" width="2" height="2" fill="rgb(101,101,101)"/><rect x="558" y="595" width="2" height="2" fill="rgb(100,100,100)"/><rect x="584" y="434" width="2" height="2" fill="rgb(117,117,102)"/><rect x="1132" y="948" width="1" height="1" fill="rgb(124,124,124)"/><rect x="684" y="832" width="2" height="2" fill="rgb(116,116,116)"/><rect x="446" y="483" width="1" height="1" fill="rgb(125,125,125)"/><rect x="881" y="844" width="1" height="1" fill="rgb(95,95,95)"/><rect x="542" y="1012" width="2" height="2" fill="rgb(85,85,85)"/><rect x="1048" y="1000" width="1" height="1" fill="rgb(122,122,122)"/><rect x="1387" y="576" width="2" height="2" fill="rgb(91,91,91)"/><rect x="559" y="875" width="2" height="2" fill="rgb(101,101,86)"/><rect x="1039" y="944" width="2" height="2" fill="rgb(124,124,124)"/><rect x="743" y="957" width="1" height="1" fill="rgb(101,101,101)"/><rect x="787" y="791" width="1" height="1" fill="rgb(101,101,101)"/><rect x="1254" y="763" width="1" height="1" fill="rgb(93,93,78)"/><rect x="888" y="1066" width="2" height="2" fill="rgb(121,121,121)"/><rect x="1253" y="422" width="1" height="1" fill="rgb(103,103,88)"/><rect x="1008" y="463" width="1" height="1" fill="rgb(104,104,104)"/><rect x="1290" y="842" width="1" height="1" fill="rgb(122,122,122)"/><rect x="1353" y="879" width="2" height="2" fill="rgb(93,93,93)"/><rect x="1367" y="368" width="2" height="2" fill="rgb(118,118,118)"/><rect x="1238" y="991" width="2" height="2" fill="rgb(107,107,107)"/><rect x="598" y="490" width="1" height="1" fill="rgb(116,116,101)"/><rect x="499" y="494" width="2" height="2" fill="rgb(88,88,88)"/><rect x="1057" y="376" width="2" height="2" fill="rgb(98,98,83)"/><rect x="1119" y="653" width="2" height="2" fill="rgb(120,120,120)"/><rect x="799" y="913" width="2" height="2" fill="rgb(125,125,125)"/><rect x="621" y="993" width="2" height="2" fill="rgb(95,125,120)"/><rect x="276" y="698" width="2" height="2" fill="rgb(106,106,106)"/><rect x="1309" y="984" width="2" height="2" fill="rgb(103,103,103)"/><rect x="990" y="959" width="2" height="2" fill="rgb(94,94,94)"/><rect x="1252" y="449" width="2" height="2" fill="rgb(89,89,89)"/><rect x="837" y="767" width="2" height="2" fill="rgb(96,96,96)"/><rect x="437" y="945" width="2" height="2" fill="rgb(123,123,123)"/><rect x="341" y="781" width="2" height="2" fill="rgb(75,105,100)"/><rect x="416" y="441" width="2" height="2" fill="rgb(124,124,124)"/><rect x="847" y="668" width="1" height="1" fill="rgb(113,143,138)"/><rect x="1298" y="448" width="2" height="2" fill="rgb(109,109,109)"/><rect x="493" y="371" width="2" height="2" fill="rgb(125,125,125)"/><rect x="1150" y="1049" width="2" height="2" fill="rgb(91,91,91)"/><rect x="746" y="324" width="2" height="2" fill="rgb(92,92,92)"/><rect x="941" y="371" width="2" height="2" fill="rgb(103,103,103)"/><rect x="1167" y="408" width="2" height="2" fill="rgb(120,120,120)"/><rect x="723" y="683" width="2" height="2" fill="rgb(117,117,117)"/><rect x="1270" y="906" width="2" height="2" fill="rgb(98,98,98)"/><rect x="1358" y="845" width="2" height="2" fill="rgb(86,86,86)"/><rect x="484" y="313" width="2" height="2" fill="rgb(122,122,122)"/><rect x="874" y="675" width="2" height="2" fill="rgb(115,115,100)"/><rect x="221" y="352" width="2" height="2" fill="rgb(99,99,99)"/><rect x="859" y="614" width="2" height="2" fill="rgb(88,88,88)"/><rect x="797" y="527" width="2" height="2" fill="rgb(95,125,120)"/><rect x="590" y="668" width="2" height="2" fill="rgb(111,111,111)"/><rect x="1249" y="279" width="2" height="2" fill="rgb(102,102,102)"/><rect x="382" y="484" width="1" height="1" fill="rgb(115,115,115)"/><rect x="1168" y="884" width="2" height="2" fill="rgb(120,120,120)"/><rect x="212" y="930" width="2" height="2" fill="rgb(121,121,106)"/><rect x="1203" y="466" width="1" height="1" fill="rgb(104,104,104)"/><rect x="1096" y="314" width="2" height="2" fill="rgb(114,114,114)"/><rect x="325" y="759" width="1" height="1" fill="rgb(112,112,112)"/><rect x="877" y="660" width="1" height="1" fill="rgb(111,111,111)"/><rect x="320" y="734" width="2" height="2" fill="rgb(87,87,87)"/><rect x="860" y="483" width="2" height="2" fill="rgb(100,100,100)"/><rect x="823" y="754" width="2" height="2" fill="rgb(97,97,97)"/><rect x="657" y="962" width="2" height="2" fill="rgb(125,125,125)"/><rect x="680" y="465" width="2" height="2" fill="rgb(109,109,109)"/><rect x="720" y="628" width="2" height="2" fill="rgb(121,121,121)"/><rect x="495" y="605" width="2" height="2" fill="rgb(92,92,92)"/><rect x="888" y="918" width="1" height="1" fill="rgb(99,99,99)"/><rect x="464" y="438" width="1" height="1" fill="rgb(88,88,88)"/><rect x="837" y="1031" width="2" height="2" fill="rgb(107,107,107)"/><rect x="812" y="759" width="2" height="2" fill="rgb(111,111,111)"/><rect x="1374" y="1019" width="2" height="2" fill="rgb(99,99,99)"/><rect x="1061" y="712" width="2" height="2" fill="rgb(92,92,92)"/><rect x="380" y="628" width="2" height="2" fill="rgb(95,95,95)"/><rect x="564" y="469" width="2" height="2" fill="rgb(106,106,91)"/><rect x="363" y="335" width="2" height="2" fill="rgb(117,117,102)"/><rect x="804" y="833" width="2" height="2" fill="rgb(105,105,105)"/><rect x="335" y="794" width="2" height="2" fill="rgb(120,120,120)"/><rect x="1092" y="769" width="2" height="2" fill="rgb(85,85,85)"/><rect x="563" y="665" width="2" height="2" fill="rgb(85,85,85)"/><rect x="248" y="853" width="2" height="2" fill="rgb(98,98,98)"/><rect x="1351" y="359" width="2" height="2" fill="rgb(92,92,92)"/><rect x="558" y="841" width="2" height="2" fill="rgb(120,120,120)"/><rect x="769" y="618" width="2" height="2" fill="rgb(112,112,112)"/><rect x="744" y="289" width="2" height="2" fill="rgb(97,97,97)"/><rect x="512" y="921" width="2" height="2" fill="rgb(112,112,112)"/><rect x="1108" y="970" width="2" height="2" fill="rgb(119,119,119)"/><rect x="564" y="966" width="2" height="2" fill="rgb(86,86,86)"/><rect x="931" y="376" width="2" height="2" fill="rgb(92,92,92)"/><rect x="1160" y="672" width="2" height="2" fill="rgb(103,103,103)"/><rect x="875" y="827" width="2" height="2" fill="rgb(122,122,122)"/><rect x="507" y="486" width="1" height="1" fill="rgb(92,92,92)"/><rect x="338" y="863" width="2" height="2" fill="rgb(123,123,123)"/><rect x="522" y="879" width="2" height="2" fill="rgb(122,122,107)"/><rect x="649" y="603" width="2" height="2" fill="rgb(123,123,123)"/><rect x="456" y="343" width="1" height="1" fill="rgb(103,103,103)"/><rect x="847" y="910" width="2" height="2" fill="rgb(105,105,105)"/><rect x="418" y="829" width="1" height="1" fill="rgb(101,101,86)"/><rect x="1044" y="825" width="2" height="2" fill="rgb(116,116,116)"/><rect x="500" y="1020" width="2" height="2" fill="rgb(86,86,86)"/><rect x="343" y="396" width="1" height="1" fill="rgb(122,122,122)"/><rect x="1226" y="330" width="2" height="2" fill="rgb(94,94,94)"/><rect x="716" y="456" width="1" height="1" fill="rgb(124,124,109)"/><rect x="997" y="436" width="2" height="2" fill="rgb(114,114,114)"/><rect x="854" y="380" width="2" height="2" fill="rgb(109,109,94)"/><rect x="977" y="632" width="2" height="2" fill="rgb(77,107,102)"/><rect x="445" y="687" width="2" height="2" fill="rgb(108,108,108)"/><rect x="668" y="423" width="1" height="1" fill="rgb(109,109,94)"/><rect x="588" y="321" width="1" height="1" fill="rgb(110,110,110)"/><rect x="544" y="899" width="2" height="2" fill="rgb(99,99,99)"/><rect x="400" y="810" width="2" height="2" fill="rgb(87,87,87)"/><rect x="784" y="687" width="1" height="1" fill="rgb(123,123,123)"/><rect x="1126" y="540" width="2" height="2" fill="rgb(98,98,98)"/><rect x="1195" y="997" width="2" height="2" fill="rgb(87,87,87)"/><rect x="618" y="522" width="2" height="2" fill="rgb(97,97,97)"/><rect x="299" y="884" width="1" height="1" fill="rgb(116,116,116)"/><rect x="588" y="406" width="2" height="2" fill="rgb(107,107,92)"/><rect x="1089" y="416" width="2" height="2" fill="rgb(119,119,119)"/><rect x="1175" y="389" width="2" height="2" fill="rgb(108,108,108)"/><rect x="321" y="373" width="2" height="2" fill="rgb(104,104,89)"/><rect x="546" y="916" width="2" height="2" fill="rgb(112,112,112)"/><rect x="1154" y="417" width="1" height="1" fill="rgb(97,97,97)"/><rect x="1225" y="598" width="2" height="2" fill="rgb(99,129,124)"/><rect x="150" y="943" width="1" height="1" fill="rgb(98,98,98)"/><rect x="173" y="623" width="1" height="1" fill="rgb(120,120,120)"/><rect x="450" y="369" width="2" height="2" fill="rgb(123,123,123)"/><rect x="911" y="398" width="2" height="2" fill="rgb(83,113,108)"/><rect x="1361" y="638" width="1" height="1" fill="rgb(100,100,85)"/><rect x="451" y="993" width="2" height="2" fill="rgb(88,88,88)"/><rect x="624" y="868" width="2" height="2" fill="rgb(94,124,119)"/><rect x="370" y="873" width="2" height="2" fill="rgb(95,125,120)"/><rect x="471" y="787" width="2" height="2" fill="rgb(106,106,106)"/><rect x="395" y="938" width="2" height="2" fill="rgb(104,104,104)"/><rect x="1285" y="878" width="2" height="2" fill="rgb(112,112,97)"/><rect x="1071" y="385" width="2" height="2" fill="rgb(86,86,86)"/><rect x="756" y="842" width="1" height="1" fill="rgb(99,99,99)"/><rect x="1052" y="466" width="2" height="2" fill="rgb(89,89,89)"/><rect x="592" y="1024" width="2" height="2" fill="rgb(108,108,108)"/><rect x="499" y="521" width="2" height="2" fill="rgb(97,97,82)"/><rect x="1240" y="741" width="2" height="2" fill="rgb(108,108,93)"/><rect x="1371" y="936" width="2" height="2" fill="rgb(86,86,86)"/><rect x="363" y="856" width="1" height="1" fill="rgb(90,90,90)"/><rect x="1133" y="703" width="1" height="1" fill="rgb(103,103,88)"/><rect x="279" y="748" width="2" height="2" fill="rgb(125,125,110)"/><rect x="589" y="916" width="2" height="2" fill="rgb(107,107,107)"/><rect x="193" y="919" width="2" height="2" fill="rgb(102,102,102)"/><rect x="842" y="1015" width="2" height="2" fill="rgb(120,120,120)"/><rect x="205" y="936" width="1" height="1" fill="rgb(85,115,110)"/><rect x="548" y="820" width="1" height="1" fill="rgb(111,111,111)"/><rect x="560" y="383" width="2" height="2" fill="rgb(89,89,89)"/><rect x="451" y="765" width="1" height="1" fill="rgb(89,89,89)"/><rect x="558" y="996" width="1" height="1" fill="rgb(118,118,118)"/><rect x="717" y="951" width="2" height="2" fill="rgb(125,125,125)"/><rect x="1331" y="980" width="2" height="2" fill="rgb(99,99,99)"/><rect x="191" y="651" width="2" height="2" fill="rgb(121,121,121)"/><rect x="296" y="512" width="1" height="1" fill="rgb(114,114,114)"/><rect x="940" y="513" width="2" height="2" fill="rgb(104,134,129)"/><rect x="1182" y="874" width="2" height="2" fill="rgb(119,119,119)"/><rect x="1084" y="387" width="2" height="2" fill="rgb(106,106,106)"/><rect x="408" y="1045" width="2" height="2" fill="rgb(109,109,94)"/><rect x="396" y="709" width="2" height="2" fill="rgb(85,85,85)"/><rect x="334" y="1040" width="2" height="2" fill="rgb(98,98,98)"/><rect x="1354" y="556" width="1" height="1" fill="rgb(123,123,123)"/><rect x="678" y="427" width="2" height="2" fill="rgb(111,111,111)"/><rect x="1196" y="731" width="2" height="2" fill="rgb(123,123,123)"/><rect x="386" y="995" width="2" height="2" fill="rgb(102,102,102)"/><rect x="836" y="530" width="2" height="2" fill="rgb(88,88,88)"/><rect x="950" y="909" width="2" height="2" fill="rgb(91,91,91)"/><rect x="1183" y="1031" width="2" height="2" fill="rgb(110,110,110)"/><rect x="428" y="789" width="1" height="1" fill="rgb(93,93,93)"/><rect x="973" y="601" width="2" height="2" fill="rgb(92,92,92)"/><rect x="383" y="1008" width="2" height="2" fill="rgb(100,100,100)"/><rect x="1300" y="1030" width="2" height="2" fill="rgb(124,124,124)"/><rect x="1035" y="366" width="2" height="2" fill="rgb(120,120,105)"/><rect x="969" y="438" width="2" height="2" fill="rgb(111,111,111)"/><rect x="741" y="463" width="2" height="2" fill="rgb(122,122,122)"/><rect x="1258" y="742" width="2" height="2" fill="rgb(77,107,102)"/><rect x="183" y="589" width="2" height="2" fill="rgb(85,85,85)"/><rect x="1336" y="984" width="2" height="2" fill="rgb(120,120,120)"/><rect x="1172" y="1047" width="2" height="2" fill="rgb(91,91,91)"/><rect x="192" y="1036" width="2" height="2" fill="rgb(105,105,105)"/><rect x="1365" y="619" width="2" height="2" fill="rgb(122,122,122)"/><rect x="329" y="494" width="2" height="2" fill="rgb(110,110,110)"/><rect x="913" y="1010" width="2" height="2" fill="rgb(125,125,125)"/><rect x="1022" y="911" width="1" height="1" fill="rgb(115,115,115)"/><rect x="1142" y="664" width="2" height="2" fill="rgb(94,94,94)"/><rect x="344" y="515" width="1" height="1" fill="rgb(118,118,118)"/><rect x="960" y="595" width="2" height="2" fill="rgb(114,114,114)"/><rect x="415" y="621" width="2" height="2" fill="rgb(114,114,114)"/><rect x="489" y="272" width="2" height="2" fill="rgb(103,103,103)"/><rect x="230" y="508" width="1" height="1" fill="rgb(88,88,88)"/><rect x="222" y="476" width="2" height="2" fill="rgb(103,103,88)"/><rect x="271" y="1024" width="2" height="2" fill="rgb(95,95,80)"/><rect x="775" y="984" width="2" height="2" fill="rgb(93,93,78)"/><rect x="1278" y="340" width="2" height="2" fill="rgb(109,109,109)"/><rect x="1153" y="758" width="1" height="1" fill="rgb(125,125,125)"/><rect x="371" y="366" width="2" height="2" fill="rgb(88,88,88)"/><rect x="617" y="1014" width="1" height="1" fill="rgb(106,106,106)"/><rect x="1194" y="896" width="1" height="1" fill="rgb(114,114,99)"/><rect x="1284" y="808" width="1" height="1" fill="rgb(118,118,118)"/><rect x="185" y="522" width="2" height="2" fill="rgb(103,103,103)"/><rect x="1148" y="932" width="2" height="2" fill="rgb(86,86,86)"/><rect x="458" y="1043" width="2" height="2" fill="rgb(87,117,112)"/><rect x="1152" y="452" width="2" height="2" fill="rgb(103,103,103)"/><rect x="641" y="409" width="2" height="2" fill="rgb(97,97,97)"/><rect x="1114" y="799" width="2" height="2" fill="rgb(101,101,101)"/><rect x="283" y="868" width="2" height="2" fill="rgb(94,94,94)"/><rect x="918" y="315" width="2" height="2" fill="rgb(114,114,114)"/><rect x="178" y="611" width="1" height="1" fill="rgb(108,108,93)"/><rect x="653" y="893" width="2" height="2" fill="rgb(107,107,107)"/><rect x="555" y="730" width="2" height="2" fill="rgb(100,100,100)"/><rect x="866" y="706" width="1" height="1" fill="rgb(112,112,112)"/><rect x="1062" y="702" width="2" height="2" fill="rgb(85,85,85)"/><rect x="1324" y="669" width="2" height="2" fill="rgb(98,98,98)"/><rect x="1153" y="633" width="1" height="1" fill="rgb(108,108,108)"/><rect x="522" y="880" width="2" height="2" fill="rgb(112,112,112)"/><rect x="617" y="399" width="2" height="2" fill="rgb(94,94,94)"/><rect x="1029" y="567" width="2" height="2" fill="rgb(95,95,95)"/><rect x="763" y="466" width="2" height="2" fill="rgb(122,122,122)"/><rect x="617" y="968" width="2" height="2" fill="rgb(113,113,113)"/><rect x="1044" y="717" width="1" height="1" fill="rgb(102,102,87)"/><rect x="170" y="311" width="2" height="2" fill="rgb(91,91,91)"/><rect x="513" y="516" width="2" height="2" fill="rgb(105,105,90)"/><rect x="411" y="906" width="1" height="1" fill="rgb(106,106,106)"/><rect x="752" y="891" width="2" height="2" fill="rgb(97,97,97)"/><rect x="1213" y="655" width="2" height="2" fill="rgb(100,100,85)"/><rect x="634" y="331" width="1" height="1" fill="rgb(121,121,121)"/><rect x="1361" y="861" width="2" height="2" fill="rgb(103,103,103)"/><rect x="410" y="303" width="2" height="2" fill="rgb(96,96,96)"/><rect x="1099" y="451" width="1" height="1" fill="rgb(91,91,91)"/><rect x="694" y="941" width="2" height="2" fill="rgb(102,102,102)"/><rect x="286" y="577" width="2" height="2" fill="rgb(118,118,118)"/><rect x="235" y="571" width="2" height="2" fill="rgb(109,109,94)"/><rect x="990" y="336" width="2" height="2" fill="rgb(91,91,91)"/><rect x="209" y="900" width="2" height="2" fill="rgb(94,94,94)"/><rect x="1273" y="824" width="2" height="2" fill="rgb(101,101,86)"/><rect x="935" y="302" width="2" height="2" fill="rgb(116,116,101)"/><rect x="364" y="700" width="2" height="2" fill="rgb(123,123,123)"/><rect x="1010" y="365" width="2" height="2" fill="rgb(100,100,85)"/><rect x="329" y="920" width="2" height="2" fill="rgb(117,117,117)"/><rect x="559" y="645" width="2" height="2" fill="rgb(100,100,100)"/><rect x="1208" y="954" width="2" height="2" fill="rgb(87,87,87)"/><rect x="640" y="764" width="2" height="2" fill="rgb(108,108,108)"/><rect x="939" y="872" width="2" height="2" fill="rgb(96,96,96)"/><rect x="1215" y="294" width="1" height="1" fill="rgb(128,128,113)"/><rect x="162" y="771" width="2" height="2" fill="rgb(95,95,80)"/><rect x="811" y="389" width="2" height="2" fill="rgb(113,113,113)"/><rect x="1343" y="1044" width="2" height="2" fill="rgb(99,99,99)"/><rect x="726" y="739" width="2" height="2" fill="rgb(128,128,113)"/><rect x="820" y="985" width="2" height="2" fill="rgb(118,118,118)"/><rect x="230" y="278" width="2" height="2" fill="rgb(93,123,118)"/><rect x="440" y="709" width="2" height="2" fill="rgb(104,104,104)"/><rect x="400" y="339" width="2" height="2" fill="rgb(120,120,120)"/><rect x="315" y="902" width="2" height="2" fill="rgb(84,114,109)"/><rect x="467" y="784" width="2" height="2" fill="rgb(92,92,92)"/><rect x="491" y="684" width="2" height="2" fill="rgb(97,97,97)"/><rect x="566" y="1017" width="1" height="1" fill="rgb(108,108,108)"/><rect x="1110" y="822" width="2" height="2" fill="rgb(75,105,100)"/><rect x="804" y="580" width="2" height="2" fill="rgb(123,123,123)"/><rect x="881" y="1005" width="2" height="2" fill="rgb(110,110,110)"/><rect x="316" y="445" width="2" height="2" fill="rgb(91,91,91)"/><rect x="1087" y="283" width="2" height="2" fill="rgb(112,112,112)"/><rect x="974" y="839" width="1" height="1" fill="rgb(106,106,106)"/><rect x="469" y="377" width="1" height="1" fill="rgb(111,111,111)"/><rect x="165" y="663" width="2" height="2" fill="rgb(92,92,92)"/><rect x="409" y="719" width="2" height="2" fill="rgb(124,124,109)"/><rect x="992" y="710" width="2" height="2" fill="rgb(117,117,117)"/><rect x="648" y="676" width="2" height="2" fill="rgb(103,103,103)"/><rect x="1145" y="332" width="2" height="2" fill="rgb(87,87,87)"/><rect x="1379" y="376" width="2" height="2" fill="rgb(101,101,101)"/><rect x="898" y="1037" width="2" height="2" fill="rgb(106,106,106)"/><rect x="906" y="706" width="2" height="2" fill="rgb(112,112,112)"/><rect x="1043" y="426" width="2" height="2" fill="rgb(109,109,109)"/><rect x="1093" y="802" width="2" height="2" fill="rgb(85,85,85)"/><rect x="810" y="804" width="1" height="1" fill="rgb(117,117,117)"/><rect x="189" y="772" width="2" height="2" fill="rgb(85,85,85)"/><rect x="1384" y="666" width="1" height="1" fill="rgb(89,89,89)"/><rect x="952" y="333" width="2" height="2" fill="rgb(104,104,104)"/><rect x="940" y="986" width="2" height="2" fill="rgb(110,110,110)"/><rect x="406" y="845" width="2" height="2" fill="rgb(101,101,101)"/><rect x="1265" y="286" width="2" height="2" fill="rgb(111,111,96)"/><rect x="835" y="958" width="1" height="1" fill="rgb(108,108,108)"/><rect x="383" y="997" width="2" height="2" fill="rgb(112,112,112)"/><rect x="1064" y="695" width="2" height="2" fill="rgb(96,96,96)"/><rect x="1044" y="799" width="2" height="2" fill="rgb(125,125,125)"/><rect x="499" y="536" width="2" height="2" fill="rgb(116,116,116)"/><rect x="592" y="688" width="2" height="2" fill="rgb(102,102,102)"/><rect x="909" y="693" width="2" height="2" fill="rgb(114,114,114)"/><rect x="869" y="583" width="1" height="1" fill="rgb(97,97,97)"/><rect x="1037" y="447" width="2" height="2" fill="rgb(115,115,115)"/><rect x="742" y="555" width="1" height="1" fill="rgb(101,101,101)"/><rect x="609" y="954" width="1" height="1" fill="rgb(114,114,114)"/><rect x="408" y="304" width="2" height="2" fill="rgb(101,101,101)"/><rect x="1391" y="732" width="2" height="2" fill="rgb(100,100,100)"/><rect x="691" y="289" width="1" height="1" fill="rgb(112,112,112)"/><rect x="265" y="902" width="1" height="1" fill="rgb(95,95,95)"/><rect x="1280" y="770" width="2" height="2" fill="rgb(87,87,87)"/><rect x="796" y="296" width="2" height="2" fill="rgb(119,119,119)"/><rect x="1100" y="974" width="1" height="1" fill="rgb(103,103,103)"/><rect x="155" y="718" width="1" height="1" fill="rgb(126,126,111)"/><rect x="680" y="1054" width="2" height="2" fill="rgb(130,130,115)"/><rect x="392" y="768" width="2" height="2" fill="rgb(111,111,111)"/><rect x="899" y="753" width="2" height="2" fill="rgb(108,108,108)"/><rect x="182" y="271" width="2" height="2" fill="rgb(118,118,118)"/><rect x="530" y="599" width="1" height="1" fill="rgb(116,116,116)"/><rect x="531" y="932" width="1" height="1" fill="rgb(114,114,114)"/><rect x="934" y="795" width="1" height="1" fill="rgb(123,123,123)"/><rect x="785" y="731" width="1" height="1" fill="rgb(81,111,106)"/><rect x="275" y="820" width="2" height="2" fill="rgb(122,122,107)"/><rect x="329" y="403" width="2" height="2" fill="rgb(124,124,124)"/><rect x="213" y="1044" width="2" height="2" fill="rgb(87,87,87)"/><rect x="835" y="1004" width="2" height="2" fill="rgb(96,96,96)"/><rect x="307" y="796" width="1" height="1" fill="rgb(85,85,85)"/><rect x="586" y="352" width="2" height="2" fill="rgb(102,102,102)"/><rect x="971" y="439" width="2" height="2" fill="rgb(109,109,109)"/><rect x="433" y="346" width="1" height="1" fill="rgb(96,96,96)"/><rect x="408" y="622" width="1" height="1" fill="rgb(92,92,92)"/><rect x="1337" y="657" width="2" height="2" fill="rgb(116,116,116)"/><rect x="386" y="836" width="1" height="1" fill="rgb(125,125,110)"/><rect x="828" y="522" width="1" height="1" fill="rgb(89,89,89)"/><rect x="779" y="782" width="2" height="2" fill="rgb(91,91,91)"/><rect x="708" y="565" width="2" height="2" fill="rgb(101,101,101)"/><rect x="909" y="978" width="2" height="2" fill="rgb(104,104,104)"/><rect x="954" y="437" width="1" height="1" fill="rgb(124,124,124)"/><rect x="195" y="1022" width="2" height="2" fill="rgb(121,121,121)"/><rect x="307" y="713" width="2" height="2" fill="rgb(78,108,103)"/><rect x="1377" y="639" width="2" height="2" fill="rgb(120,120,120)"/><rect x="1148" y="837" width="2" height="2" fill="rgb(86,116,111)"/><rect x="515" y="998" width="2" height="2" fill="rgb(89,89,89)"/><rect x="582" y="429" width="2" height="2" fill="rgb(108,108,108)"/><rect x="1342" y="665" width="1" height="1" fill="rgb(121,121,121)"/><rect x="657" y="624" width="2" height="2" fill="rgb(91,91,91)"/><rect x="1092" y="840" width="2" height="2" fill="rgb(123,123,123)"/><rect x="905" y="1046" width="2" height="2" fill="rgb(96,96,96)"/><rect x="826" y="357" width="1" height="1" fill="rgb(124,124,124)"/><rect x="185" y="1000" width="1" height="1" fill="rgb(93,93,93)"/><rect x="284" y="546" width="2" height="2" fill="rgb(105,105,105)"/><rect x="1098" y="760" width="2" height="2" fill="rgb(124,124,109)"/><rect x="592" y="715" width="2" height="2" fill="rgb(109,109,94)"/><rect x="642" y="842" width="1" height="1" fill="rgb(99,129,124)"/><rect x="569" y="986" width="1" height="1" fill="rgb(111,111,111)"/><rect x="809" y="579" width="2" height="2" fill="rgb(98,98,98)"/><rect x="1061" y="616" width="1" height="1" fill="rgb(93,93,93)"/><rect x="1299" y="329" width="1" height="1" fill="rgb(115,115,115)"/><rect x="370" y="918" width="2" height="2" fill="rgb(106,106,106)"/><rect x="1260" y="346" width="1" height="1" fill="rgb(117,117,117)"/><rect x="1367" y="424" width="1" height="1" fill="rgb(102,102,102)"/><rect x="417" y="414" width="1" height="1" fill="rgb(115,115,115)"/><rect x="297" y="1060" width="2" height="2" fill="rgb(106,106,106)"/><rect x="597" y="289" width="2" height="2" fill="rgb(92,92,77)"/><rect x="425" y="821" width="2" height="2" fill="rgb(105,105,105)"/><rect x="856" y="621" width="2" height="2" fill="rgb(107,107,107)"/><rect x="401" y="639" width="2" height="2" fill="rgb(121,121,121)"/><rect x="794" y="593" width="1" height="1" fill="rgb(85,85,85)"/><rect x="363" y="363" width="2" height="2" fill="rgb(115,115,115)"/><rect x="331" y="891" width="2" height="2" fill="rgb(110,110,110)"/><rect x="751" y="700" width="2" height="2" fill="rgb(122,122,122)"/><rect x="726" y="323" width="2" height="2" fill="rgb(121,121,121)"/><rect x="1285" y="1010" width="2" height="2" fill="rgb(92,92,92)"/><rect x="221" y="968" width="2" height="2" fill="rgb(114,114,114)"/><rect x="279" y="471" width="2" height="2" fill="rgb(93,93,93)"/><rect x="711" y="697" width="1" height="1" fill="rgb(118,118,118)"/><rect x="976" y="874" width="2" height="2" fill="rgb(88,88,88)"/><rect x="570" y="408" width="2" height="2" fill="rgb(99,129,124)"/><rect x="605" y="966" width="1" height="1" fill="rgb(104,104,104)"/><rect x="1202" y="524" width="2" height="2" fill="rgb(108,108,108)"/><rect x="1041" y="479" width="2" height="2" fill="rgb(100,100,100)"/><rect x="629" y="418" width="2" height="2" fill="rgb(110,110,110)"/><rect x="920" y="368" width="2" height="2" fill="rgb(105,135,130)"/><rect x="175" y="945" width="2" height="2" fill="rgb(86,86,86)"/><rect x="585" y="343" width="2" height="2" fill="rgb(120,120,120)"/><rect x="1122" y="327" width="2" height="2" fill="rgb(102,102,102)"/><rect x="593" y="956" width="2" height="2" fill="rgb(95,95,95)"/><rect x="1172" y="453" width="2" height="2" fill="rgb(105,105,105)"/><rect x="444" y="434" width="2" height="2" fill="rgb(112,112,112)"/><rect x="1111" y="612" width="2" height="2" fill="rgb(105,105,90)"/><rect x="1311" y="549" width="1" height="1" fill="rgb(112,112,112)"/><rect x="389" y="964" width="2" height="2" fill="rgb(101,101,101)"/><rect x="314" y="807" width="2" height="2" fill="rgb(101,101,101)"/><rect x="175" y="788" width="2" height="2" fill="rgb(115,115,115)"/><rect x="1251" y="524" width="2" height="2" fill="rgb(88,88,88)"/><rect x="959" y="747" width="1" height="1" fill="rgb(123,123,123)"/><rect x="223" y="487" width="2" height="2" fill="rgb(120,120,120)"/><rect x="969" y="507" width="2" height="2" fill="rgb(98,128,123)"/><rect x="211" y="828" width="2" height="2" fill="rgb(116,116,116)"/><rect x="1384" y="809" width="2" height="2" fill="rgb(92,92,92)"/><rect x="568" y="687" width="2" height="2" fill="rgb(96,96,96)"/><rect x="567" y="426" width="2" height="2" fill="rgb(117,117,117)"/><rect x="475" y="890" width="2" height="2" fill="rgb(115,115,115)"/><rect x="734" y="551" width="2" height="2" fill="rgb(96,96,96)"/><rect x="486" y="727" width="2" height="2" fill="rgb(125,125,125)"/><rect x="518" y="699" width="2" height="2" fill="rgb(105,105,105)"/><rect x="963" y="382" width="2" height="2" fill="rgb(103,103,103)"/><rect x="1371" y="284" width="2" height="2" fill="rgb(103,103,88)"/><rect x="363" y="777" width="2" height="2" fill="rgb(109,109,109)"/><rect x="608" y="997" width="2" height="2" fill="rgb(106,106,106)"/><rect x="626" y="962" width="1" height="1" fill="rgb(90,90,90)"/><rect x="1230" y="542" width="1" height="1" fill="rgb(111,111,111)"/><rect x="188" y="759" width="2" height="2" fill="rgb(89,89,89)"/><rect x="276" y="448" width="2" height="2" fill="rgb(92,92,92)"/><rect x="678" y="749" width="1" height="1" fill="rgb(125,125,125)"/><rect x="282" y="474" width="2" height="2" fill="rgb(89,89,89)"/><rect x="273" y="564" width="1" height="1" fill="rgb(116,116,116)"/><rect x="260" y="904" width="2" height="2" fill="rgb(108,108,108)"/><rect x="964" y="419" width="2" height="2" fill="rgb(103,103,103)"/><rect x="1136" y="898" width="2" height="2" fill="rgb(85,85,85)"/><rect x="988" y="467" width="2" height="2" fill="rgb(115,115,115)"/><rect x="164" y="764" width="2" height="2" fill="rgb(120,120,120)"/><rect x="1002" y="1040" width="2" height="2" fill="rgb(88,118,113)"/><rect x="174" y="582" width="2" height="2" fill="rgb(110,110,110)"/><rect x="586" y="907" width="2" height="2" fill="rgb(97,97,97)"/><rect x="657" y="359" width="2" height="2" fill="rgb(103,103,103)"/><rect x="577" y="274" width="2" height="2" fill="rgb(116,116,116)"/><rect x="991" y="776" width="2" height="2" fill="rgb(111,111,111)"/><rect x="437" y="807" width="2" height="2" fill="rgb(118,118,118)"/><rect x="705" y="401" width="1" height="1" fill="rgb(125,125,125)"/><rect x="949" y="731" width="2" height="2" fill="rgb(123,123,123)"/><rect x="1251" y="990" width="1" height="1" fill="rgb(93,93,93)"/><rect x="288" y="371" width="2" height="2" fill="rgb(109,109,109)"/><rect x="1226" y="873" width="1" height="1" fill="rgb(111,111,111)"/><rect x="494" y="1066" width="2" height="2" fill="rgb(104,104,104)"/><rect x="581" y="853" width="2" height="2" fill="rgb(125,125,110)"/><rect x="1088" y="491" width="2" height="2" fill="rgb(112,112,97)"/><rect x="215" y="802" width="2" height="2" fill="rgb(97,97,97)"/><rect x="1200" y="667" width="2" height="2" fill="rgb(116,116,101)"/><rect x="1195" y="278" width="1" height="1" fill="rgb(119,119,119)"/><rect x="1022" y="946" width="2" height="2" fill="rgb(109,109,109)"/><rect x="1039" y="318" width="2" height="2" fill="rgb(100,100,100)"/><rect x="1228" y="721" width="2" height="2" fill="rgb(124,124,124)"/><rect x="640" y="677" width="1" height="1" fill="rgb(101,101,101)"/><rect x="847" y="965" width="2" height="2" fill="rgb(98,98,98)"/><rect x="499" y="312" width="1" height="1" fill="rgb(122,122,122)"/><rect x="200" y="912" width="2" height="2" fill="rgb(117,117,117)"/><rect x="333" y="381" width="2" height="2" fill="rgb(103,103,103)"/><rect x="1104" y="289" width="2" height="2" fill="rgb(111,111,111)"/><rect x="523" y="561" width="2" height="2" fill="rgb(108,108,108)"/><rect x="986" y="327" width="1" height="1" fill="rgb(114,114,114)"/><rect x="654" y="521" width="2" height="2" fill="rgb(89,119,114)"/><rect x="605" y="843" width="2" height="2" fill="rgb(124,124,124)"/><rect x="267" y="976" width="1" height="1" fill="rgb(106,106,106)"/><rect x="597" y="929" width="2" height="2" fill="rgb(109,109,109)"/><rect x="961" y="351" width="1" height="1" fill="rgb(124,124,124)"/><rect x="483" y="889" width="2" height="2" fill="rgb(104,104,104)"/><rect x="1124" y="875" width="1" height="1" fill="rgb(75,105,100)"/><rect x="980" y="870" width="1" height="1" fill="rgb(122,122,122)"/><rect x="1351" y="284" width="2" height="2" fill="rgb(115,115,115)"/><rect x="568" y="669" width="2" height="2" fill="rgb(88,88,88)"/><rect x="604" y="797" width="2" height="2" fill="rgb(126,126,111)"/><rect x="1366" y="519" width="1" height="1" fill="rgb(110,110,110)"/><rect x="342" y="699" width="2" height="2" fill="rgb(117,117,117)"/><rect x="215" y="548" width="2" height="2" fill="rgb(107,107,92)"/><rect x="219" y="536" width="1" height="1" fill="rgb(92,92,92)"/><rect x="892" y="894" width="1" height="1" fill="rgb(125,125,125)"/><rect x="1290" y="1041" width="2" height="2" fill="rgb(118,118,118)"/><rect x="1274" y="631" width="2" height="2" fill="rgb(109,109,109)"/><rect x="291" y="927" width="2" height="2" fill="rgb(101,101,101)"/><rect x="713" y="355" width="1" height="1" fill="rgb(90,90,90)"/><rect x="415" y="871" width="2" height="2" fill="rgb(130,130,115)"/><rect x="925" y="493" width="2" height="2" fill="rgb(105,105,105)"/><rect x="227" y="673" width="1" height="1" fill="rgb(112,112,112)"/><rect x="700" y="665" width="2" height="2" fill="rgb(97,97,97)"/><rect x="477" y="394" width="2" height="2" fill="rgb(100,130,125)"/><rect x="521" y="354" width="2" height="2" fill="rgb(116,116,116)"/><rect x="878" y="338" width="1" height="1" fill="rgb(118,118,118)"/><rect x="358" y="982" width="1" height="1" fill="rgb(113,113,98)"/><rect x="967" y="690" width="1" height="1" fill="rgb(122,122,122)"/><rect x="910" y="296" width="2" height="2" fill="rgb(106,106,106)"/><rect x="1244" y="708" width="2" height="2" fill="rgb(92,92,92)"/><rect x="367" y="1022" width="2" height="2" fill="rgb(105,105,105)"/><rect x="847" y="682" width="1" height="1" fill="rgb(104,134,129)"/><rect x="1018" y="817" width="2" height="2" fill="rgb(96,96,96)"/><rect x="888" y="984" width="2" height="2" fill="rgb(95,95,95)"/><rect x="379" y="442" width="2" height="2" fill="rgb(85,85,85)"/><rect x="1232" y="792" width="2" height="2" fill="rgb(104,104,104)"/><rect x="375" y="918" width="1" height="1" fill="rgb(104,104,104)"/><rect x="1284" y="748" width="2" height="2" fill="rgb(93,93,93)"/><rect x="233" y="781" width="2" height="2" fill="rgb(94,94,94)"/><rect x="650" y="972" width="2" height="2" fill="rgb(95,95,95)"/><rect x="697" y="391" width="2" height="2" fill="rgb(85,85,85)"/><rect x="762" y="673" width="2" height="2" fill="rgb(95,95,95)"/><rect x="636" y="884" width="2" height="2" fill="rgb(109,109,109)"/><rect x="496" y="473" width="2" height="2" fill="rgb(87,87,87)"/><rect x="1094" y="339" width="1" height="1" fill="rgb(92,92,92)"/><rect x="1244" y="977" width="2" height="2" fill="rgb(91,121,116)"/><rect x="1062" y="1030" width="2" height="2" fill="rgb(100,100,100)"/><rect x="655" y="922" width="1" height="1" fill="rgb(102,102,87)"/><rect x="592" y="837" width="2" height="2" fill="rgb(86,86,86)"/><rect x="896" y="1035" width="1" height="1" fill="rgb(123,123,123)"/><rect x="946" y="797" width="2" height="2" fill="rgb(104,104,104)"/><rect x="490" y="1014" width="2" height="2" fill="rgb(123,123,123)"/><rect x="690" y="574" width="1" height="1" fill="rgb(118,118,118)"/><rect x="1122" y="524" width="2" height="2" fill="rgb(121,121,121)"/><rect x="1138" y="866" width="2" height="2" fill="rgb(112,112,112)"/><rect x="1173" y="880" width="2" height="2" fill="rgb(118,118,118)"/><rect x="748" y="932" width="2" height="2" fill="rgb(88,88,88)"/><rect x="337" y="845" width="1" height="1" fill="rgb(103,103,103)"/><rect x="978" y="584" width="2" height="2" fill="rgb(125,125,125)"/><rect x="486" y="886" width="1" height="1" fill="rgb(93,93,93)"/><rect x="1152" y="837" width="1" height="1" fill="rgb(106,106,91)"/><rect x="1295" y="722" width="1" height="1" fill="rgb(89,119,114)"/><rect x="345" y="599" width="2" height="2" fill="rgb(109,109,109)"/><rect x="498" y="403" width="2" height="2" fill="rgb(109,109,109)"/><rect x="502" y="849" width="2" height="2" fill="rgb(91,91,91)"/><rect x="864" y="518" width="2" height="2" fill="rgb(82,112,107)"/><rect x="611" y="416" width="1" height="1" fill="rgb(85,85,85)"/><rect x="436" y="624" width="2" height="2" fill="rgb(104,104,104)"/><rect x="650" y="596" width="2" height="2" fill="rgb(100,100,100)"/><rect x="234" y="629" width="2" height="2" fill="rgb(115,115,100)"/><rect x="626" y="382" width="2" height="2" fill="rgb(104,104,104)"/><rect x="1331" y="942" width="1" height="1" fill="rgb(101,101,101)"/><rect x="1232" y="1021" width="2" height="2" fill="rgb(108,138,133)"/><rect x="1120" y="587" width="1" height="1" fill="rgb(93,93,78)"/><rect x="430" y="586" width="2" height="2" fill="rgb(118,118,103)"/><rect x="646" y="892" width="2" height="2" fill="rgb(102,102,102)"/><rect x="1010" y="388" width="1" height="1" fill="rgb(115,115,100)"/><rect x="551" y="965" width="2" height="2" fill="rgb(87,87,87)"/><rect x="350" y="677" width="2" height="2" fill="rgb(103,103,103)"/><rect x="929" y="636" width="2" height="2" fill="rgb(111,111,111)"/><rect x="1188" y="480" width="2" height="2" fill="rgb(112,112,97)"/><rect x="884" y="1011" width="1" height="1" fill="rgb(111,111,111)"/><rect x="1084" y="746" width="2" height="2" fill="rgb(117,117,117)"/><rect x="1169" y="431" width="2" height="2" fill="rgb(119,119,119)"/><rect x="557" y="661" width="2" height="2" fill="rgb(124,124,109)"/><rect x="156" y="993" width="2" height="2" fill="rgb(96,96,96)"/><rect x="469" y="840" width="2" height="2" fill="rgb(119,119,119)"/><rect x="629" y="315" width="2" height="2" fill="rgb(85,85,85)"/><rect x="162" y="534" width="2" height="2" fill="rgb(91,91,91)"/><rect x="624" y="452" width="2" height="2" fill="rgb(106,106,106)"/><rect x="704" y="322" width="1" height="1" fill="rgb(106,106,106)"/><rect x="433" y="976" width="2" height="2" fill="rgb(88,88,88)"/><rect x="259" y="1013" width="2" height="2" fill="rgb(121,121,121)"/><rect x="249" y="302" width="1" height="1" fill="rgb(121,121,121)"/><rect x="973" y="561" width="1" height="1" fill="rgb(109,109,109)"/><rect x="1065" y="1002" width="2" height="2" fill="rgb(120,120,120)"/><rect x="359" y="542" width="2" height="2" fill="rgb(90,90,90)"/><rect x="1195" y="490" width="2" height="2" fill="rgb(113,113,113)"/><rect x="1099" y="270" width="2" height="2" fill="rgb(127,127,112)"/><rect x="1175" y="557" width="2" height="2" fill="rgb(100,100,100)"/><rect x="1251" y="293" width="2" height="2" fill="rgb(87,87,87)"/><rect x="388" y="751" width="1" height="1" fill="rgb(124,124,124)"/><rect x="365" y="455" width="2" height="2" fill="rgb(112,112,112)"/><rect x="898" y="485" width="2" height="2" fill="rgb(105,105,105)"/><rect x="1056" y="460" width="2" height="2" fill="rgb(81,111,106)"/><rect x="1080" y="744" width="2" height="2" fill="rgb(92,92,92)"/><rect x="1339" y="569" width="2" height="2" fill="rgb(111,111,111)"/><rect x="899" y="1021" width="2" height="2" fill="rgb(93,93,93)"/><rect x="984" y="621" width="1" height="1" fill="rgb(107,107,107)"/><rect x="520" y="1000" width="2" height="2" fill="rgb(109,109,109)"/><rect x="898" y="453" width="1" height="1" fill="rgb(111,111,111)"/><rect x="506" y="912" width="2" height="2" fill="rgb(107,107,107)"/><rect x="942" y="836" width="2" height="2" fill="rgb(115,115,115)"/><rect x="1258" y="798" width="2" height="2" fill="rgb(111,111,111)"/><rect x="1114" y="620" width="2" height="2" fill="rgb(95,95,95)"/><rect x="454" y="742" width="2" height="2" fill="rgb(114,114,114)"/><rect x="862" y="320" width="2" height="2" fill="rgb(87,87,87)"/><rect x="1019" y="956" width="2" height="2" fill="rgb(94,94,94)"/><rect x="523" y="942" width="2" height="2" fill="rgb(91,91,91)"/><rect x="1040" y="719" width="2" height="2" fill="rgb(111,111,111)"/><rect x="1348" y="1024" width="1" height="1" fill="rgb(98,98,98)"/><rect x="930" y="941" width="1" height="1" fill="rgb(109,109,109)"/><rect x="1274" y="870" width="2" height="2" fill="rgb(98,98,98)"/><rect x="776" y="381" width="2" height="2" fill="rgb(107,107,92)"/><rect x="1340" y="440" width="2" height="2" fill="rgb(120,120,120)"/><rect x="309" y="311" width="2" height="2" fill="rgb(85,85,85)"/><rect x="478" y="584" width="2" height="2" fill="rgb(120,120,120)"/><rect x="272" y="473" width="1" height="1" fill="rgb(127,127,112)"/><rect x="1047" y="618" width="2" height="2" fill="rgb(113,113,113)"/><rect x="687" y="880" width="2" height="2" fill="rgb(115,115,115)"/><rect x="1141" y="451" width="2" height="2" fill="rgb(92,92,92)"/><rect x="569" y="923" width="1" height="1" fill="rgb(102,102,102)"/><rect x="849" y="979" width="2" height="2" fill="rgb(99,99,99)"/><rect x="1327" y="576" width="2" height="2" fill="rgb(99,99,99)"/><rect x="943" y="534" width="2" height="2" fill="rgb(102,132,127)"/><rect x="309" y="538" width="2" height="2" fill="rgb(108,108,108)"/><rect x="794" y="354" width="2" height="2" fill="rgb(111,111,111)"/><rect x="1046" y="543" width="2" height="2" fill="rgb(94,94,94)"/><rect x="1388" y="543" width="2" height="2" fill="rgb(111,111,111)"/><rect x="933" y="307" width="2" height="2" fill="rgb(124,124,124)"/><rect x="653" y="389" width="2" height="2" fill="rgb(92,92,77)"/><rect x="257" y="677" width="2" height="2" fill="rgb(91,91,91)"/><rect x="1272" y="779" width="2" height="2" fill="rgb(97,97,97)"/><rect x="303" y="481" width="1" height="1" fill="rgb(110,110,95)"/><rect x="369" y="912" width="2" height="2" fill="rgb(102,102,102)"/><rect x="673" y="657" width="2" height="2" fill="rgb(108,108,108)"/><rect x="1262" y="1045" width="2" height="2" fill="rgb(93,93,93)"/><rect x="284" y="886" width="1" height="1" fill="rgb(111,111,111)"/><rect x="986" y="619" width="2" height="2" fill="rgb(121,121,121)"/><rect x="699" y="1052" width="2" height="2" fill="rgb(104,104,104)"/><rect x="343" y="666" width="2" height="2" fill="rgb(93,93,93)"/><rect x="1001" y="865" width="2" height="2" fill="rgb(104,104,89)"/><rect x="855" y="849" width="1" height="1" fill="rgb(98,98,98)"/><rect x="984" y="446" width="2" height="2" fill="rgb(120,120,120)"/><rect x="1045" y="982" width="2" height="2" fill="rgb(89,89,89)"/><rect x="995" y="530" width="1" height="1" fill="rgb(95,125,120)"/><rect x="468" y="717" width="2" height="2" fill="rgb(102,132,127)"/><rect x="1232" y="854" width="2" height="2" fill="rgb(89,89,89)"/><rect x="233" y="399" width="2" height="2" fill="rgb(104,104,104)"/><rect x="213" y="461" width="1" height="1" fill="rgb(107,107,107)"/><rect x="693" y="437" width="1" height="1" fill="rgb(121,121,106)"/><rect x="846" y="750" width="2" height="2" fill="rgb(93,93,93)"/><rect x="821" y="631" width="1" height="1" fill="rgb(110,110,110)"/><rect x="775" y="433" width="2" height="2" fill="rgb(105,105,105)"/><rect x="366" y="867" width="2" height="2" fill="rgb(116,116,101)"/><rect x="154" y="300" width="2" height="2" fill="rgb(105,105,90)"/><rect x="1317" y="936" width="2" height="2" fill="rgb(124,124,124)"/><rect x="205" y="419" width="2" height="2" fill="rgb(109,109,94)"/><rect x="1125" y="463" width="2" height="2" fill="rgb(88,88,88)"/><rect x="728" y="849" width="2" height="2" fill="rgb(98,98,98)"/><rect x="1108" y="1045" width="1" height="1" fill="rgb(122,122,122)"/><rect x="1006" y="412" width="1" height="1" fill="rgb(128,128,113)"/><rect x="1346" y="699" width="1" height="1" fill="rgb(106,106,106)"/><rect x="1150" y="537" width="2" height="2" fill="rgb(99,99,99)"/><rect x="1265" y="873" width="2" height="2" fill="rgb(115,115,115)"/><rect x="504" y="665" width="2" height="2" fill="rgb(89,89,89)"/><rect x="414" y="890" width="2" height="2" fill="rgb(113,113,113)"/><rect x="676" y="837" width="2" height="2" fill="rgb(113,113,113)"/><rect x="913" y="306" width="2" height="2" fill="rgb(92,92,92)"/><rect x="782" y="596" width="1" height="1" fill="rgb(125,125,125)"/><rect x="642" y="380" width="2" height="2" fill="rgb(97,97,97)"/><rect x="157" y="871" width="1" height="1" fill="rgb(89,89,89)"/><rect x="354" y="812" width="1" height="1" fill="rgb(126,126,111)"/><rect x="357" y="890" width="1" height="1" fill="rgb(124,124,109)"/><rect x="729" y="1023" width="1" height="1" fill="rgb(122,122,122)"/><rect x="1144" y="856" width="2" height="2" fill="rgb(93,93,93)"/><rect x="1300" y="761" width="2" height="2" fill="rgb(120,120,120)"/><rect x="385" y="1046" width="1" height="1" fill="rgb(105,105,105)"/><rect x="337" y="730" width="2" height="2" fill="rgb(110,110,110)"/><rect x="467" y="825" width="2" height="2" fill="rgb(106,106,106)"/><rect x="1030" y="709" width="2" height="2" fill="rgb(103,103,88)"/><rect x="875" y="359" width="2" height="2" fill="rgb(123,123,108)"/><rect x="257" y="499" width="1" height="1" fill="rgb(123,123,123)"/><rect x="804" y="823" width="2" height="2" fill="rgb(114,114,114)"/><rect x="1264" y="401" width="2" height="2" fill="rgb(109,109,109)"/><rect x="1250" y="348" width="2" height="2" fill="rgb(110,140,135)"/><rect x="838" y="862" width="1" height="1" fill="rgb(91,91,91)"/><rect x="637" y="273" width="2" height="2" fill="rgb(108,108,93)"/><rect x="314" y="986" width="2" height="2" fill="rgb(122,122,122)"/><rect x="1125" y="1065" width="1" height="1" fill="rgb(99,99,99)"/><rect x="1188" y="281" width="2" height="2" fill="rgb(116,116,116)"/><rect x="1039" y="826" width="2" height="2" fill="rgb(91,91,76)"/><rect x="266" y="412" width="2" height="2" fill="rgb(95,95,80)"/><rect x="591" y="504" width="2" height="2" fill="rgb(106,106,106)"/><rect x="1017" y="521" width="2" height="2" fill="rgb(108,108,108)"/><rect x="1064" y="473" width="2" height="2" fill="rgb(125,125,125)"/><rect x="796" y="515" width="2" height="2" fill="rgb(114,114,114)"/><rect x="848" y="663" width="1" height="1" fill="rgb(96,96,96)"/><rect x="749" y="732" width="2" height="2" fill="rgb(97,97,97)"/><rect x="868" y="615" width="2" height="2" fill="rgb(93,93,93)"/><rect x="824" y="1015" width="1" height="1" fill="rgb(96,96,96)"/><rect x="755" y="855" width="2" height="2" fill="rgb(100,130,125)"/><rect x="1367" y="837" width="2" height="2" fill="rgb(99,129,124)"/><rect x="1273" y="800" width="2" height="2" fill="rgb(112,112,112)"/><rect x="866" y="905" width="2" height="2" fill="rgb(106,136,131)"/><rect x="167" y="624" width="2" height="2" fill="rgb(123,123,123)"/><rect x="648" y="751" width="2" height="2" fill="rgb(120,120,120)"/><rect x="1025" y="336" width="1" height="1" fill="rgb(125,125,125)"/><rect x="1208" y="902" width="2" height="2" fill="rgb(92,92,92)"/><rect x="181" y="667" width="2" height="2" fill="rgb(94,94,79)"/><rect x="606" y="293" width="2" height="2" fill="rgb(122,122,122)"/><rect x="1198" y="867" width="2" height="2" fill="rgb(108,108,108)"/><rect x="1180" y="273" width="1" height="1" fill="rgb(117,117,117)"/><rect x="334" y="544" width="2" height="2" fill="rgb(100,100,100)"/><rect x="1320" y="544" width="2" height="2" fill="rgb(99,99,84)"/><rect x="203" y="346" width="2" height="2" fill="rgb(81,111,106)"/><rect x="549" y="591" width="1" height="1" fill="rgb(96,96,96)"/><rect x="1130" y="1054" width="1" height="1" fill="rgb(102,102,102)"/><rect x="1298" y="677" width="2" height="2" fill="rgb(94,94,94)"/><rect x="703" y="888" width="2" height="2" fill="rgb(123,123,123)"/><rect x="882" y="338" width="1" height="1" fill="rgb(96,96,96)"/><rect x="1307" y="518" width="1" height="1" fill="rgb(92,92,92)"/><rect x="1200" y="474" width="2" height="2" fill="rgb(85,85,85)"/><rect x="198" y="289" width="2" height="2" fill="rgb(93,93,93)"/><rect x="1069" y="697" width="1" height="1" fill="rgb(103,103,88)"/><rect x="950" y="938" width="2" height="2" fill="rgb(103,103,103)"/><rect x="341" y="1009" width="2" height="2" fill="rgb(100,100,85)"/><rect x="229" y="741" width="2" height="2" fill="rgb(97,97,82)"/><rect x="1081" y="454" width="2" height="2" fill="rgb(114,114,114)"/><rect x="369" y="358" width="2" height="2" fill="rgb(118,118,103)"/><rect x="427" y="683" width="2" height="2" fill="rgb(110,110,110)"/><rect x="517" y="926" width="2" height="2" fill="rgb(112,112,112)"/><rect x="1302" y="821" width="2" height="2" fill="rgb(116,116,116)"/><rect x="183" y="695" width="1" height="1" fill="rgb(77,107,102)"/><rect x="375" y="838" width="2" height="2" fill="rgb(90,120,115)"/><rect x="341" y="296" width="2" height="2" fill="rgb(100,100,100)"/><rect x="634" y="329" width="2" height="2" fill="rgb(118,118,118)"/><rect x="640" y="335" width="2" height="2" fill="rgb(100,100,100)"/><rect x="233" y="839" width="2" height="2" fill="rgb(113,113,113)"/><rect x="412" y="813" width="2" height="2" fill="rgb(91,91,91)"/><rect x="1169" y="528" width="2" height="2" fill="rgb(96,96,81)"/><rect x="852" y="447" width="1" height="1" fill="rgb(117,117,117)"/><rect x="453" y="892" width="2" height="2" fill="rgb(112,112,112)"/><rect x="1235" y="474" width="2" height="2" fill="rgb(113,113,113)"/><rect x="728" y="520" width="2" height="2" fill="rgb(103,103,103)"/><rect x="591" y="384" width="1" height="1" fill="rgb(125,125,125)"/><rect x="460" y="495" width="2" height="2" fill="rgb(112,112,112)"/><rect x="1352" y="830" width="2" height="2" fill="rgb(88,118,113)"/><rect x="567" y="543" width="2" height="2" fill="rgb(93,93,93)"/><rect x="552" y="445" width="1" height="1" fill="rgb(126,126,111)"/><rect x="520" y="477" width="2" height="2" fill="rgb(102,102,102)"/><rect x="579" y="347" width="1" height="1" fill="rgb(105,105,105)"/><rect x="259" y="965" width="1" height="1" fill="rgb(101,101,101)"/><rect x="631" y="906" width="2" height="2" fill="rgb(95,95,95)"/><rect x="231" y="781" width="2" height="2" fill="rgb(102,102,102)"/><rect x="1322" y="980" width="2" height="2" fill="rgb(100,100,100)"/><rect x="443" y="826" width="1" height="1" fill="rgb(93,93,93)"/><rect x="252" y="959" width="2" height="2" fill="rgb(109,109,109)"/><rect x="1080" y="534" width="2" height="2" fill="rgb(89,89,89)"/><rect x="635" y="1031" width="2" height="2" fill="rgb(103,103,88)"/><rect x="782" y="878" width="2" height="2" fill="rgb(118,118,103)"/><rect x="316" y="363" width="2" height="2" fill="rgb(126,126,111)"/><rect x="588" y="882" width="1" height="1" fill="rgb(111,111,111)"/><rect x="341" y="756" width="2" height="2" fill="rgb(102,102,102)"/><rect x="492" y="803" width="2" height="2" fill="rgb(85,85,85)"/><rect x="771" y="336" width="1" height="1" fill="rgb(95,95,95)"/><rect x="619" y="346" width="2" height="2" fill="rgb(79,109,104)"/><rect x="363" y="695" width="2" height="2" fill="rgb(99,99,99)"/><rect x="1240" y="623" width="2" height="2" fill="rgb(111,111,111)"/><rect x="591" y="409" width="1" height="1" fill="rgb(116,116,116)"/><rect x="1024" y="1028" width="2" height="2" fill="rgb(96,96,96)"/><rect x="233" y="449" width="2" height="2" fill="rgb(101,101,101)"/><rect x="1033" y="381" width="2" height="2" fill="rgb(123,123,123)"/><rect x="932" y="644" width="1" height="1" fill="rgb(114,144,139)"/><rect x="263" y="726" width="2" height="2" fill="rgb(117,117,117)"/><rect x="1289" y="1045" width="2" height="2" fill="rgb(118,118,118)"/><rect x="171" y="275" width="1" height="1" fill="rgb(125,125,125)"/><rect x="327" y="837" width="2" height="2" fill="rgb(110,140,135)"/><rect x="1132" y="599" width="1" height="1" fill="rgb(89,89,89)"/><rect x="253" y="897" width="2" height="2" fill="rgb(87,87,87)"/><rect x="569" y="817" width="2" height="2" fill="rgb(108,108,108)"/><rect x="1364" y="986" width="2" height="2" fill="rgb(109,109,109)"/><rect x="1092" y="847" width="2" height="2" fill="rgb(89,89,89)"/><rect x="830" y="726" width="2" height="2" fill="rgb(108,108,93)"/><rect x="768" y="782" width="2" height="2" fill="rgb(89,89,89)"/><rect x="182" y="384" width="2" height="2" fill="rgb(95,95,95)"/><rect x="540" y="689" width="2" height="2" fill="rgb(99,129,124)"/><rect x="201" y="884" width="2" height="2" fill="rgb(116,116,116)"/><rect x="1230" y="996" width="1" height="1" fill="rgb(106,106,106)"/><rect x="746" y="340" width="2" height="2" fill="rgb(98,98,98)"/><rect x="1306" y="626" width="2" height="2" fill="rgb(114,144,139)"/><rect x="1171" y="771" width="2" height="2" fill="rgb(99,99,99)"/><rect x="435" y="1048" width="1" height="1" fill="rgb(109,109,109)"/><rect x="790" y="622" width="2" height="2" fill="rgb(99,99,99)"/><rect x="1327" y="585" width="1" height="1" fill="rgb(105,105,105)"/><rect x="691" y="683" width="2" height="2" fill="rgb(101,101,101)"/><rect x="984" y="813" width="2" height="2" fill="rgb(104,104,104)"/><rect x="184" y="926" width="2" height="2" fill="rgb(118,118,118)"/><rect x="1151" y="410" width="2" height="2" fill="rgb(94,94,94)"/><rect x="890" y="496" width="2" height="2" fill="rgb(107,137,132)"/><rect x="316" y="1005" width="2" height="2" fill="rgb(91,91,91)"/><rect x="742" y="528" width="1" height="1" fill="rgb(96,96,96)"/><rect x="605" y="614" width="2" height="2" fill="rgb(93,93,93)"/><rect x="1008" y="1035" width="2" height="2" fill="rgb(93,93,78)"/><rect x="758" y="1001" width="2" height="2" fill="rgb(95,95,95)"/><rect x="314" y="962" width="2" height="2" fill="rgb(94,94,79)"/><rect x="266" y="711" width="2" height="2" fill="rgb(99,99,99)"/><rect x="423" y="629" width="2" height="2" fill="rgb(114,114,114)"/><rect x="737" y="312" width="2" height="2" fill="rgb(91,121,116)"/><rect x="1310" y="421" width="2" height="2" fill="rgb(118,118,103)"/><rect x="1060" y="338" width="2" height="2" fill="rgb(116,116,116)"/><rect x="452" y="882" width="2" height="2" fill="rgb(114,114,99)"/><rect x="370" y="932" width="2" height="2" fill="rgb(103,103,88)"/><rect x="1210" y="448" width="2" height="2" fill="rgb(122,122,122)"/><rect x="1267" y="281" width="2" height="2" fill="rgb(98,98,98)"/><rect x="551" y="857" width="2" height="2" fill="rgb(115,115,115)"/><rect x="1312" y="528" width="1" height="1" fill="rgb(114,114,99)"/><rect x="541" y="968" width="2" height="2" fill="rgb(87,87,87)"/><rect x="598" y="1006" width="2" height="2" fill="rgb(106,106,106)"/><rect x="1188" y="1036" width="1" height="1" fill="rgb(124,124,124)"/><rect x="1023" y="929" width="2" height="2" fill="rgb(108,108,108)"/><rect x="1317" y="682" width="2" height="2" fill="rgb(98,98,98)"/><rect x="363" y="405" width="2" height="2" fill="rgb(99,99,99)"/><rect x="1024" y="816" width="2" height="2" fill="rgb(114,144,139)"/><rect x="332" y="769" width="1" height="1" fill="rgb(98,98,98)"/><rect x="670" y="978" width="2" height="2" fill="rgb(106,106,91)"/><rect x="1012" y="699" width="1" height="1" fill="rgb(89,89,89)"/><rect x="688" y="982" width="2" height="2" fill="rgb(120,120,120)"/><rect x="615" y="770" width="2" height="2" fill="rgb(104,104,104)"/><rect x="839" y="587" width="2" height="2" fill="rgb(114,114,114)"/><rect x="912" y="707" width="2" height="2" fill="rgb(92,92,92)"/><rect x="389" y="763" width="2" height="2" fill="rgb(112,112,112)"/><rect x="1336" y="431" width="2" height="2" fill="rgb(120,120,120)"/><rect x="772" y="1027" width="2" height="2" fill="rgb(94,124,119)"/><rect x="589" y="1048" width="2" height="2" fill="rgb(88,88,88)"/><rect x="1094" y="970" width="2" height="2" fill="rgb(110,110,110)"/><rect x="922" y="973" width="2" height="2" fill="rgb(94,94,94)"/><rect x="1113" y="415" width="2" height="2" fill="rgb(123,123,123)"/><rect x="1242" y="394" width="2" height="2" fill="rgb(113,113,113)"/><rect x="218" y="407" width="2" height="2" fill="rgb(106,106,106)"/><rect x="1378" y="1000" width="2" height="2" fill="rgb(96,96,96)"/><rect x="548" y="911" width="2" height="2" fill="rgb(106,106,106)"/><rect x="573" y="417" width="2" height="2" fill="rgb(115,145,140)"/><rect x="972" y="1000" width="2" height="2" fill="rgb(116,116,116)"/><rect x="918" y="550" width="2" height="2" fill="rgb(115,115,115)"/><rect x="728" y="824" width="2" height="2" fill="rgb(123,123,108)"/><rect x="182" y="604" width="2" height="2" fill="rgb(109,109,109)"/><rect x="425" y="660" width="2" height="2" fill="rgb(107,107,107)"/><rect x="431" y="785" width="2" height="2" fill="rgb(99,99,99)"/><rect x="241" y="919" width="2" height="2" fill="rgb(84,114,109)"/><rect x="1312" y="361" width="1" height="1" fill="rgb(86,86,86)"/><rect x="258" y="398" width="2" height="2" fill="rgb(96,96,96)"/><rect x="386" y="594" width="2" height="2" fill="rgb(121,121,121)"/><rect x="390" y="679" width="2" height="2" fill="rgb(99,99,99)"/><rect x="1150" y="645" width="2" height="2" fill="rgb(119,119,119)"/><rect x="913" y="922" width="1" height="1" fill="rgb(112,112,112)"/><rect x="993" y="980" width="1" height="1" fill="rgb(106,106,106)"/><rect x="875" y="325" width="2" height="2" fill="rgb(125,125,125)"/><rect x="1371" y="680" width="2" height="2" fill="rgb(103,103,103)"/><rect x="1090" y="433" width="2" height="2" fill="rgb(109,139,134)"/><rect x="777" y="601" width="2" height="2" fill="rgb(98,98,98)"/><rect x="1144" y="985" width="2" height="2" fill="rgb(104,104,104)"/><rect x="914" y="922" width="2" height="2" fill="rgb(118,118,118)"/><rect x="590" y="274" width="1" height="1" fill="rgb(86,116,111)"/><rect x="612" y="828" width="2" height="2" fill="rgb(124,124,124)"/><rect x="429" y="963" width="2" height="2" fill="rgb(109,109,109)"/><rect x="1341" y="377" width="2" height="2" fill="rgb(108,108,108)"/><rect x="776" y="995" width="2" height="2" fill="rgb(86,86,86)"/><rect x="1385" y="719" width="2" height="2" fill="rgb(93,93,93)"/><rect x="1122" y="984" width="2" height="2" fill="rgb(93,93,93)"/><rect x="689" y="972" width="2" height="2" fill="rgb(118,118,118)"/><rect x="974" y="826" width="2" height="2" fill="rgb(117,117,117)"/><rect x="795" y="938" width="2" height="2" fill="rgb(116,116,101)"/><rect x="757" y="655" width="2" height="2" fill="rgb(94,124,119)"/><rect x="150" y="590" width="1" height="1" fill="rgb(109,139,134)"/><rect x="934" y="616" width="2" height="2" fill="rgb(107,107,107)"/><rect x="816" y="541" width="1" height="1" fill="rgb(115,115,100)"/><rect x="1368" y="346" width="2" height="2" fill="rgb(88,88,88)"/><rect x="1125" y="482" width="2" height="2" fill="rgb(110,110,110)"/><rect x="189" y="450" width="1" height="1" fill="rgb(103,133,128)"/><rect x="1095" y="632" width="2" height="2" fill="rgb(110,110,110)"/><rect x="888" y="780" width="2" height="2" fill="rgb(125,125,125)"/><rect x="1252" y="747" width="2" height="2" fill="rgb(104,104,104)"/><rect x="242" y="959" width="1" height="1" fill="rgb(100,100,100)"/><rect x="443" y="717" width="2" height="2" fill="rgb(124,124,124)"/><rect x="774" y="868" width="1" height="1" fill="rgb(103,103,103)"/><rect x="737" y="587" width="2" height="2" fill="rgb(109,109,109)"/><rect x="1004" y="892" width="2" height="2" fill="rgb(104,134,129)"/><rect x="803" y="938" width="1" height="1" fill="rgb(125,125,125)"/><rect x="1291" y="560" width="2" height="2" fill="rgb(119,119,119)"/><rect x="940" y="618" width="1" height="1" fill="rgb(117,117,117)"/><rect x="267" y="407" width="2" height="2" fill="rgb(109,109,109)"/><rect x="275" y="610" width="2" height="2" fill="rgb(87,87,87)"/><rect x="1258" y="631" width="2" height="2" fill="rgb(100,100,100)"/><rect x="538" y="1009" width="2" height="2" fill="rgb(94,94,94)"/><rect x="177" y="962" width="2" height="2" fill="rgb(109,109,109)"/><rect x="873" y="926" width="2" height="2" fill="rgb(113,113,113)"/><rect x="546" y="799" width="1" height="1" fill="rgb(93,93,93)"/><rect x="201" y="982" width="1" height="1" fill="rgb(101,101,101)"/><rect x="1332" y="1049" width="2" height="2" fill="rgb(113,113,98)"/><rect x="1266" y="415" width="2" height="2" fill="rgb(106,106,106)"/><rect x="1265" y="357" width="2" height="2" fill="rgb(96,96,96)"/><rect x="917" y="497" width="2" height="2" fill="rgb(104,104,104)"/><rect x="692" y="405" width="2" height="2" fill="rgb(103,133,128)"/><rect x="358" y="687" width="2" height="2" fill="rgb(95,95,95)"/><rect x="886" y="979" width="2" height="2" fill="rgb(124,124,124)"/><rect x="565" y="432" width="2" height="2" fill="rgb(111,111,111)"/><rect x="660" y="1033" width="1" height="1" fill="rgb(112,112,112)"/><rect x="891" y="596" width="1" height="1" fill="rgb(99,99,99)"/><rect x="162" y="442" width="1" height="1" fill="rgb(92,92,92)"/><rect x="449" y="587" width="2" height="2" fill="rgb(114,114,114)"/><rect x="211" y="983" width="2" height="2" fill="rgb(109,139,134)"/><rect x="786" y="860" width="2" height="2" fill="rgb(114,114,114)"/><rect x="1137" y="565" width="2" height="2" fill="rgb(112,112,97)"/><rect x="237" y="483" width="2" height="2" fill="rgb(91,91,91)"/><rect x="842" y="553" width="2" height="2" fill="rgb(108,108,108)"/><rect x="584" y="1054" width="2" height="2" fill="rgb(94,94,94)"/><rect x="242" y="531" width="1" height="1" fill="rgb(106,106,91)"/><rect x="1164" y="602" width="2" height="2" fill="rgb(120,120,120)"/><rect x="435" y="276" width="2" height="2" fill="rgb(111,111,96)"/><rect x="938" y="996" width="2" height="2" fill="rgb(101,101,101)"/><rect x="906" y="740" width="2" height="2" fill="rgb(117,117,117)"/><rect x="970" y="388" width="2" height="2" fill="rgb(114,114,114)"/><rect x="1236" y="547" width="2" height="2" fill="rgb(103,103,103)"/><rect x="1296" y="857" width="2" height="2" fill="rgb(115,115,100)"/><rect x="952" y="1022" width="1" height="1" fill="rgb(115,115,100)"/><rect x="194" y="1056" width="2" height="2" fill="rgb(104,104,104)"/><rect x="1275" y="528" width="1" height="1" fill="rgb(107,107,107)"/><rect x="1021" y="950" width="1" height="1" fill="rgb(115,115,115)"/><rect x="829" y="1030" width="1" height="1" fill="rgb(86,86,86)"/><rect x="317" y="790" width="2" height="2" fill="rgb(87,87,87)"/><rect x="812" y="360" width="2" height="2" fill="rgb(90,90,75)"/><rect x="1136" y="832" width="2" height="2" fill="rgb(101,101,101)"/><rect x="857" y="959" width="1" height="1" fill="rgb(86,86,86)"/><rect x="1368" y="838" width="1" height="1" fill="rgb(93,93,93)"/><rect x="1273" y="320" width="1" height="1" fill="rgb(92,92,77)"/><rect x="847" y="693" width="2" height="2" fill="rgb(93,93,93)"/><rect x="692" y="280" width="2" height="2" fill="rgb(94,94,94)"/><rect x="299" y="621" width="1" height="1" fill="rgb(123,123,123)"/><rect x="951" y="366" width="2" height="2" fill="rgb(114,114,114)"/><rect x="827" y="535" width="2" height="2" fill="rgb(130,130,115)"/><rect x="1317" y="989" width="2" height="2" fill="rgb(124,124,124)"/><rect x="177" y="832" width="1" height="1" fill="rgb(101,101,101)"/><rect x="584" y="473" width="2" height="2" fill="rgb(121,121,121)"/><rect x="608" y="592" width="1" height="1" fill="rgb(114,114,114)"/><rect x="1088" y="1057" width="2" height="2" fill="rgb(97,97,97)"/><rect x="646" y="465" width="1" height="1" fill="rgb(88,88,88)"/><rect x="929" y="505" width="2" height="2" fill="rgb(94,94,94)"/><rect x="1376" y="485" width="2" height="2" fill="rgb(96,96,96)"/><rect x="599" y="1042" width="2" height="2" fill="rgb(100,100,100)"/><rect x="220" y="873" width="1" height="1" fill="rgb(86,86,86)"/><rect x="260" y="903" width="2" height="2" fill="rgb(87,87,87)"/><rect x="556" y="362" width="1" height="1" fill="rgb(92,122,117)"/><rect x="975" y="922" width="1" height="1" fill="rgb(90,90,90)"/><rect x="1325" y="993" width="1" height="1" fill="rgb(86,86,86)"/><rect x="319" y="525" width="2" height="2" fill="rgb(121,121,121)"/><rect x="898" y="406" width="2" height="2" fill="rgb(111,111,111)"/><rect x="250" y="925" width="2" height="2" fill="rgb(121,121,121)"/><rect x="1009" y="586" width="2" height="2" fill="rgb(85,85,85)"/><rect x="1008" y="886" width="2" height="2" fill="rgb(106,106,106)"/><rect x="313" y="563" width="2" height="2" fill="rgb(110,110,110)"/><rect x="482" y="934" width="2" height="2" fill="rgb(95,95,95)"/><rect x="482" y="864" width="2" height="2" fill="rgb(104,104,89)"/><rect x="842" y="1033" width="2" height="2" fill="rgb(91,91,91)"/><rect x="1083" y="758" width="2" height="2" fill="rgb(107,107,107)"/><rect x="1167" y="864" width="2" height="2" fill="rgb(92,92,77)"/><rect x="307" y="928" width="2" height="2" fill="rgb(108,108,108)"/><rect x="149" y="957" width="2" height="2" fill="rgb(114,114,99)"/><rect x="165" y="936" width="2" height="2" fill="rgb(121,121,121)"/><rect x="1296" y="700" width="2" height="2" fill="rgb(113,143,138)"/><rect x="749" y="483" width="2" height="2" fill="rgb(108,108,108)"/><rect x="1276" y="321" width="2" height="2" fill="rgb(106,106,91)"/><rect x="1198" y="393" width="1" height="1" fill="rgb(94,94,94)"/><rect x="427" y="967" width="2" height="2" fill="rgb(82,112,107)"/><rect x="1053" y="643" width="1" height="1" fill="rgb(119,119,119)"/><rect x="1137" y="902" width="2" height="2" fill="rgb(114,114,99)"/><rect x="667" y="497" width="2" height="2" fill="rgb(101,101,101)"/><rect x="840" y="820" width="1" height="1" fill="rgb(125,125,125)"/><rect x="232" y="561" width="2" height="2" fill="rgb(95,95,95)"/><rect x="343" y="944" width="2" height="2" fill="rgb(93,93,93)"/><rect x="1103" y="604" width="2" height="2" fill="rgb(90,90,90)"/><rect x="1151" y="542" width="2" height="2" fill="rgb(94,94,94)"/><rect x="1347" y="944" width="2" height="2" fill="rgb(97,97,97)"/><rect x="475" y="452" width="2" height="2" fill="rgb(89,89,89)"/><rect x="324" y="696" width="2" height="2" fill="rgb(120,120,120)"/><rect x="555" y="466" width="2" height="2" fill="rgb(92,92,92)"/><rect x="1211" y="559" width="1" height="1" fill="rgb(96,96,96)"/><rect x="1094" y="1050" width="2" height="2" fill="rgb(124,124,124)"/><rect x="850" y="786" width="2" height="2" fill="rgb(102,102,102)"/><rect x="346" y="439" width="2" height="2" fill="rgb(102,102,102)"/><rect x="1188" y="356" width="2" height="2" fill="rgb(87,87,87)"/><rect x="717" y="898" width="1" height="1" fill="rgb(88,88,88)"/><rect x="1066" y="347" width="2" height="2" fill="rgb(113,113,113)"/><rect x="1362" y="985" width="1" height="1" fill="rgb(125,125,125)"/><rect x="593" y="502" width="2" height="2" fill="rgb(99,99,99)"/><rect x="889" y="866" width="2" height="2" fill="rgb(114,114,114)"/><rect x="1370" y="588" width="2" height="2" fill="rgb(85,85,85)"/><rect x="598" y="445" width="2" height="2" fill="rgb(82,112,107)"/><rect x="1010" y="803" width="1" height="1" fill="rgb(96,96,96)"/><rect x="441" y="741" width="2" height="2" fill="rgb(102,102,102)"/><rect x="705" y="564" width="2" height="2" fill="rgb(123,123,123)"/><rect x="1025" y="921" width="2" height="2" fill="rgb(86,86,86)"/><rect x="932" y="417" width="2" height="2" fill="rgb(103,103,88)"/><rect x="1012" y="400" width="2" height="2" fill="rgb(119,119,119)"/><rect x="527" y="736" width="2" height="2" fill="rgb(101,101,86)"/><rect x="624" y="1009" width="2" height="2" fill="rgb(107,107,107)"/><rect x="1074" y="437" width="2" height="2" fill="rgb(120,120,120)"/><rect x="1196" y="392" width="2" height="2" fill="rgb(96,96,96)"/><rect x="891" y="440" width="2" height="2" fill="rgb(99,99,99)"/><rect x="927" y="277" width="2" height="2" fill="rgb(115,115,115)"/><rect x="964" y="1005" width="2" height="2" fill="rgb(105,105,105)"/><rect x="617" y="869" width="2" height="2" fill="rgb(100,100,100)"/><rect x="724" y="786" width="1" height="1" fill="rgb(95,95,95)"/><rect x="1178" y="757" width="1" height="1" fill="rgb(125,125,125)"/><rect x="1240" y="613" width="1" height="1" fill="rgb(96,96,81)"/><rect x="726" y="731" width="2" height="2" fill="rgb(129,129,114)"/><rect x="631" y="871" width="1" height="1" fill="rgb(120,120,105)"/><rect x="234" y="571" width="2" height="2" fill="rgb(88,88,88)"/><rect x="693" y="528" width="2" height="2" fill="rgb(88,88,88)"/><rect x="382" y="516" width="1" height="1" fill="rgb(93,93,93)"/><rect x="1347" y="719" width="2" height="2" fill="rgb(93,123,118)"/><rect x="1306" y="1039" width="2" height="2" fill="rgb(110,110,110)"/><rect x="1142" y="443" width="2" height="2" fill="rgb(98,98,98)"/><rect x="1105" y="600" width="2" height="2" fill="rgb(90,90,75)"/><rect x="994" y="899" width="2" height="2" fill="rgb(103,103,103)"/><rect x="299" y="796" width="2" height="2" fill="rgb(120,120,120)"/><rect x="1227" y="346" width="2" height="2" fill="rgb(120,120,120)"/><rect x="746" y="274" width="2" height="2" fill="rgb(103,103,103)"/><rect x="340" y="698" width="2" height="2" fill="rgb(90,90,90)"/><rect x="1007" y="593" width="1" height="1" fill="rgb(91,91,91)"/><rect x="946" y="430" width="2" height="2" fill="rgb(87,87,87)"/><rect x="1033" y="615" width="2" height="2" fill="rgb(98,98,98)"/><rect x="415" y="389" width="2" height="2" fill="rgb(101,101,86)"/><rect x="229" y="638" width="1" height="1" fill="rgb(113,113,113)"/><rect x="1241" y="741" width="2" height="2" fill="rgb(94,94,94)"/><rect x="255" y="939" width="2" height="2" fill="rgb(106,106,106)"/><rect x="1052" y="536" width="2" height="2" fill="rgb(90,90,90)"/><rect x="265" y="641" width="2" height="2" fill="rgb(91,91,76)"/><rect x="1304" y="862" width="2" height="2" fill="rgb(113,113,113)"/><rect x="1384" y="419" width="1" height="1" fill="rgb(90,90,90)"/><rect x="1324" y="724" width="1" height="1" fill="rgb(109,139,134)"/><rect x="1356" y="366" width="2" height="2" fill="rgb(122,122,122)"/><rect x="601" y="323" width="2" height="2" fill="rgb(120,120,120)"/><rect x="747" y="614" width="1" height="1" fill="rgb(110,110,95)"/><rect x="220" y="994" width="2" height="2" fill="rgb(100,100,85)"/><rect x="365" y="916" width="1" height="1" fill="rgb(87,87,87)"/><rect x="307" y="421" width="2" height="2" fill="rgb(108,108,93)"/><rect x="1232" y="760" width="1" height="1" fill="rgb(93,93,93)"/><rect x="1022" y="1039" width="2" height="2" fill="rgb(99,99,99)"/><rect x="843" y="774" width="2" height="2" fill="rgb(106,106,106)"/><rect x="1100" y="555" width="2" height="2" fill="rgb(125,125,125)"/><rect x="1185" y="729" width="2" height="2" fill="rgb(92,92,92)"/><rect x="878" y="878" width="2" height="2" fill="rgb(91,91,91)"/><rect x="770" y="290" width="2" height="2" fill="rgb(106,106,106)"/><rect x="160" y="355" width="2" height="2" fill="rgb(112,112,112)"/><rect x="803" y="579" width="2" height="2" fill="rgb(114,114,114)"/><rect x="867" y="906" width="1" height="1" fill="rgb(109,139,134)"/><rect x="1268" y="773" width="2" height="2" fill="rgb(89,89,89)"/><rect x="446" y="462" width="2" height="2" fill="rgb(117,117,117)"/><rect x="1163" y="820" width="2" height="2" fill="rgb(101,101,101)"/><rect x="991" y="427" width="1" height="1" fill="rgb(97,97,97)"/><rect x="756" y="910" width="2" height="2" fill="rgb(92,92,92)"/><rect x="1261" y="271" width="2" height="2" fill="rgb(116,116,101)"/><rect x="353" y="784" width="2" height="2" fill="rgb(92,92,92)"/><rect x="277" y="505" width="1" height="1" fill="rgb(109,109,109)"/><rect x="921" y="1046" width="2" height="2" fill="rgb(105,105,105)"/><rect x="321" y="1053" width="1" height="1" fill="rgb(112,112,112)"/><rect x="290" y="567" width="2" height="2" fill="rgb(116,116,116)"/><rect x="1144" y="727" width="2" height="2" fill="rgb(93,93,93)"/><rect x="530" y="488" width="2" height="2" fill="rgb(101,101,101)"/><rect x="300" y="829" width="2" height="2" fill="rgb(87,87,87)"/><rect x="1200" y="331" width="2" height="2" fill="rgb(85,85,85)"/><rect x="422" y="419" width="1" height="1" fill="rgb(90,90,90)"/><rect x="929" y="551" width="2" height="2" fill="rgb(102,102,102)"/><rect x="1052" y="312" width="2" height="2" fill="rgb(88,88,88)"/><rect x="424" y="754" width="2" height="2" fill="rgb(93,93,93)"/><rect x="215" y="851" width="2" height="2" fill="rgb(103,103,103)"/><rect x="962" y="292" width="2" height="2" fill="rgb(125,125,125)"/><rect x="1095" y="528" width="1" height="1" fill="rgb(99,99,84)"/><rect x="856" y="759" width="2" height="2" fill="rgb(100,100,100)"/><rect x="1094" y="370" width="2" height="2" fill="rgb(118,118,118)"/><rect x="1062" y="824" width="2" height="2" fill="rgb(99,99,99)"/><rect x="812" y="282" width="2" height="2" fill="rgb(113,113,113)"/><rect x="996" y="508" width="2" height="2" fill="rgb(112,112,112)"/><rect x="1282" y="291" width="1" height="1" fill="rgb(115,115,115)"/><rect x="1260" y="626" width="2" height="2" fill="rgb(106,136,131)"/><rect x="603" y="764" width="2" height="2" fill="rgb(85,85,85)"/><rect x="416" y="937" width="2" height="2" fill="rgb(107,107,92)"/><rect x="1312" y="301" width="1" height="1" fill="rgb(124,124,124)"/><rect x="1090" y="420" width="2" height="2" fill="rgb(111,111,111)"/><rect x="730" y="596" width="2" height="2" fill="rgb(116,116,101)"/><rect x="301" y="619" width="2" height="2" fill="rgb(111,111,111)"/><rect x="556" y="713" width="2" height="2" fill="rgb(97,97,97)"/><rect x="889" y="702" width="2" height="2" fill="rgb(107,107,107)"/><rect x="1342" y="684" width="1" height="1" fill="rgb(86,86,86)"/><rect x="326" y="884" width="2" height="2" fill="rgb(101,101,101)"/><rect x="954" y="669" width="2" height="2" fill="rgb(113,113,98)"/><rect x="735" y="970" width="1" height="1" fill="rgb(110,110,110)"/><rect x="343" y="373" width="2" height="2" fill="rgb(114,144,139)"/><rect x="214" y="961" width="2" height="2" fill="rgb(117,117,117)"/><rect x="634" y="719" width="2" height="2" fill="rgb(101,101,101)"/><rect x="275" y="505" width="2" height="2" fill="rgb(118,118,118)"/><rect x="583" y="493" width="2" height="2" fill="rgb(104,104,104)"/><rect x="910" y="410" width="1" height="1" fill="rgb(98,98,98)"/><rect x="525" y="711" width="2" height="2" fill="rgb(112,112,112)"/><rect x="867" y="404" width="1" height="1" fill="rgb(111,111,111)"/><rect x="687" y="1024" width="2" height="2" fill="rgb(96,96,96)"/><rect x="568" y="868" width="1" height="1" fill="rgb(87,87,87)"/><rect x="1212" y="938" width="2" height="2" fill="rgb(114,114,114)"/><rect x="593" y="944" width="2" height="2" fill="rgb(87,87,87)"/><rect x="549" y="489" width="1" height="1" fill="rgb(98,98,98)"/><rect x="778" y="589" width="2" height="2" fill="rgb(112,112,112)"/><rect x="230" y="498" width="2" height="2" fill="rgb(116,116,116)"/><rect x="184" y="652" width="2" height="2" fill="rgb(111,111,96)"/><rect x="596" y="524" width="2" height="2" fill="rgb(110,110,110)"/><rect x="1085" y="594" width="2" height="2" fill="rgb(92,92,77)"/><rect x="156" y="423" width="2" height="2" fill="rgb(112,112,112)"/><rect x="976" y="731" width="2" height="2" fill="rgb(116,116,101)"/><rect x="676" y="577" width="1" height="1" fill="rgb(118,118,118)"/><rect x="870" y="958" width="2" height="2" fill="rgb(107,107,107)"/><rect x="1200" y="653" width="2" height="2" fill="rgb(113,113,113)"/><rect x="893" y="524" width="2" height="2" fill="rgb(99,99,99)"/><rect x="1054" y="783" width="2" height="2" fill="rgb(96,126,121)"/><rect x="1051" y="453" width="2" height="2" fill="rgb(89,89,89)"/><rect x="296" y="611" width="2" height="2" fill="rgb(112,112,112)"/><rect x="367" y="325" width="1" height="1" fill="rgb(118,118,103)"/><rect x="1041" y="427" width="2" height="2" fill="rgb(86,86,86)"/><rect x="1238" y="787" width="2" height="2" fill="rgb(105,105,105)"/><rect x="758" y="533" width="2" height="2" fill="rgb(123,123,123)"/><rect x="598" y="550" width="2" height="2" fill="rgb(86,86,86)"/><rect x="1153" y="312" width="2" height="2" fill="rgb(110,110,110)"/><rect x="252" y="696" width="1" height="1" fill="rgb(104,104,104)"/><rect x="918" y="678" width="2" height="2" fill="rgb(125,125,110)"/><rect x="1347" y="371" width="1" height="1" fill="rgb(90,90,75)"/><rect x="1380" y="891" width="2" height="2" fill="rgb(104,104,104)"/><rect x="388" y="664" width="2" height="2" fill="rgb(120,120,105)"/><rect x="753" y="558" width="2" height="2" fill="rgb(120,120,120)"/><rect x="623" y="386" width="2" height="2" fill="rgb(93,93,93)"/><rect x="768" y="354" width="1" height="1" fill="rgb(119,119,119)"/><rect x="585" y="923" width="1" height="1" fill="rgb(106,106,106)"/><rect x="376" y="474" width="2" height="2" fill="rgb(101,101,101)"/><rect x="811" y="583" width="2" height="2" fill="rgb(99,99,99)"/><rect x="1019" y="307" width="2" height="2" fill="rgb(90,90,90)"/><rect x="1140" y="1039" width="2" height="2" fill="rgb(88,88,88)"/><rect x="214" y="570" width="2" height="2" fill="rgb(101,101,86)"/><rect x="665" y="281" width="2" height="2" fill="rgb(85,85,85)"/><rect x="558" y="961" width="2" height="2" fill="rgb(117,117,117)"/><rect x="1078" y="879" width="2" height="2" fill="rgb(106,106,106)"/><rect x="694" y="349" width="2" height="2" fill="rgb(107,107,107)"/><rect x="1034" y="354" width="2" height="2" fill="rgb(105,105,105)"/><rect x="1087" y="458" width="1" height="1" fill="rgb(113,113,113)"/><rect x="1377" y="1015" width="2" height="2" fill="rgb(115,115,100)"/><rect x="660" y="399" width="2" height="2" fill="rgb(105,105,105)"/><rect x="1223" y="1033" width="2" height="2" fill="rgb(117,117,102)"/><rect x="1340" y="612" width="2" height="2" fill="rgb(117,117,117)"/><rect x="1007" y="898" width="1" height="1" fill="rgb(106,106,106)"/><rect x="874" y="1014" width="2" height="2" fill="rgb(88,88,88)"/><rect x="831" y="586" width="2" height="2" fill="rgb(109,109,109)"/><rect x="748" y="965" width="2" height="2" fill="rgb(112,142,137)"/><rect x="204" y="696" width="2" height="2" fill="rgb(96,96,96)"/><rect x="425" y="1048" width="2" height="2" fill="rgb(93,93,93)"/><rect x="1143" y="379" width="2" height="2" fill="rgb(99,99,99)"/><rect x="945" y="270" width="2" height="2" fill="rgb(86,86,86)"/><rect x="792" y="838" width="2" height="2" fill="rgb(122,122,122)"/><rect x="944" y="1060" width="2" height="2" fill="rgb(88,88,88)"/><rect x="173" y="338" width="2" height="2" fill="rgb(121,121,121)"/><rect x="860" y="389" width="1" height="1" fill="rgb(109,139,134)"/><rect x="1095" y="437" width="2" height="2" fill="rgb(93,93,78)"/><rect x="1176" y="611" width="2" height="2" fill="rgb(102,102,102)"/><rect x="1320" y="326" width="2" height="2" fill="rgb(94,94,94)"/><rect x="530" y="760" width="2" height="2" fill="rgb(116,116,116)"/><rect x="1249" y="860" width="2" height="2" fill="rgb(100,100,100)"/><rect x="162" y="605" width="2" height="2" fill="rgb(98,98,98)"/><rect x="681" y="300" width="2" height="2" fill="rgb(94,94,94)"/><rect x="729" y="1000" width="2" height="2" fill="rgb(110,110,95)"/><rect x="636" y="576" width="2" height="2" fill="rgb(105,105,105)"/><rect x="376" y="998" width="2" height="2" fill="rgb(92,122,117)"/><rect x="871" y="455" width="2" height="2" fill="rgb(89,89,89)"/><rect x="189" y="907" width="2" height="2" fill="rgb(92,92,92)"/><rect x="694" y="916" width="2" height="2" fill="rgb(95,95,95)"/><rect x="569" y="339" width="2" height="2" fill="rgb(109,109,109)"/><rect x="726" y="271" width="1" height="1" fill="rgb(117,117,117)"/><rect x="819" y="682" width="2" height="2" fill="rgb(102,102,102)"/><rect x="1289" y="557" width="1" height="1" fill="rgb(98,98,98)"/><rect x="331" y="272" width="2" height="2" fill="rgb(111,111,111)"/><rect x="1238" y="498" width="2" height="2" fill="rgb(93,93,93)"/><rect x="154" y="393" width="1" height="1" fill="rgb(127,127,112)"/><rect x="285" y="629" width="2" height="2" fill="rgb(115,145,140)"/><rect x="1134" y="506" width="2" height="2" fill="rgb(103,103,103)"/><rect x="457" y="754" width="2" height="2" fill="rgb(116,116,116)"/><rect x="1325" y="390" width="2" height="2" fill="rgb(87,87,87)"/><rect x="1140" y="1001" width="2" height="2" fill="rgb(96,96,96)"/><rect x="842" y="724" width="1" height="1" fill="rgb(90,90,90)"/><rect x="256" y="786" width="2" height="2" fill="rgb(101,101,101)"/><rect x="440" y="319" width="2" height="2" fill="rgb(126,126,111)"/><rect x="1037" y="992" width="2" height="2" fill="rgb(116,116,116)"/><rect x="1201" y="301" width="2" height="2" fill="rgb(109,109,109)"/><rect x="840" y="768" width="1" height="1" fill="rgb(112,112,112)"/><rect x="1279" y="501" width="2" height="2" fill="rgb(103,103,103)"/><rect x="924" y="1004" width="2" height="2" fill="rgb(111,111,111)"/><rect x="1273" y="533" width="2" height="2" fill="rgb(90,90,90)"/><rect x="669" y="759" width="2" height="2" fill="rgb(113,113,113)"/><rect x="1076" y="553" width="1" height="1" fill="rgb(124,124,124)"/><rect x="171" y="913" width="2" height="2" fill="rgb(98,98,98)"/><rect x="388" y="847" width="1" height="1" fill="rgb(121,121,121)"/><rect x="703" y="968" width="2" height="2" fill="rgb(101,101,101)"/><rect x="303" y="396" width="2" height="2" fill="rgb(101,101,101)"/><rect x="266" y="595" width="2" height="2" fill="rgb(101,101,101)"/><rect x="1188" y="481" width="2" height="2" fill="rgb(97,97,97)"/><rect x="331" y="520" width="1" height="1" fill="rgb(88,88,88)"/><rect x="1070" y="313" width="2" height="2" fill="rgb(117,117,117)"/><rect x="477" y="915" width="1" height="1" fill="rgb(112,112,112)"/><rect x="1097" y="347" width="2" height="2" fill="rgb(92,92,92)"/><rect x="196" y="1034" width="2" height="2" fill="rgb(100,100,100)"/><rect x="415" y="311" width="2" height="2" fill="rgb(124,124,124)"/><rect x="1145" y="526" width="2" height="2" fill="rgb(102,102,102)"/><rect x="862" y="660" width="2" height="2" fill="rgb(96,96,96)"/><rect x="234" y="783" width="1" height="1" fill="rgb(98,98,98)"/><rect x="1356" y="476" width="1" height="1" fill="rgb(113,113,113)"/><rect x="539" y="1016" width="2" height="2" fill="rgb(125,125,125)"/><rect x="1102" y="866" width="2" height="2" fill="rgb(110,110,110)"/><rect x="1356" y="489" width="2" height="2" fill="rgb(125,125,125)"/><rect x="1022" y="625" width="2" height="2" fill="rgb(101,101,101)"/><rect x="736" y="487" width="1" height="1" fill="rgb(114,114,114)"/><rect x="436" y="536" width="2" height="2" fill="rgb(124,124,124)"/><rect x="1249" y="670" width="2" height="2" fill="rgb(119,119,119)"/><rect x="650" y="952" width="2" height="2" fill="rgb(97,97,97)"/><rect x="1203" y="858" width="2" height="2" fill="rgb(120,120,120)"/><rect x="963" y="1039" width="2" height="2" fill="rgb(107,107,107)"/><rect x="803" y="967" width="2" height="2" fill="rgb(99,99,99)"/><rect x="1180" y="1016" width="2" height="2" fill="rgb(107,107,107)"/><rect x="1116" y="1057" width="2" height="2" fill="rgb(117,117,117)"/><rect x="1389" y="599" width="2" height="2" fill="rgb(115,115,115)"/><rect x="573" y="1037" width="2" height="2" fill="rgb(121,121,106)"/><rect x="1185" y="833" width="1" height="1" fill="rgb(105,105,105)"/><rect x="955" y="451" width="2" height="2" fill="rgb(77,107,102)"/><rect x="358" y="405" width="1" height="1" fill="rgb(90,90,90)"/><rect x="195" y="368" width="2" height="2" fill="rgb(125,125,125)"/><rect x="1185" y="688" width="2" height="2" fill="rgb(113,113,113)"/><rect x="1360" y="1024" width="2" height="2" fill="rgb(87,87,87)"/><rect x="973" y="410" width="2" height="2" fill="rgb(124,124,124)"/><rect x="448" y="701" width="2" height="2" fill="rgb(80,110,105)"/><rect x="1104" y="564" width="2" height="2" fill="rgb(105,105,105)"/><rect x="682" y="424" width="2" height="2" fill="rgb(116,116,116)"/><rect x="429" y="1031" width="1" height="1" fill="rgb(103,103,103)"/><rect x="444" y="782" width="2" height="2" fill="rgb(95,95,95)"/><rect x="151" y="832" width="2" height="2" fill="rgb(89,89,89)"/><rect x="728" y="827" width="2" height="2" fill="rgb(101,101,101)"/><rect x="259" y="1016" width="2" height="2" fill="rgb(80,110,105)"/><rect x="1302" y="886" width="2" height="2" fill="rgb(112,112,112)"/><rect x="1211" y="680" width="2" height="2" fill="rgb(108,108,108)"/><rect x="421" y="529" width="2" height="2" fill="rgb(86,86,86)"/><rect x="1234" y="591" width="2" height="2" fill="rgb(109,109,109)"/><rect x="1037" y="919" width="2" height="2" fill="rgb(103,103,88)"/><rect x="321" y="951" width="2" height="2" fill="rgb(94,94,94)"/><rect x="337" y="1021" width="1" height="1" fill="rgb(94,94,94)"/><rect x="1045" y="785" width="1" height="1" fill="rgb(125,125,125)"/><rect x="176" y="552" width="2" height="2" fill="rgb(93,93,93)"/><rect x="1229" y="900" width="2" height="2" fill="rgb(93,93,78)"/><rect x="476" y="688" width="2" height="2" fill="rgb(120,120,120)"/><rect x="183" y="996" width="1" height="1" fill="rgb(115,115,115)"/><rect x="885" y="776" width="2" height="2" fill="rgb(79,109,104)"/><rect x="165" y="907" width="2" height="2" fill="rgb(99,99,99)"/><rect x="583" y="653" width="2" height="2" fill="rgb(100,130,125)"/><rect x="1293" y="463" width="2" height="2" fill="rgb(114,114,114)"/><rect x="304" y="344" width="2" height="2" fill="rgb(120,120,120)"/><rect x="1319" y="632" width="2" height="2" fill="rgb(123,123,123)"/><rect x="1368" y="351" width="1" height="1" fill="rgb(120,120,120)"/><rect x="1271" y="708" width="2" height="2" fill="rgb(121,121,121)"/><rect x="1056" y="1059" width="2" height="2" fill="rgb(114,114,114)"/><rect x="896" y="1061" width="2" height="2" fill="rgb(106,106,106)"/><rect x="228" y="391" width="2" height="2" fill="rgb(94,94,94)"/><rect x="674" y="588" width="1" height="1" fill="rgb(89,89,89)"/><rect x="891" y="703" width="2" height="2" fill="rgb(111,111,111)"/><rect x="334" y="950" width="2" height="2" fill="rgb(96,96,96)"/><rect x="1179" y="864" width="2" height="2" fill="rgb(107,107,107)"/><rect x="453" y="874" width="2" height="2" fill="rgb(89,89,89)"/><rect x="1140" y="759" width="2" height="2" fill="rgb(103,103,103)"/><rect x="614" y="974" width="2" height="2" fill="rgb(115,145,140)"/><rect x="1135" y="557" width="2" height="2" fill="rgb(90,90,90)"/><rect x="503" y="462" width="2" height="2" fill="rgb(112,112,112)"/><rect x="670" y="874" width="2" height="2" fill="rgb(82,112,107)"/><rect x="653" y="851" width="2" height="2" fill="rgb(114,114,114)"/><rect x="500" y="567" width="1" height="1" fill="rgb(125,125,125)"/><rect x="517" y="582" width="1" height="1" fill="rgb(110,110,110)"/><rect x="1293" y="823" width="2" height="2" fill="rgb(105,105,105)"/><rect x="497" y="885" width="2" height="2" fill="rgb(86,86,86)"/><rect x="505" y="415" width="2" height="2" fill="rgb(101,101,101)"/><rect x="153" y="380" width="2" height="2" fill="rgb(94,94,94)"/><rect x="1121" y="842" width="2" height="2" fill="rgb(115,115,100)"/><rect x="1318" y="828" width="2" height="2" fill="rgb(110,110,110)"/><rect x="311" y="310" width="2" height="2" fill="rgb(86,86,86)"/><rect x="187" y="666" width="2" height="2" fill="rgb(107,107,107)"/><rect x="749" y="899" width="2" height="2" fill="rgb(94,94,94)"/><rect x="1209" y="901" width="2" height="2" fill="rgb(116,116,116)"/><rect x="1072" y="352" width="1" height="1" fill="rgb(96,96,96)"/><rect x="553" y="582" width="2" height="2" fill="rgb(115,115,115)"/><rect x="1279" y="448" width="1" height="1" fill="rgb(105,105,105)"/><rect x="1207" y="415" width="2" height="2" fill="rgb(104,104,104)"/><rect x="255" y="1030" width="2" height="2" fill="rgb(95,95,80)"/><rect x="227" y="768" width="2" height="2" fill="rgb(97,127,122)"/><rect x="1353" y="986" width="1" height="1" fill="rgb(125,125,125)"/><rect x="1103" y="379" width="1" height="1" fill="rgb(103,103,103)"/><rect x="631" y="619" width="2" height="2" fill="rgb(120,120,120)"/><rect x="974" y="335" width="2" height="2" fill="rgb(107,107,107)"/><rect x="738" y="1018" width="2" height="2" fill="rgb(91,91,91)"/><rect x="216" y="667" width="2" height="2" fill="rgb(90,90,90)"/><rect x="855" y="324" width="2" height="2" fill="rgb(121,121,106)"/><rect x="1342" y="793" width="1" height="1" fill="rgb(104,104,104)"/><rect x="1363" y="451" width="1" height="1" fill="rgb(101,101,101)"/><rect x="437" y="350" width="2" height="2" fill="rgb(85,85,85)"/><rect x="1087" y="934" width="2" height="2" fill="rgb(94,94,79)"/><rect x="522" y="966" width="1" height="1" fill="rgb(125,125,125)"/><rect x="483" y="665" width="2" height="2" fill="rgb(112,112,112)"/><rect x="1125" y="294" width="1" height="1" fill="rgb(109,109,109)"/><rect x="775" y="544" width="2" height="2" fill="rgb(78,108,103)"/><rect x="495" y="785" width="2" height="2" fill="rgb(118,118,118)"/><rect x="620" y="580" width="2" height="2" fill="rgb(106,106,106)"/><line x1="357.1" y1="654.2" x2="219.8" y2="582.1" stroke="#1a261a" stroke-width="2" opacity="0.18"/><line x1="445.3" y1="770.8" x2="353.1" y2="724.9" stroke="#26201a" stroke-width="2" opacity="0.18"/><line x1="429.8" y1="655.9" x2="340.0" y2="596.2" stroke="#201a26" stroke-width="2" opacity="0.18"/><line x1="508.3" y1="647.4" x2="426.7" y2="679.4" stroke="#1a261a" stroke-width="2" opacity="0.18"/><line x1="372.3" y1="489.9" x2="222.8" y2="562.6" stroke="#26201a" stroke-width="2" opacity="0.18"/><line x1="471.4" y1="774.8" x2="358.5" y2="703.7" stroke="#201a26" stroke-width="2" opacity="0.18"/><line x1="510.9" y1="511.2" x2="325.5" y2="448.0" stroke="#26201a" stroke-width="2" opacity="0.18"/><line x1="487.0" y1="753.7" x2="362.0" y2="672.7" stroke="#26201a" stroke-width="2" opacity="0.18"/><line x1="440.2" y1="769.3" x2="264.1" y2="818.1" stroke="#201a26" stroke-width="2" opacity="0.18"/><line x1="467.7" y1="584.4" x2="382.9" y2="621.6" stroke="#201a26" stroke-width="2" opacity="0.18"/><line x1="451.9" y1="796.2" x2="319.9" y2="756.6" stroke="#26201a" stroke-width="2" opacity="0.18"/><line x1="321.2" y1="736.2" x2="211.2" y2="701.9" stroke="#26201a" stroke-width="2" opacity="0.18"/><line x1="509.5" y1="494.1" x2="374.5" y2="591.2" stroke="#1a2026" stroke-width="2" opacity="0.18"/><line x1="432.2" y1="775.0" x2="352.6" y2="747.2" stroke="#1a261a" stroke-width="2" opacity="0.18"/><line x1="318.5" y1="671.9" x2="196.1" y2="631.3" stroke="#1a2026" stroke-width="2" opacity="0.18"/><line x1="337.5" y1="493.6" x2="167.8" y2="589.8" stroke="#26201a" stroke-width="2" opacity="0.18"/><line x1="390.4" y1="758.4" x2="255.9" y2="668.6" stroke="#1a261a" stroke-width="2" opacity="0.18"/><line x1="448.8" y1="781.0" x2="300.4" y2="856.2" stroke="#201a26" stroke-width="2" opacity="0.18"/><line x1="524.7" y1="620.0" x2="411.9" y2="577.2" stroke="#26201a" stroke-width="2" opacity="0.18"/><line x1="537.0" y1="580.8" x2="451.7" y2="536.7" stroke="#1a2026" stroke-width="2" opacity="0.18"/><line x1="411.9" y1="697.4" x2="266.0" y2="613.0" stroke="#1a261a" stroke-width="2" opacity="0.18"/><line x1="441.5" y1="785.5" x2="297.7" y2="726.6" stroke="#1a2026" stroke-width="2" opacity="0.18"/><line x1="442.2" y1="582.4" x2="326.2" y2="537.8" stroke="#1a2026" stroke-width="2" opacity="0.18"/><line x1="372.1" y1="600.7" x2="252.3" y2="688.2" stroke="#201a26" stroke-width="2" opacity="0.18"/><line x1="374.4" y1="551.2" x2="286.8" y2="604.4" stroke="#26201a" stroke-width="2" opacity="0.18"/><line x1="455.9" y1="511.0" x2="300.4" y2="552.7" stroke="#201a26" stroke-width="2" opacity="0.18"/><line x1="405.2" y1="753.8" x2="258.3" y2="695.7" stroke="#26201a" stroke-width="2" opacity="0.18"/><line x1="364.9" y1="731.8" x2="269.4" y2="662.9" stroke="#201a26" stroke-width="2" opacity="0.18"/><line x1="507.3" y1="588.8" x2="380.6" y2="676.9" stroke="#201a26" stroke-width="2" opacity="0.18"/><line x1="401.1" y1="645.9" x2="260.9" y2="714.6" stroke="#1a2026" stroke-width="2" opacity="0.18"/><line x1="1110" y1="587.1" x2="1392" y2="535.3" stroke="#142014" stroke-width="2.5" opacity="0.12"/><line x1="1110" y1="597.6" x2="1392" y2="547.7" stroke="#142014" stroke-width="2.5" opacity="0.12"/><line x1="1110" y1="601.0" x2="1392" y2="573.9" stroke="#142014" stroke-width="2.5" opacity="0.12"/><line x1="1110" y1="613.4" x2="1392" y2="594.1" stroke="#142014" stroke-width="2.5" opacity="0.12"/><line x1="1110" y1="619.2" x2="1392" y2="606.2" stroke="#142014" stroke-width="2.5" opacity="0.12"/><line x1="1110" y1="629.6" x2="1392" y2="609.1" stroke="#142014" stroke-width="2.5" opacity="0.12"/><line x1="1110" y1="636.7" x2="1392" y2="635.5" stroke="#142014" stroke-width="2.5" opacity="0.12"/><line x1="1110" y1="644.3" x2="1392" y2="643.7" stroke="#142014" stroke-width="2.5" opacity="0.12"/><line x1="1110" y1="650.4" x2="1392" y2="653.3" stroke="#142014" stroke-width="2.5" opacity="0.12"/><line x1="1110" y1="658.1" x2="1392" y2="662.5" stroke="#142014" stroke-width="2.5" opacity="0.12"/><line x1="1110" y1="667.9" x2="1392" y2="683.7" stroke="#142014" stroke-width="2.5" opacity="0.12"/><line x1="1110" y1="677.1" x2="1392" y2="695.0" stroke="#142014" stroke-width="2.5" opacity="0.12"/><line x1="1110" y1="685.5" x2="1392" y2="723.4" stroke="#142014" stroke-width="2.5" opacity="0.12"/><line x1="1110" y1="693.6" x2="1392" y2="742.6" stroke="#142014" stroke-width="2.5" opacity="0.12"/><line x1="1110" y1="701.5" x2="1392" y2="751.0" stroke="#142014" stroke-width="2.5" opacity="0.12"/><line x1="1110" y1="705.1" x2="1392" y2="765.0" stroke="#142014" stroke-width="2.5" opacity="0.12"/><line x1="749" y1="752" x2="1137" y2="1067" stroke="#7a3a18" stroke-width="1.5" opacity="0.5"/><line x1="751" y1="752" x2="1139" y2="1067" stroke="#8a7a20" stroke-width="1.5" opacity="0.5"/><line x1="753" y1="752" x2="1141" y2="1067" stroke="#3a7a30" stroke-width="1.5" opacity="0.5"/><line x1="755" y1="752" x2="1143" y2="1067" stroke="#2a3a9a" stroke-width="1.5" opacity="0.5"/><line x1="757" y1="752" x2="1145" y2="1067" stroke="#202050" stroke-width="1.5" opacity="0.5"/><line x1="767" y1="770" x2="1097" y2="1067" stroke="#7a3a18" stroke-width="1.5" opacity="0.5"/><line x1="769" y1="770" x2="1099" y2="1067" stroke="#8a7a20" stroke-width="1.5" opacity="0.5"/><line x1="771" y1="770" x2="1101" y2="1067" stroke="#3a7a30" stroke-width="1.5" opacity="0.5"/><line x1="773" y1="770" x2="1103" y2="1067" stroke="#2a3a9a" stroke-width="1.5" opacity="0.5"/><line x1="775" y1="770" x2="1105" y2="1067" stroke="#202050" stroke-width="1.5" opacity="0.5"/><line x1="478" y1="508" x2="690" y2="592" stroke="#9a6020" stroke-width="2.2"/><line x1="482" y1="514" x2="690" y2="598" stroke="#304a7a" stroke-width="1.6"/><line x1="470" y1="530" x2="690" y2="610" stroke="#4a3a20" stroke-width="1.5"/><path d="M575.8,746.8L-736.4,1080M596.5,749.0L-658.2,1080M617.7,751.3L-580.0,1080M639.4,753.6L-501.8,1080M661.5,755.9L-423.6,1080M684.2,758.3L-345.4,1080M707.4,760.8L-267.2,1080M731.2,763.3L-189.0,1080M755.5,765.9L-110.8,1080M780.5,768.5L-32.6,1080M806.1,771.2L45.5,1080M832.3,774.0L123.7,1080M859.1,776.9L201.9,1080M886.7,779.8L280.1,1080M915.0,782.8L358.3,1080M944.0,785.9L436.5,1080M973.8,789.0L514.7,1080M1004.4,792.3L592.9,1080M1035.9,795.6L671.1,1080M1068.2,799.0L749.3,1080M1101.5,802.6L827.5,1080M1135.7,806.2L905.7,1080M1170.9,809.9L983.8,1080M1207.2,813.8L1062.0,1080M1244.5,817.7L1140.2,1080M1283.0,821.8L1218.4,1080M1322.7,826.0L1296.6,1080M1363.6,830.4L1374.8,1080M1405.8,834.9L1453.0,1080M1449.4,839.5L1531.2,1080M1494.5,844.3L1609.4,1080M-1467.0,1265.5L1400.0,-9703.5M-1269.7,1215.4L1400.0,173577.5M-1098.2,1171.9L1400.0,9717.0M-947.8,1133.7L1400.0,5258.2M-814.7,1099.9L1400.0,3717.6M-696.3,1069.8L1400.0,2936.6M-590.1,1042.9L1400.0,2464.6M-494.4,1018.6L1400.0,2148.4M-407.7,996.5L1400.0,1921.9M-328.7,976.5L1400.0,1751.6M-256.6,958.2L1400.0,1618.9M-190.4,941.4L1400.0,1512.6M-129.4,925.9L1400.0,1425.5M-73.1,911.6L1400.0,1352.9M-20.9,898.3L1400.0,1291.4M27.6,886.0L1400.0,1238.7M72.8,874.5L1400.0,1192.9M115.0,863.8L1400.0,1152.9M154.5,853.8L1400.0,1117.5M191.6,844.4L1400.0,1086.1M226.4,835.5L1400.0,1058.0M259.2,827.2L1400.0,1032.6M290.2,819.3L1400.0,1009.7M319.4,811.9L1400.0,988.9M347.1,804.9L1400.0,969.8M373.3,798.2L1400.0,952.4M398.2,791.9L1400.0,936.3M421.9,785.9L1400.0,921.5M444.4,780.2L1400.0,907.8M465.8,774.8L1400.0,895.0M486.3,769.6L1400.0,883.1M505.8,764.6L1400.0,872.1M524.5,759.9L1400.0,861.7M542.3,755.3L1400.0,852.0M559.4,751.0L1400.0,842.8M575.8,746.8L1400.0,834.2" stroke="#e2e2e2" stroke-width="1" fill="none"/><path d="M330.7,597.0L488.0,590.0L492.0,740.0L337.4,777.0z" fill="#0a280a" /><path d="M341.0,526.0L688.0,553.5L688.0,560.5L341.0,528.0z" fill="#8a00f0" /><path d="M370.0,529.0L688.0,563.0L688.0,569.0L370.0,531.0z" fill="#8a00f0" /><path d="M347.0,543.0L688.0,571.5L688.0,578.5L347.0,545.0z" fill="#8a00f0" /><path d="M342.0,561.2L688.0,587.0L688.0,593.0L342.0,562.8z" fill="#8a00f0" /><path d="M400.0,544.0L688.0,581.5L688.0,586.5L400.0,546.0z" fill="#8a00f0" /><path d="M350.0,595.1L500.0,580.6L500.0,586.6L350.0,597.6z" fill="#8a00f0" /><path d="M350.0,613.1L500.0,597.4L500.0,603.4L350.0,615.6z" fill="#8a00f0" /><path d="M350.0,631.1L500.0,614.2L500.0,620.2L350.0,633.6z" fill="#8a00f0" /><path d="M350.0,649.1L500.0,631.0L500.0,637.0L350.0,651.6z" fill="#8a00f0" /><path d="M350.0,667.1L500.0,647.8L500.0,653.8L350.0,669.6z" fill="#8a00f0" /><path d="M350.0,685.1L500.0,664.6L500.0,670.6L350.0,687.6z" fill="#8a00f0" /><path d="M350.0,703.1L500.0,681.4L500.0,687.4L350.0,705.6z" fill="#8a00f0" /><path d="M350.0,721.1L500.0,698.2L500.0,704.2L350.0,723.6z" fill="#8a00f0" /><path d="M350.0,739.1L500.0,715.0L500.0,721.0L350.0,741.6z" fill="#8a00f0" /><path d="M350.0,757.1L500.0,731.8L500.0,737.8L350.0,759.6z" fill="#8a00f0" /><path d="M400.0,735.0L440.0,700.0L500.0,650.0L500.0,760.0L400.0,762.0z" fill="#8a00f0" /><path d="M400.0,700.0L520.0,690.0M409.0,704.0L520.0,693.0M418.0,708.0L520.0,696.0M427.0,694.0L520.0,681.0M436.0,698.0L520.0,684.0M445.0,702.0L520.0,687.0M454.0,688.0L520.0,672.0M463.0,692.0L520.0,675.0" stroke="#0a280a" stroke-width="1.3" fill="none" opacity="0.9"/><path d="M450.0,650.0L500.0,625.0L500.0,650.0L450.0,668.0z" fill="#8a00f0" /><path d="M400.0,740.0L505.0,740.0M397.0,741.9L505.0,741.9M394.0,743.8L505.0,743.8M391.0,745.7L505.0,745.7M388.0,747.6L505.0,747.6M385.0,749.5L505.0,749.5M382.0,751.4L505.0,751.4M379.0,753.3L505.0,753.3M376.0,755.2L505.0,755.2M373.0,757.1L505.0,757.1M370.0,759.0L505.0,759.0" stroke="#000" stroke-width="0.6" fill="none" opacity="0.6"/><line x1="331.0" y1="598.6" x2="488.0" y2="593.6" stroke="#00ff00" stroke-width="2.2"/><path d="M353.5,597.7L362.5,597.7L358.0,603.2zM371.0,597.2L377.0,597.2L374.0,601.2zM387.0,596.7L393.0,596.7L390.0,600.7zM403.0,596.2L409.0,596.2L406.0,600.2zM419.0,595.7L425.0,595.7L422.0,599.7zM435.0,595.2L441.0,595.2L438.0,599.2zM451.0,594.7L457.0,594.7L454.0,598.7zM467.0,594.2L473.0,594.2L470.0,598.2zM483.0,593.7L489.0,593.7L486.0,597.7z" fill="#00ff00"/><path d="M351.0,595.6L363.0,599.6L351.0,603.6z" fill="#00ff00"/><line x1="331.7" y1="616.6" x2="486.5" y2="612.0" stroke="#00ff00" stroke-width="2.2"/><path d="M354.2,615.8L363.2,615.8L358.7,621.3zM371.7,615.3L377.7,615.3L374.7,619.3zM387.7,614.8L393.7,614.8L390.7,618.8zM403.7,614.4L409.7,614.4L406.7,618.4zM419.7,613.9L425.7,613.9L422.7,617.9zM435.7,613.4L441.7,613.4L438.7,617.4zM451.7,612.9L457.7,612.9L454.7,616.9zM467.7,612.5L473.7,612.5L470.7,616.5z" fill="#00ff00"/><path d="M351.7,613.6L363.7,617.6L351.7,621.6z" fill="#00ff00"/><line x1="332.4" y1="634.6" x2="485.0" y2="630.4" stroke="#00ff00" stroke-width="2.2"/><path d="M354.9,633.9L363.9,633.9L359.4,639.4zM372.4,633.4L378.4,633.4L375.4,637.4zM388.4,633.0L394.4,633.0L391.4,637.0zM404.4,632.5L410.4,632.5L407.4,636.5zM420.4,632.1L426.4,632.1L423.4,636.1zM436.4,631.7L442.4,631.7L439.4,635.7zM452.4,631.2L458.4,631.2L455.4,635.2zM468.4,630.8L474.4,630.8L471.4,634.8z" fill="#00ff00"/><path d="M352.4,631.6L364.4,635.6L352.4,639.6z" fill="#00ff00"/><line x1="333.1" y1="652.6" x2="483.5" y2="648.8" stroke="#00ff00" stroke-width="2.2"/><path d="M355.6,651.9L364.6,651.9L360.1,657.4zM373.1,651.5L379.1,651.5L376.1,655.5zM389.1,651.1L395.1,651.1L392.1,655.1zM405.1,650.7L411.1,650.7L408.1,654.7zM421.1,650.3L427.1,650.3L424.1,654.3zM437.1,649.9L443.1,649.9L440.1,653.9zM453.1,649.5L459.1,649.5L456.1,653.5zM469.1,649.1L475.1,649.1L472.1,653.1z" fill="#00ff00"/><path d="M353.1,649.6L365.1,653.6L353.1,657.6z" fill="#00ff00"/><line x1="333.8" y1="670.6" x2="420.0" y2="668.6" stroke="#00ff00" stroke-width="2.2"/><path d="M356.3,670.0L365.3,670.0L360.8,675.5zM373.8,669.6L379.8,669.6L376.8,673.6zM389.8,669.2L395.8,669.2L392.8,673.2zM405.8,668.9L411.8,668.9L408.8,672.9z" fill="#00ff00"/><path d="M353.8,667.6L365.8,671.6L353.8,675.6z" fill="#00ff00"/><line x1="425.0" y1="664.3" x2="434.1" y2="664.3" stroke="#00ff00" stroke-width="1.6"/><line x1="457.0" y1="662.8" x2="470.3" y2="662.8" stroke="#00ff00" stroke-width="1.6"/><line x1="334.5" y1="688.6" x2="410.0" y2="686.6" stroke="#00ff00" stroke-width="2.2"/><path d="M357.0,687.9L366.0,687.9L361.5,693.4zM374.5,687.5L380.5,687.5L377.5,691.5zM390.5,687.0L396.5,687.0L393.5,691.0zM406.5,686.6L412.5,686.6L409.5,690.6z" fill="#00ff00"/><path d="M354.5,685.6L366.5,689.6L354.5,693.6z" fill="#00ff00"/><line x1="415.0" y1="683.3" x2="424.6" y2="683.3" stroke="#00ff00" stroke-width="1.6"/><line x1="448.0" y1="682.0" x2="454.6" y2="682.0" stroke="#00ff00" stroke-width="1.6"/><line x1="476.8" y1="680.8" x2="487.5" y2="680.8" stroke="#00ff00" stroke-width="1.6"/><line x1="335.2" y1="706.6" x2="400.0" y2="704.6" stroke="#00ff00" stroke-width="2.2"/><path d="M357.7,705.8L366.7,705.8L362.2,711.3zM375.2,705.3L381.2,705.3L378.2,709.3zM391.2,704.8L397.2,704.8L394.2,708.8z" fill="#00ff00"/><path d="M355.2,703.6L367.2,707.6L355.2,711.6z" fill="#00ff00"/><line x1="405.0" y1="702.2" x2="410.8" y2="702.2" stroke="#00ff00" stroke-width="1.6"/><line x1="429.7" y1="701.3" x2="435.5" y2="701.3" stroke="#00ff00" stroke-width="1.6"/><line x1="462.5" y1="700.1" x2="473.7" y2="700.1" stroke="#00ff00" stroke-width="1.6"/><line x1="335.9" y1="724.6" x2="390.0" y2="722.6" stroke="#00ff00" stroke-width="2.2"/><path d="M358.4,723.6L367.4,723.6L362.9,729.1zM375.9,723.0L381.9,723.0L378.9,727.0z" fill="#00ff00"/><path d="M355.9,721.6L367.9,725.6L355.9,729.6z" fill="#00ff00"/><line x1="395.0" y1="720.9" x2="408.8" y2="720.9" stroke="#00ff00" stroke-width="1.6"/><line x1="438.3" y1="719.6" x2="449.2" y2="719.6" stroke="#00ff00" stroke-width="1.6"/><line x1="473.0" y1="718.6" x2="479.4" y2="718.6" stroke="#00ff00" stroke-width="1.6"/><line x1="336.6" y1="742.6" x2="380.0" y2="740.6" stroke="#00ff00" stroke-width="2.2"/><path d="M359.1,741.4L368.1,741.4L363.6,746.9zM376.6,740.6L382.6,740.6L379.6,744.6z" fill="#00ff00"/><path d="M356.6,739.6L368.6,743.6L356.6,747.6z" fill="#00ff00"/><line x1="385.0" y1="739.5" x2="394.8" y2="739.5" stroke="#00ff00" stroke-width="1.6"/><line x1="409.7" y1="738.9" x2="416.4" y2="738.9" stroke="#00ff00" stroke-width="1.6"/><line x1="434.3" y1="738.3" x2="439.6" y2="738.3" stroke="#00ff00" stroke-width="1.6"/><line x1="461.0" y1="737.7" x2="469.9" y2="737.7" stroke="#00ff00" stroke-width="1.6"/><line x1="337.3" y1="760.6" x2="370.0" y2="758.6" stroke="#00ff00" stroke-width="2.2"/><path d="M359.8,758.9L368.8,758.9L364.3,764.4z" fill="#00ff00"/><path d="M357.3,757.6L369.3,761.6L357.3,765.6z" fill="#00ff00"/><line x1="375.0" y1="757.9" x2="384.7" y2="757.9" stroke="#00ff00" stroke-width="1.6"/><line x1="408.9" y1="757.3" x2="418.4" y2="757.3" stroke="#00ff00" stroke-width="1.6"/><line x1="443.0" y1="756.8" x2="452.1" y2="756.8" stroke="#00ff00" stroke-width="1.6"/><line x1="470.6" y1="756.3" x2="484.6" y2="756.3" stroke="#00ff00" stroke-width="1.6"/><ellipse cx="582" cy="686" rx="95" ry="112" fill="#e20000"/><clipPath id="sphc"><ellipse cx="582" cy="686" rx="95" ry="112"/></clipPath><g clip-path="url(#sphc)"><ellipse cx="488.0" cy="686" rx="3.4" ry="15.9" fill="none" stroke="#a80000" stroke-width="0.7" opacity="0.55"/><ellipse cx="490.8" cy="686" rx="6.7" ry="31.6" fill="none" stroke="#a80000" stroke-width="0.7" opacity="0.55"/><ellipse cx="495.6" cy="686" rx="9.9" ry="46.5" fill="none" stroke="#a80000" stroke-width="0.7" opacity="0.55"/><ellipse cx="502.1" cy="686" rx="12.8" ry="60.6" fill="none" stroke="#a80000" stroke-width="0.7" opacity="0.55"/><ellipse cx="510.2" cy="686" rx="15.6" ry="73.3" fill="none" stroke="#a80000" stroke-width="0.7" opacity="0.55"/><ellipse cx="519.8" cy="686" rx="17.9" ry="84.6" fill="none" stroke="#a80000" stroke-width="0.7" opacity="0.55"/><ellipse cx="530.6" cy="686" rx="20.0" ry="94.2" fill="none" stroke="#a80000" stroke-width="0.7" opacity="0.55"/><ellipse cx="542.5" cy="686" rx="21.6" ry="101.9" fill="none" stroke="#a80000" stroke-width="0.7" opacity="0.55"/><ellipse cx="555.2" cy="686" rx="22.8" ry="107.5" fill="none" stroke="#a80000" stroke-width="0.7" opacity="0.55"/><ellipse cx="568.5" cy="686" rx="23.5" ry="110.9" fill="none" stroke="#a80000" stroke-width="0.7" opacity="0.55"/><ellipse cx="582.0" cy="686" rx="23.8" ry="112.0" fill="none" stroke="#a80000" stroke-width="0.7" opacity="0.55"/><ellipse cx="595.5" cy="686" rx="23.5" ry="110.9" fill="none" stroke="#a80000" stroke-width="0.7" opacity="0.55"/><ellipse cx="608.8" cy="686" rx="22.8" ry="107.5" fill="none" stroke="#a80000" stroke-width="0.7" opacity="0.55"/><ellipse cx="621.5" cy="686" rx="21.6" ry="101.9" fill="none" stroke="#a80000" stroke-width="0.7" opacity="0.55"/><ellipse cx="633.4" cy="686" rx="20.0" ry="94.2" fill="none" stroke="#a80000" stroke-width="0.7" opacity="0.55"/><ellipse cx="644.2" cy="686" rx="17.9" ry="84.6" fill="none" stroke="#a80000" stroke-width="0.7" opacity="0.55"/><ellipse cx="653.8" cy="686" rx="15.6" ry="73.3" fill="none" stroke="#a80000" stroke-width="0.7" opacity="0.55"/><ellipse cx="661.9" cy="686" rx="12.8" ry="60.6" fill="none" stroke="#a80000" stroke-width="0.7" opacity="0.55"/><ellipse cx="668.4" cy="686" rx="9.9" ry="46.5" fill="none" stroke="#a80000" stroke-width="0.7" opacity="0.55"/><ellipse cx="673.2" cy="686" rx="6.7" ry="31.6" fill="none" stroke="#a80000" stroke-width="0.7" opacity="0.55"/><ellipse cx="676.0" cy="686" rx="3.4" ry="15.9" fill="none" stroke="#a80000" stroke-width="0.7" opacity="0.55"/><path d="M487.0,686.0L681.8,686.0M487.0,686.0L680.2,706.4M487.0,686.0L675.7,726.2M487.0,686.0L668.4,744.8M487.0,686.0L658.4,761.6M487.0,686.0L646.1,776.1M487.0,686.0L631.9,787.8M487.0,686.0L616.1,796.5M487.0,686.0L599.3,801.8M487.0,686.0L582.0,803.6M487.0,686.0L564.7,801.8M487.0,686.0L547.9,796.5M487.0,686.0L532.1,787.8M487.0,686.0L517.9,776.1M487.0,686.0L505.6,761.6M487.0,686.0L495.6,744.8M487.0,686.0L488.3,726.2M487.0,686.0L483.8,706.4M487.0,686.0L482.2,686.0M487.0,686.0L483.8,665.6M487.0,686.0L488.3,645.8M487.0,686.0L495.6,627.2M487.0,686.0L505.6,610.4M487.0,686.0L517.9,595.9M487.0,686.0L532.1,584.2M487.0,686.0L547.9,575.5M487.0,686.0L564.7,570.2M487.0,686.0L582.0,568.4M487.0,686.0L599.3,570.2M487.0,686.0L616.1,575.5M487.0,686.0L631.9,584.2M487.0,686.0L646.1,595.9M487.0,686.0L658.4,610.4M487.0,686.0L668.4,627.2M487.0,686.0L675.7,645.8M487.0,686.0L680.2,665.6" stroke="#ff2020" stroke-width="0.6" fill="none" opacity="0.35"/><path d="M502.3,746.9L506.2,618.5M643.5,600.6L673.6,656.5M596.8,796.6L563.7,795.9M652.6,760.9L629.4,783.0M634.6,779.3L529.4,779.2M676.8,678.6L596.9,796.6M513.4,763.5L489.4,661.0M547.8,581.5L626.3,586.9M667.0,735.9L526.7,777.0M511.6,610.8L550.0,580.6M667.9,733.7L641.0,773.8M673.9,657.4L674.6,711.0M515.0,606.6L669.3,641.8M674.7,710.4L618.5,789.4M488.0,701.9L595.7,575.2M617.8,789.8L549.1,791.1M583.2,798.0L547.6,790.4M538.2,586.6L670.9,646.4M494.5,729.6L487.1,690.0M560.5,576.9L674.1,658.7M527.8,594.0L605.7,577.5M628.0,588.0L672.6,719.8M501.8,626.0L602.1,576.5M592.0,797.4L503.7,749.4M608.0,578.3L675.7,704.8M528.2,778.3L510.9,611.7M632.6,591.2L658.5,619.6M634.3,779.5L572.8,797.5M676.6,696.3L572.4,797.4M524.6,596.7L633.7,592.0M676.9,682.2L643.1,771.8M611.9,792.3L566.0,796.4M531.0,780.5L510.6,612.1M507.6,616.4L536.5,587.7M495.2,731.6L487.1,690.2M514.0,607.8L554.9,578.7M622.8,787.2L504.8,751.3M630.6,589.8L672.2,721.2M556.2,793.8L487.5,674.7M568.9,796.9L540.7,786.9M567.8,796.7L487.1,680.5M515.5,606.1L567.9,575.2M633.2,591.7L654.0,759.1M564.6,796.1L500.9,627.7M574.5,797.7L537.4,784.9M487.3,677.4L607.9,578.3M505.0,620.3L608.7,578.5M487.3,694.7L509.7,613.4M552.7,792.5L490.5,716.1M491.1,653.3L637.8,595.4M667.2,735.4L617.7,789.8M671.1,647.1L628.2,783.8M666.8,736.4L587.0,797.8M526.6,595.0L671.5,648.4M664.0,742.5L514.4,764.6M594.3,574.9L656.6,616.7M489.1,662.7L613.9,580.5M586.1,797.9L487.7,699.6M493.7,644.7L515.9,605.5M569.1,797.0L495.8,733.0M642.8,772.1L493.1,725.5M582.0,798.0L521.2,772.1M504.2,621.8L604.3,577.1M542.0,787.6L490.8,717.3M487.0,688.4L605.8,577.6M665.5,739.3L515.5,765.9M669.9,643.5L627.4,784.4M612.9,580.1L673.0,653.9M674.4,659.9L604.9,794.7M545.2,582.7L640.7,597.9M599.4,796.1L490.7,716.9M573.5,574.4L602.7,576.7M546.3,789.8L487.0,683.2M604.5,794.8L555.7,793.6M618.1,789.6L588.0,797.8M651.0,763.0L567.6,796.7M487.0,685.0L565.3,575.7M548.1,790.6L508.6,757.1M665.3,632.2L643.1,771.8M540.9,585.0L663.2,627.8M540.6,786.8L488.7,664.9M542.2,787.7L490.5,656.0M621.3,584.0L647.0,604.4M608.9,578.6L649.2,606.9M676.5,697.3L664.0,742.5M494.2,643.2L634.0,592.3M666.7,635.4L676.5,697.1M496.3,734.3L571.0,574.7M654.2,613.3L633.5,780.1M583.0,798.0L516.8,767.5M638.3,776.2L571.3,797.3M503.6,749.2L535.2,588.6M531.1,591.4L584.5,574.0M623.1,787.0L526.9,777.3M655.4,614.9L668.9,731.1M605.0,577.3L676.0,702.2M650.4,608.3L670.3,727.2M513.6,763.7L491.6,651.7M612.5,579.9L666.7,635.3M615.1,791.0L489.0,708.7M487.7,699.8L553.6,579.1M625.6,785.5L592.1,797.4M596.8,796.6L509.2,758.0M675.0,709.1L635.6,778.5M671.0,646.8L655.6,756.9M677.0,689.2L570.4,797.2M551.7,792.1L506.5,754.0M520.5,600.6L645.1,602.2M539.3,786.0L494.6,642.0M649.4,607.1L676.6,696.6M487.0,688.1L491.0,653.9M502.2,625.1L563.2,576.2M527.3,594.4L660.7,623.2M530.8,780.4L495.7,639.1M670.9,646.5L674.6,711.2M610.0,579.0L675.8,668.1M671.1,647.1L676.8,693.8M511.5,761.1L488.2,703.8M576.6,797.8L491.2,653.0M488.8,664.5L539.1,586.1M674.4,660.1L675.9,703.3M676.4,698.9L567.8,796.7M493.2,646.2L628.2,588.2M487.0,688.6L611.0,579.4M535.2,783.5L493.3,726.2M652.8,611.3L666.4,737.3M675.3,707.0L665.1,740.3M676.5,697.1L575.5,797.7M520.8,600.3L562.4,576.4M609.4,578.8L671.5,723.5M517.4,603.9L630.4,589.6M495.0,731.1L535.8,588.1M509.3,758.1L545.5,582.6M502.0,625.5L622.8,584.8M666.8,635.6L588.3,797.8M489.0,663.0L509.2,614.0M488.2,668.4L623.2,585.1M606.9,794.1L539.1,785.9M567.1,796.6L510.4,759.7M618.2,582.5L677.0,689.5M663.6,743.3L569.2,797.0M550.4,580.4L582.6,574.0M613.5,791.7L583.3,798.0M550.5,580.3L638.9,596.3M676.6,695.7L647.8,766.8M615.6,790.8L507.3,755.1M496.9,735.7L501.3,626.9M536.5,784.3L509.6,758.6M538.1,785.4L490.9,654.3M489.6,659.8L578.6,574.1M633.3,780.2L600.8,795.8M589.5,574.3L677.0,688.4M530.2,592.1L674.9,662.5M549.0,791.0L492.1,649.9M559.3,794.8L487.0,687.3M661.2,624.1L665.9,738.5M510.7,612.0L667.9,638.2M487.2,693.1L506.0,618.8M673.1,654.3L620.0,788.7M538.5,785.5L492.0,722.0" stroke="#a00000" stroke-width="0.5" fill="none" opacity="0.4"/><path d="M530.0,760.0L600.0,800.0L660.0,790.0L672.0,735.0L620.0,755.0L560.0,752.0z" fill="#700000" opacity="0.3"/></g><path d="M640.0,588.0L688.0,580.0L688.0,738.0L650.0,745.0L625.0,700.0L620.0,620.0z" fill="#ff0000" /><path d="M595.6,590.0L688.0,588.0M623.1,593.8L688.0,591.4M618.8,597.6L688.0,594.8M608.9,601.4L688.0,598.2M593.1,605.2L688.0,601.6M623.4,609.0L688.0,605.0M623.0,612.8L688.0,608.4M605.4,616.6L688.0,611.8M603.6,620.4L688.0,615.2M587.5,624.2L688.0,618.6M573.4,628.0L688.0,622.0M592.3,631.8L688.0,625.4M602.7,635.6L688.0,628.8M573.0,639.4L688.0,632.2M611.5,643.2L688.0,635.6M579.3,647.0L688.0,639.0M578.0,650.8L688.0,642.4M566.2,654.6L688.0,645.8M617.4,658.4L688.0,649.2M601.9,662.2L688.0,652.6M608.0,666.0L688.0,656.0M592.4,669.8L688.0,659.4M559.1,673.6L688.0,662.8M574.0,677.4L688.0,666.2M582.8,681.2L688.0,669.6M563.1,685.0L688.0,673.0M610.4,688.8L688.0,676.4M579.7,692.6L688.0,679.8M569.3,696.4L688.0,683.2M607.0,700.2L688.0,686.6M570.3,704.0L688.0,690.0M615.8,707.8L688.0,693.4M591.0,711.6L688.0,696.8M597.8,715.4L688.0,700.2M587.6,719.2L688.0,703.6M596.7,723.0L688.0,707.0M581.7,726.8L688.0,710.4M574.8,730.6L688.0,713.8M621.7,734.4L688.0,717.2M588.3,738.2L688.0,720.6M619.6,742.0L688.0,724.0M589.5,745.8L688.0,727.4M632.6,749.6L688.0,730.8M629.9,753.4L688.0,734.2M623.5,757.2L688.0,737.6M625.3,761.0L688.0,741.0" stroke="#ff0000" stroke-width="2.4" fill="none" /><path d="M643.8,579.6L688.0,590.0L688.0,593.5z" fill="#8a00f0" /><path d="M619.9,591.0L688.0,599.0L688.0,605.0z" fill="#8a00f0" /><path d="M614.9,599.0L688.0,606.8L688.0,611.4z" fill="#8a00f0" /><path d="M619.6,610.4L688.0,617.3L688.0,621.3z" fill="#8a00f0" /><path d="M647.4,622.8L688.0,628.8L688.0,631.8z" fill="#8a00f0" /><path d="M658.6,633.5L688.0,637.7L688.0,642.2z" fill="#8a00f0" /><path d="M637.9,643.1L688.0,645.0L688.0,651.9z" fill="#8a00f0" /><path d="M637.2,653.8L688.0,655.8L688.0,660.3z" fill="#8a00f0" /><path d="M611.3,663.6L688.0,663.4L688.0,670.2z" fill="#8a00f0" /><path d="M653.0,676.5L688.0,676.7L688.0,679.8z" fill="#8a00f0" /><path d="M640.8,685.7L688.0,683.7L688.0,689.3z" fill="#8a00f0" /><path d="M654.5,696.4L688.0,692.7L688.0,699.5z" fill="#8a00f0" /><path d="M659.6,707.2L688.0,702.4L688.0,709.0z" fill="#8a00f0" /><path d="M613.1,716.4L688.0,712.1L688.0,715.7z" fill="#8a00f0" /><path d="M620.0,728.6L688.0,721.6L688.0,728.0z" fill="#8a00f0" /><path d="M642.3,738.0L688.0,730.7L688.0,735.7z" fill="#8a00f0" /><rect x="649.1" y="583.5" width="4.5" height="1.3" fill="#00ff40"/><rect x="639.1" y="582.1" width="2.4" height="1.3" fill="#2040ff"/><rect x="644.2" y="582.8" width="3.1" height="1.3" fill="#ff8000"/><rect x="651.0" y="583.8" width="3.0" height="1.3" fill="#ff8000"/><rect x="642.5" y="582.6" width="2.1" height="1.3" fill="#ffff00"/><rect x="625.6" y="580.2" width="4.1" height="1.3" fill="#ff8000"/><rect x="614.0" y="578.6" width="2.2" height="1.3" fill="#2040ff"/><rect x="669.3" y="586.4" width="2.7" height="1.3" fill="#2040ff"/><rect x="637.4" y="581.9" width="4.9" height="1.3" fill="#ffff00"/><rect x="627.2" y="580.4" width="2.5" height="1.3" fill="#00c0ff"/><rect x="681.1" y="597.4" width="2.7" height="1.3" fill="#00ff40"/><rect x="596.4" y="590.6" width="4.4" height="1.3" fill="#ff8000"/><rect x="626.7" y="593.0" width="4.1" height="1.3" fill="#40ff00"/><rect x="640.9" y="594.2" width="4.0" height="1.3" fill="#00ff40"/><rect x="629.9" y="593.3" width="5.0" height="1.3" fill="#40ff00"/><rect x="647.8" y="594.7" width="4.6" height="1.3" fill="#ff8000"/><rect x="639.6" y="594.1" width="4.0" height="1.3" fill="#00ff40"/><rect x="605.9" y="591.3" width="2.2" height="1.3" fill="#ff8000"/><rect x="665.8" y="596.2" width="3.4" height="1.3" fill="#00c0ff"/><rect x="595.1" y="590.5" width="2.8" height="1.3" fill="#00c0ff"/><rect x="674.6" y="604.8" width="3.9" height="1.3" fill="#00ff40"/><rect x="686.3" y="605.7" width="4.2" height="1.3" fill="#ff8000"/><rect x="590.0" y="598.4" width="2.4" height="1.3" fill="#40ff00"/><rect x="639.1" y="602.1" width="4.2" height="1.3" fill="#ffff00"/><rect x="683.1" y="605.4" width="4.7" height="1.3" fill="#00c0ff"/><rect x="666.9" y="604.2" width="4.6" height="1.3" fill="#2040ff"/><rect x="664.6" y="604.0" width="3.5" height="1.3" fill="#ff8000"/><rect x="616.7" y="600.4" width="3.6" height="1.3" fill="#00c0ff"/><rect x="599.3" y="599.1" width="4.2" height="1.3" fill="#ff8000"/><rect x="655.6" y="603.4" width="4.9" height="1.3" fill="#ffff00"/><rect x="683.6" y="616.0" width="3.3" height="1.3" fill="#40ff00"/><rect x="629.5" y="612.2" width="4.9" height="1.3" fill="#00ff40"/><rect x="602.7" y="610.3" width="2.3" height="1.3" fill="#ffff00"/><rect x="607.9" y="610.7" width="3.9" height="1.3" fill="#00ff40"/><rect x="596.6" y="609.9" width="2.4" height="1.3" fill="#00c0ff"/><rect x="602.0" y="610.3" width="3.6" height="1.3" fill="#00c0ff"/><rect x="628.6" y="612.1" width="4.7" height="1.3" fill="#2040ff"/><rect x="605.9" y="610.6" width="2.6" height="1.3" fill="#ff8000"/><rect x="609.4" y="610.8" width="4.2" height="1.3" fill="#ffff00"/><rect x="649.0" y="613.6" width="3.5" height="1.3" fill="#40ff00"/><rect x="650.2" y="624.6" width="2.2" height="1.3" fill="#2040ff"/><rect x="629.8" y="622.8" width="4.1" height="1.3" fill="#00c0ff"/><rect x="685.5" y="627.6" width="3.8" height="1.3" fill="#40ff00"/><rect x="620.4" y="622.0" width="3.2" height="1.3" fill="#00c0ff"/><rect x="668.7" y="626.2" width="5.0" height="1.3" fill="#2040ff"/><rect x="674.1" y="626.6" width="3.5" height="1.3" fill="#2040ff"/><rect x="624.4" y="622.4" width="3.8" height="1.3" fill="#2040ff"/><rect x="659.4" y="625.4" width="3.0" height="1.3" fill="#2040ff"/><rect x="639.3" y="623.6" width="4.1" height="1.3" fill="#2040ff"/><rect x="670.9" y="626.3" width="2.6" height="1.3" fill="#2040ff"/><rect x="647.5" y="633.9" width="5.0" height="1.3" fill="#ffff00"/><rect x="680.2" y="636.2" width="4.0" height="1.3" fill="#40ff00"/><rect x="677.0" y="636.0" width="4.3" height="1.3" fill="#ff8000"/><rect x="658.6" y="634.7" width="4.8" height="1.3" fill="#40ff00"/><rect x="666.9" y="635.2" width="3.3" height="1.3" fill="#2040ff"/><rect x="659.1" y="634.7" width="4.6" height="1.3" fill="#ffff00"/><rect x="642.0" y="633.5" width="2.1" height="1.3" fill="#ff8000"/><rect x="631.1" y="632.7" width="2.8" height="1.3" fill="#2040ff"/><rect x="677.1" y="636.0" width="4.2" height="1.3" fill="#ff8000"/><rect x="676.0" y="635.9" width="3.2" height="1.3" fill="#00c0ff"/><rect x="614.7" y="642.2" width="3.4" height="1.3" fill="#ff8000"/><rect x="637.8" y="642.8" width="3.8" height="1.3" fill="#00ff40"/><rect x="670.3" y="643.6" width="3.9" height="1.3" fill="#2040ff"/><rect x="661.4" y="643.4" width="4.6" height="1.3" fill="#40ff00"/><rect x="673.6" y="643.7" width="2.8" height="1.3" fill="#ff8000"/><rect x="681.3" y="643.9" width="3.2" height="1.3" fill="#2040ff"/><rect x="638.5" y="642.8" width="3.6" height="1.3" fill="#40ff00"/><rect x="687.1" y="644.0" width="2.0" height="1.3" fill="#00c0ff"/><rect x="624.1" y="642.5" width="4.6" height="1.3" fill="#40ff00"/><rect x="619.6" y="642.4" width="3.7" height="1.3" fill="#ffff00"/><rect x="667.2" y="654.3" width="4.9" height="1.3" fill="#00ff40"/><rect x="664.1" y="654.2" width="2.6" height="1.3" fill="#00c0ff"/><rect x="637.3" y="653.6" width="3.7" height="1.3" fill="#00ff40"/><rect x="628.3" y="653.4" width="4.9" height="1.3" fill="#00c0ff"/><rect x="648.8" y="653.9" width="4.8" height="1.3" fill="#00ff40"/><rect x="679.9" y="654.6" width="3.5" height="1.3" fill="#00ff40"/><rect x="655.5" y="654.0" width="2.8" height="1.3" fill="#ff8000"/><rect x="619.9" y="653.1" width="3.2" height="1.3" fill="#ff8000"/><rect x="642.5" y="653.7" width="3.9" height="1.3" fill="#00c0ff"/><rect x="661.3" y="654.2" width="4.0" height="1.3" fill="#2040ff"/><rect x="585.0" y="662.6" width="4.4" height="1.3" fill="#40ff00"/><rect x="620.5" y="662.5" width="2.2" height="1.3" fill="#2040ff"/><rect x="585.5" y="662.6" width="3.8" height="1.3" fill="#40ff00"/><rect x="629.3" y="662.5" width="5.0" height="1.3" fill="#2040ff"/><rect x="597.1" y="662.6" width="4.9" height="1.3" fill="#00ff40"/><rect x="629.8" y="662.5" width="4.7" height="1.3" fill="#00c0ff"/><rect x="599.0" y="662.6" width="3.7" height="1.3" fill="#ff8000"/><rect x="637.8" y="662.5" width="2.1" height="1.3" fill="#00ff40"/><rect x="625.8" y="662.5" width="4.6" height="1.3" fill="#00ff40"/><rect x="605.3" y="662.6" width="4.4" height="1.3" fill="#2040ff"/><rect x="660.8" y="675.6" width="2.2" height="1.3" fill="#40ff00"/><rect x="687.3" y="675.7" width="4.0" height="1.3" fill="#00ff40"/><rect x="626.9" y="675.5" width="4.4" height="1.3" fill="#2040ff"/><rect x="657.8" y="675.6" width="3.5" height="1.3" fill="#40ff00"/><rect x="675.0" y="675.7" width="3.0" height="1.3" fill="#00c0ff"/><rect x="633.0" y="675.5" width="2.9" height="1.3" fill="#40ff00"/><rect x="663.8" y="675.6" width="4.7" height="1.3" fill="#ffff00"/><rect x="666.4" y="675.7" width="2.6" height="1.3" fill="#ffff00"/><rect x="667.1" y="675.7" width="2.6" height="1.3" fill="#00c0ff"/><rect x="645.9" y="675.6" width="2.5" height="1.3" fill="#2040ff"/><rect x="623.1" y="684.3" width="2.3" height="1.3" fill="#00c0ff"/><rect x="652.4" y="683.6" width="3.2" height="1.3" fill="#40ff00"/><rect x="625.8" y="684.3" width="4.9" height="1.3" fill="#ff8000"/><rect x="616.9" y="684.5" width="4.5" height="1.3" fill="#00ff40"/><rect x="649.6" y="683.7" width="4.2" height="1.3" fill="#2040ff"/><rect x="651.9" y="683.6" width="3.9" height="1.3" fill="#00ff40"/><rect x="612.5" y="684.6" width="3.1" height="1.3" fill="#ff8000"/><rect x="623.3" y="684.3" width="4.6" height="1.3" fill="#ffff00"/><rect x="680.8" y="682.9" width="4.0" height="1.3" fill="#00ff40"/><rect x="663.4" y="683.3" width="3.9" height="1.3" fill="#2040ff"/><rect x="649.3" y="694.0" width="4.8" height="1.3" fill="#40ff00"/><rect x="674.9" y="692.4" width="2.0" height="1.3" fill="#00c0ff"/><rect x="635.5" y="694.8" width="2.8" height="1.3" fill="#ffff00"/><rect x="672.5" y="692.6" width="3.9" height="1.3" fill="#00ff40"/><rect x="636.1" y="694.7" width="4.9" height="1.3" fill="#2040ff"/><rect x="680.5" y="692.1" width="2.6" height="1.3" fill="#2040ff"/><rect x="659.7" y="693.3" width="4.3" height="1.3" fill="#40ff00"/><rect x="673.2" y="692.5" width="4.9" height="1.3" fill="#ffff00"/><rect x="639.7" y="694.5" width="3.8" height="1.3" fill="#00c0ff"/><rect x="658.8" y="693.4" width="4.4" height="1.3" fill="#00c0ff"/><rect x="685.4" y="701.6" width="4.3" height="1.3" fill="#40ff00"/><rect x="672.8" y="702.6" width="4.2" height="1.3" fill="#00ff40"/><rect x="683.8" y="701.7" width="3.6" height="1.3" fill="#2040ff"/><rect x="646.9" y="704.8" width="2.5" height="1.3" fill="#40ff00"/><rect x="654.4" y="704.2" width="3.9" height="1.3" fill="#ff8000"/><rect x="673.5" y="702.6" width="4.0" height="1.3" fill="#00c0ff"/><rect x="640.4" y="705.3" width="4.5" height="1.3" fill="#00ff40"/><rect x="658.2" y="703.9" width="2.8" height="1.3" fill="#2040ff"/><rect x="679.8" y="702.1" width="2.6" height="1.3" fill="#00c0ff"/><rect x="663.9" y="703.4" width="4.4" height="1.3" fill="#40ff00"/><rect x="598.1" y="714.8" width="2.1" height="1.3" fill="#40ff00"/><rect x="674.0" y="711.7" width="2.9" height="1.3" fill="#ff8000"/><rect x="603.8" y="714.5" width="2.7" height="1.3" fill="#40ff00"/><rect x="641.2" y="713.0" width="4.3" height="1.3" fill="#40ff00"/><rect x="588.9" y="715.2" width="3.1" height="1.3" fill="#00ff40"/><rect x="635.6" y="713.2" width="3.4" height="1.3" fill="#ff8000"/><rect x="642.1" y="713.0" width="3.3" height="1.3" fill="#40ff00"/><rect x="655.8" y="712.4" width="4.6" height="1.3" fill="#ffff00"/><rect x="622.5" y="713.8" width="2.8" height="1.3" fill="#ff8000"/><rect x="666.3" y="712.0" width="4.8" height="1.3" fill="#00ff40"/><rect x="663.1" y="722.4" width="2.7" height="1.3" fill="#00ff40"/><rect x="604.3" y="726.5" width="4.5" height="1.3" fill="#00c0ff"/><rect x="600.2" y="726.8" width="3.9" height="1.3" fill="#40ff00"/><rect x="611.4" y="726.0" width="2.6" height="1.3" fill="#ff8000"/><rect x="665.6" y="722.2" width="3.5" height="1.3" fill="#ffff00"/><rect x="657.3" y="722.8" width="3.0" height="1.3" fill="#40ff00"/><rect x="641.2" y="723.9" width="2.0" height="1.3" fill="#00ff40"/><rect x="617.8" y="725.6" width="2.8" height="1.3" fill="#ff8000"/><rect x="595.9" y="727.1" width="4.3" height="1.3" fill="#2040ff"/><rect x="654.2" y="723.0" width="2.1" height="1.3" fill="#40ff00"/><rect x="653.0" y="733.1" width="3.6" height="1.3" fill="#ff8000"/><rect x="660.4" y="732.4" width="3.9" height="1.3" fill="#00c0ff"/><rect x="623.1" y="735.9" width="3.2" height="1.3" fill="#ff8000"/><rect x="660.4" y="732.4" width="3.4" height="1.3" fill="#2040ff"/><rect x="656.7" y="732.7" width="3.3" height="1.3" fill="#00ff40"/><rect x="613.8" y="736.8" width="3.9" height="1.3" fill="#ff8000"/><rect x="676.2" y="730.9" width="4.3" height="1.3" fill="#2040ff"/><rect x="669.0" y="731.5" width="3.0" height="1.3" fill="#00ff40"/><rect x="624.8" y="735.8" width="4.4" height="1.3" fill="#00c0ff"/><rect x="664.7" y="732.0" width="2.9" height="1.3" fill="#ffff00"/><path d="M345.0,595.6L688.0,564.6L688.0,568.6L345.0,597.1z" fill="#8a00f0" /><path d="M345.0,613.6L688.0,579.6L688.0,583.6L345.0,615.1z" fill="#8a00f0" /><path d="M345.0,631.6L688.0,594.6L688.0,598.6L345.0,633.1z" fill="#8a00f0" /><path d="M345.0,649.6L688.0,609.6L688.0,613.6L345.0,651.1z" fill="#8a00f0" /><path d="M340.0,759.5L506.0,759.5L580.0,772.0L760.0,804.0L1200.0,892.0L1392.0,930.0" stroke="#7a10d8" stroke-width="2.2" fill="none" /><path d="M688.8,544.4L814.7,544.4L814.7,734.3L693.3,769.6z" fill="#a40000" /><path d="M688.8,544.4L701.0,544.4L703.0,767.0L693.3,769.6z" fill="#d40000" /><path d="M719.8,547.7L702.1,759.7M735.2,547.7L717.5,753.1M730.8,547.7L735.2,748.6M800.4,547.7L802.6,734.3M811.4,547.7L812.5,734.3M790.4,547.7L786.0,742.0M735.2,596.3L788.2,547.7M735.2,596.3L788.2,596.3M746.3,587.4L783.8,554.3M737.4,695.6L788.2,742.0M724.2,693.4L788.2,682.4M746.3,684.6L786.0,719.9M693.3,769.6L814.7,734.3M688.8,544.4L814.7,544.4M708.7,547.7L710.9,759.7" stroke="#e60000" stroke-width="3.2" fill="none" /><path d="M719.8,547.7L702.1,759.7M730.8,547.7L735.2,748.6M811.4,547.7L812.5,734.3M735.2,596.3L788.2,547.7M746.3,587.4L783.8,554.3M724.2,693.4L788.2,682.4M693.3,769.6L814.7,734.3M708.7,547.7L710.9,759.7" stroke="#ff2020" stroke-width="1.0" fill="none" opacity="0.7"/><path d="M757.3,602.9L744.0,616.1L737.9,644.8L739.6,671.3L746.3,689.0L757.3,694.5L772.8,694.5L772.8,602.9z" fill="#7a00d8" /><path d="M816.0,599.0L1392.0,497.0" stroke="#3070ff" stroke-width="3" fill="none" /><path d="M816.0,597.8L1392.0,495.8" stroke="#ff2800" stroke-width="2" fill="none" /><path d="M816.0,564.0L1392.0,520.4M816.0,583.0L1392.0,542.5" stroke="#8a00f0" stroke-width="2.2" fill="none" /><path d="M744.4,606.0L900.0,630.2M742.7,610.9L900.0,632.2M742.9,613.5L900.0,635.4M742.8,618.0L900.0,637.2M744.5,621.1L900.0,638.7M742.1,625.5L900.0,639.9M743.2,628.9L900.0,642.5M747.7,631.2L900.0,644.4M745.5,634.4L900.0,646.0M747.0,638.6L900.0,649.5M747.0,641.7L900.0,649.9M746.4,646.5L900.0,651.5M743.3,649.7L900.0,654.7M743.2,653.1L900.0,656.8M742.2,656.3L900.0,657.7M744.4,659.2L900.0,659.9M747.8,663.3L900.0,662.9M746.7,667.5L900.0,665.1M745.7,669.6L900.0,665.5M742.6,673.6L900.0,668.4M745.6,676.4L900.0,670.8M744.4,680.9L900.0,671.1M747.9,684.8L900.0,674.2M746.8,686.9L900.0,675.8M745.4,690.9L900.0,678.4M747.9,693.7L900.0,678.9" stroke="#ff0000" stroke-width="1.8" fill="none" /><path d="M742.0,612.0L900.0,634.0M742.0,621.0L900.0,639.0M742.0,630.0L900.0,644.0M742.0,639.0L900.0,649.0M742.0,648.0L900.0,654.0M742.0,657.0L900.0,659.0M742.0,666.0L900.0,664.0M742.0,675.0L900.0,669.0M742.0,684.0L900.0,674.0" stroke="#8a00f0" stroke-width="1.6" fill="none" /><path d="M742.0,648.0L820.0,652.0L900.0,657.0L900.0,662.0L820.0,661.0L742.0,664.0z" fill="#8a00f0" opacity="0.85"/><rect x="760.9" y="613.1" width="2.6" height="1.3" fill="#00c0ff"/><rect x="767.7" y="614.1" width="5.0" height="1.3" fill="#00ff40"/><rect x="817.2" y="621.0" width="3.5" height="1.3" fill="#2040ff"/><rect x="785.9" y="616.6" width="3.1" height="1.3" fill="#2040ff"/><rect x="819.5" y="621.3" width="3.8" height="1.3" fill="#ffff00"/><rect x="818.7" y="621.2" width="4.4" height="1.3" fill="#2040ff"/><rect x="851.5" y="625.7" width="4.9" height="1.3" fill="#ffff00"/><rect x="782.3" y="616.1" width="4.3" height="1.3" fill="#ff8000"/><rect x="797.1" y="618.2" width="2.0" height="1.3" fill="#ff8000"/><rect x="834.1" y="623.3" width="3.3" height="1.3" fill="#ffff00"/><rect x="762.9" y="613.4" width="3.7" height="1.3" fill="#2040ff"/><rect x="749.9" y="611.6" width="3.8" height="1.3" fill="#00ff40"/><rect x="866.6" y="633.7" width="4.8" height="1.3" fill="#00c0ff"/><rect x="850.9" y="631.9" width="3.7" height="1.3" fill="#2040ff"/><rect x="851.8" y="632.0" width="3.6" height="1.3" fill="#2040ff"/><rect x="805.4" y="626.7" width="3.6" height="1.3" fill="#40ff00"/><rect x="839.1" y="630.6" width="2.9" height="1.3" fill="#ff8000"/><rect x="793.5" y="625.4" width="3.1" height="1.3" fill="#2040ff"/><rect x="865.7" y="633.6" width="4.2" height="1.3" fill="#00c0ff"/><rect x="851.0" y="631.9" width="3.7" height="1.3" fill="#00ff40"/><rect x="748.6" y="620.3" width="4.0" height="1.3" fill="#40ff00"/><rect x="809.1" y="627.1" width="2.4" height="1.3" fill="#ff8000"/><rect x="881.4" y="635.4" width="2.6" height="1.3" fill="#40ff00"/><rect x="790.5" y="625.0" width="3.8" height="1.3" fill="#00c0ff"/><rect x="858.1" y="638.8" width="4.5" height="1.3" fill="#ffff00"/><rect x="816.6" y="635.1" width="4.5" height="1.3" fill="#00c0ff"/><rect x="782.9" y="632.1" width="2.6" height="1.3" fill="#40ff00"/><rect x="799.5" y="633.6" width="3.2" height="1.3" fill="#ff8000"/><rect x="802.7" y="633.9" width="2.6" height="1.3" fill="#00ff40"/><rect x="792.9" y="633.0" width="2.9" height="1.3" fill="#00c0ff"/><rect x="759.7" y="630.1" width="2.6" height="1.3" fill="#00ff40"/><rect x="881.8" y="640.9" width="4.1" height="1.3" fill="#ff8000"/><rect x="813.4" y="634.8" width="4.0" height="1.3" fill="#40ff00"/><rect x="770.7" y="631.0" width="2.1" height="1.3" fill="#ff8000"/><rect x="766.3" y="630.7" width="4.4" height="1.3" fill="#ffff00"/><rect x="897.0" y="642.2" width="2.8" height="1.3" fill="#00c0ff"/><rect x="861.7" y="645.1" width="2.9" height="1.3" fill="#00ff40"/><rect x="833.5" y="643.3" width="3.2" height="1.3" fill="#00ff40"/><rect x="779.8" y="639.9" width="2.4" height="1.3" fill="#40ff00"/><rect x="827.5" y="642.9" width="3.0" height="1.3" fill="#ffff00"/><rect x="847.9" y="644.2" width="4.1" height="1.3" fill="#ffff00"/><rect x="801.0" y="641.2" width="3.6" height="1.3" fill="#00c0ff"/><rect x="848.4" y="644.2" width="3.6" height="1.3" fill="#00c0ff"/><rect x="790.8" y="640.6" width="3.2" height="1.3" fill="#40ff00"/><rect x="775.7" y="639.6" width="4.7" height="1.3" fill="#ff8000"/><rect x="749.6" y="638.0" width="3.7" height="1.3" fill="#40ff00"/><rect x="779.8" y="639.9" width="4.5" height="1.3" fill="#ff8000"/><rect x="850.1" y="644.3" width="3.0" height="1.3" fill="#ffff00"/><rect x="867.8" y="651.3" width="2.2" height="1.3" fill="#00ff40"/><rect x="857.3" y="650.9" width="4.3" height="1.3" fill="#ff8000"/><rect x="764.2" y="647.3" width="2.1" height="1.3" fill="#00c0ff"/><rect x="868.2" y="651.3" width="4.8" height="1.3" fill="#00ff40"/><rect x="827.1" y="649.7" width="3.3" height="1.3" fill="#00ff40"/><rect x="754.1" y="647.0" width="3.5" height="1.3" fill="#ff8000"/><rect x="811.5" y="649.1" width="3.4" height="1.3" fill="#ff8000"/><rect x="847.4" y="650.5" width="2.0" height="1.3" fill="#40ff00"/><rect x="872.7" y="651.5" width="4.2" height="1.3" fill="#00c0ff"/><rect x="779.2" y="647.9" width="5.0" height="1.3" fill="#ff8000"/><rect x="877.7" y="651.7" width="2.2" height="1.3" fill="#2040ff"/><rect x="803.9" y="648.9" width="4.6" height="1.3" fill="#2040ff"/><rect x="803.5" y="656.3" width="3.3" height="1.3" fill="#ffff00"/><rect x="850.1" y="656.9" width="4.5" height="1.3" fill="#ffff00"/><rect x="881.5" y="657.3" width="3.2" height="1.3" fill="#ff8000"/><rect x="763.5" y="655.8" width="4.9" height="1.3" fill="#40ff00"/><rect x="823.6" y="656.5" width="3.0" height="1.3" fill="#00ff40"/><rect x="829.9" y="656.6" width="4.4" height="1.3" fill="#ff8000"/><rect x="750.8" y="655.6" width="4.6" height="1.3" fill="#00c0ff"/><rect x="879.7" y="657.2" width="4.6" height="1.3" fill="#00ff40"/><rect x="843.9" y="656.8" width="3.4" height="1.3" fill="#00c0ff"/><rect x="795.9" y="656.2" width="4.9" height="1.3" fill="#ff8000"/><rect x="864.4" y="657.0" width="4.5" height="1.3" fill="#2040ff"/><rect x="811.6" y="656.4" width="4.0" height="1.3" fill="#00c0ff"/><rect x="752.9" y="664.4" width="4.0" height="1.3" fill="#00c0ff"/><rect x="870.4" y="662.9" width="4.9" height="1.3" fill="#ffff00"/><rect x="861.1" y="663.0" width="2.3" height="1.3" fill="#00c0ff"/><rect x="784.0" y="664.0" width="4.3" height="1.3" fill="#ff8000"/><rect x="773.1" y="664.1" width="3.5" height="1.3" fill="#00c0ff"/><rect x="868.4" y="662.9" width="3.6" height="1.3" fill="#ff8000"/><rect x="817.3" y="663.5" width="2.4" height="1.3" fill="#ff8000"/><rect x="818.2" y="663.5" width="2.2" height="1.3" fill="#2040ff"/><rect x="792.8" y="663.9" width="4.6" height="1.3" fill="#00c0ff"/><rect x="828.7" y="663.4" width="4.3" height="1.3" fill="#ffff00"/><rect x="851.0" y="663.1" width="4.5" height="1.3" fill="#40ff00"/><rect x="881.7" y="662.7" width="3.7" height="1.3" fill="#2040ff"/><rect x="834.4" y="670.0" width="2.5" height="1.3" fill="#00ff40"/><rect x="828.1" y="670.2" width="4.4" height="1.3" fill="#2040ff"/><rect x="811.7" y="670.9" width="3.0" height="1.3" fill="#2040ff"/><rect x="896.1" y="667.6" width="2.8" height="1.3" fill="#ffff00"/><rect x="844.1" y="669.6" width="2.5" height="1.3" fill="#40ff00"/><rect x="895.2" y="667.7" width="3.4" height="1.3" fill="#2040ff"/><rect x="855.9" y="669.2" width="4.2" height="1.3" fill="#40ff00"/><rect x="764.5" y="672.6" width="3.4" height="1.3" fill="#00ff40"/><rect x="769.2" y="672.5" width="3.5" height="1.3" fill="#40ff00"/><rect x="880.6" y="668.2" width="3.1" height="1.3" fill="#ff8000"/><rect x="819.1" y="670.6" width="2.6" height="1.3" fill="#ff8000"/><rect x="795.1" y="671.5" width="3.5" height="1.3" fill="#40ff00"/><rect x="862.5" y="674.9" width="4.2" height="1.3" fill="#ff8000"/><rect x="877.5" y="673.9" width="2.5" height="1.3" fill="#40ff00"/><rect x="757.1" y="681.5" width="3.4" height="1.3" fill="#ff8000"/><rect x="796.6" y="679.0" width="4.6" height="1.3" fill="#ffff00"/><rect x="861.1" y="675.0" width="4.7" height="1.3" fill="#2040ff"/><rect x="787.7" y="679.6" width="2.5" height="1.3" fill="#ffff00"/><rect x="745.0" y="682.3" width="2.2" height="1.3" fill="#00c0ff"/><rect x="831.5" y="676.8" width="2.7" height="1.3" fill="#00c0ff"/><rect x="807.4" y="678.4" width="2.9" height="1.3" fill="#ffff00"/><rect x="894.2" y="672.9" width="3.2" height="1.3" fill="#ffff00"/><rect x="752.3" y="681.8" width="3.2" height="1.3" fill="#2040ff"/><rect x="788.5" y="679.6" width="3.9" height="1.3" fill="#00c0ff"/><path d="M758.0,606.0L896.0,629.0" stroke="#ff0000" stroke-width="2.5" fill="none" /><rect x="768.2" y="605.7" width="2.4" height="1.3" fill="#00c0ff"/><rect x="876.9" y="623.8" width="4.1" height="1.3" fill="#ffff00"/><rect x="802.9" y="611.5" width="2.7" height="1.3" fill="#2040ff"/><rect x="823.2" y="614.9" width="4.3" height="1.3" fill="#2040ff"/><rect x="815.0" y="613.5" width="4.2" height="1.3" fill="#40ff00"/><rect x="780.9" y="607.8" width="2.8" height="1.3" fill="#ffff00"/><rect x="845.2" y="618.5" width="2.7" height="1.3" fill="#00ff40"/><rect x="836.4" y="617.1" width="2.4" height="1.3" fill="#40ff00"/><rect x="841.0" y="617.8" width="4.0" height="1.3" fill="#00c0ff"/><rect x="849.1" y="619.2" width="3.5" height="1.3" fill="#00c0ff"/><rect x="821.0" y="614.5" width="2.9" height="1.3" fill="#40ff00"/><rect x="808.5" y="612.4" width="2.7" height="1.3" fill="#40ff00"/><rect x="807.3" y="612.2" width="4.9" height="1.3" fill="#00c0ff"/><rect x="891.7" y="626.3" width="3.4" height="1.3" fill="#40ff00"/><rect x="847.2" y="618.9" width="2.6" height="1.3" fill="#ff8000"/><rect x="836.2" y="617.0" width="4.9" height="1.3" fill="#ffff00"/><rect x="760.3" y="604.4" width="3.6" height="1.3" fill="#2040ff"/><rect x="869.1" y="622.5" width="4.9" height="1.3" fill="#ff8000"/><rect x="816.2" y="613.7" width="3.5" height="1.3" fill="#40ff00"/><rect x="839.1" y="617.5" width="4.0" height="1.3" fill="#ff8000"/><rect x="825.8" y="615.3" width="3.6" height="1.3" fill="#2040ff"/><rect x="761.8" y="604.6" width="2.7" height="1.3" fill="#40ff00"/><rect x="765.0" y="605.2" width="3.2" height="1.3" fill="#00c0ff"/><rect x="862.0" y="621.3" width="3.2" height="1.3" fill="#ffff00"/><rect x="820.5" y="614.4" width="2.5" height="1.3" fill="#2040ff"/><path d="M1125.0,655.0L1392.0,641.0M1125.0,656.6L1392.0,647.8M1125.0,658.6L1392.0,656.9M1125.0,660.2L1392.0,663.8M1125.0,661.7L1392.0,670.6M1125.0,663.8L1392.0,679.7M1125.0,665.3L1392.0,686.5M1125.0,666.9L1392.0,693.3M1125.0,669.0L1392.0,702.4" stroke="#ff0000" stroke-width="1.5" fill="none" /><path d="M1125.0,655.5L1392.0,643.3M1125.0,657.6L1392.0,652.4M1125.0,659.7L1392.0,661.5M1125.0,660.7L1392.0,666.0M1125.0,662.8L1392.0,675.1M1125.0,664.8L1392.0,684.2M1125.0,665.9L1392.0,688.8M1125.0,667.9L1392.0,697.9M1125.0,670.0L1392.0,707.0" stroke="#8800ff" stroke-width="1.5" fill="none" /><path d="M1125.0,656.0L1392.0,645.6M1125.0,661.2L1392.0,668.3M1125.0,666.4L1392.0,691.1" stroke="#ffff00" stroke-width="1.5" fill="none" /><path d="M1125.0,657.1L1392.0,650.1M1125.0,662.2L1392.0,672.9M1125.0,667.4L1392.0,695.6" stroke="#00ff00" stroke-width="1.5" fill="none" /><path d="M1125.0,658.1L1392.0,654.7M1125.0,663.3L1392.0,677.4M1125.0,668.4L1392.0,700.2" stroke="#0060ff" stroke-width="1.5" fill="none" /><path d="M1125.0,659.1L1392.0,659.2M1125.0,664.3L1392.0,682.0M1125.0,669.5L1392.0,704.7" stroke="#00ffff" stroke-width="1.5" fill="none" /><path d="M905,630 C896,628 888,636 880,650 C872,665 867,690 867.8,700.9 C868,720 875,742 886,747.8 C895,752 905,753 914.7,753 L912,726 C905,724 897,720 894,712 C891,700 892,690 895,682 C898,672 902,668 905,665 z" fill="#e60000"/><path d="M1094.5,622.8 C1105,624 1112,627 1118,630.6 C1126,645 1130,660 1133.6,672.3 C1137,700 1139,720 1141.4,737.4 C1147,755 1152,768 1159.7,776.5 C1165,783 1170,789 1172.7,794.7 C1160,796 1148,795 1138.8,792.1 C1130,780 1125,770 1120.6,758.3 C1115,740 1111,720 1107.6,706.1 C1105,703 1102,702 1099.7,700.9 z" fill="#e40000"/><path d="M926.4,568 C980,565 1040,565 1086.7,566.7 C1096,572 1101,580 1103,590 C1107,605 1108,615 1107.6,625 C1104,680 1100,720 1097,737.4 C1093,760 1086,776 1063.3,794.7 C1040,803 1000,804 977.3,802.6 C955,800 940,796 922.5,773.9 C918,760 915,750 914.7,742.6 C908,715 904,700 903,685.3 C899,660 898,640 899,633.2 C900,615 903,600 908.2,594 C913,585 918,574 926.4,568 z" fill="#ea0000"/><path d="M990.3,805 C988,815 984,822 982.5,828.6 C985,838 992,842 998,841.6 C1006,842 1016,838 1019,828.6 C1016,820 1011,812 1008.5,805 z" fill="#ee0000"/><clipPath id="tpc"><path d="M926.4,568 C980,565 1040,565 1086.7,566.7 C1096,572 1101,580 1103,590 C1107,605 1108,615 1107.6,625 C1104,680 1100,720 1097,737.4 C1093,760 1086,776 1063.3,794.7 C1040,803 1000,804 977.3,802.6 C955,800 940,796 922.5,773.9 C918,760 915,750 914.7,742.6 C908,715 904,700 903,685.3 C899,660 898,640 899,633.2 C900,615 903,600 908.2,594 C913,585 918,574 926.4,568 z"/></clipPath><g clip-path="url(#tpc)"><path d="M896.0,560.0L892.8,810.0M911.0,560.0L908.2,810.0M926.0,560.0L923.7,810.0M941.0,560.0L939.1,810.0M956.0,560.0L954.6,810.0M971.0,560.0L970.0,810.0M986.0,560.0L985.5,810.0M1001.0,560.0L1000.9,810.0M1016.0,560.0L1016.4,810.0M1031.0,560.0L1031.8,810.0M1046.0,560.0L1047.3,810.0M1061.0,560.0L1062.7,810.0M1076.0,560.0L1078.2,810.0M1091.0,560.0L1093.6,810.0M1106.0,560.0L1109.1,810.0M1121.0,560.0L1124.5,810.0M890.0,563.0L1112.0,564.0M890.0,574.0L1112.0,575.0M890.0,585.0L1112.0,586.0M890.0,596.0L1112.0,597.0M890.0,607.0L1112.0,608.0M890.0,618.0L1112.0,619.0M890.0,629.0L1112.0,630.0M890.0,640.0L1112.0,641.0M890.0,651.0L1112.0,652.0M890.0,662.0L1112.0,663.0M890.0,673.0L1112.0,674.0M890.0,684.0L1112.0,685.0M890.0,695.0L1112.0,696.0M890.0,706.0L1112.0,707.0M890.0,717.0L1112.0,718.0M890.0,728.0L1112.0,729.0M890.0,739.0L1112.0,740.0M890.0,750.0L1112.0,751.0M890.0,761.0L1112.0,762.0M890.0,772.0L1112.0,773.0M890.0,783.0L1112.0,784.0M890.0,794.0L1112.0,795.0M890.0,805.0L1112.0,806.0M890.0,816.0L1112.0,817.0" stroke="#ff3030" stroke-width="1.2" fill="none" opacity="0.55"/><path d="M836.0,563.0L866.0,585.0M836.0,585.0L866.0,607.0M836.0,607.0L866.0,629.0M836.0,629.0L866.0,651.0M836.0,651.0L866.0,673.0M836.0,673.0L866.0,695.0M836.0,695.0L866.0,717.0M836.0,717.0L866.0,739.0M836.0,739.0L866.0,761.0M836.0,761.0L866.0,783.0M836.0,783.0L866.0,805.0M836.0,805.0L866.0,827.0M866.0,563.0L896.0,585.0M866.0,585.0L896.0,607.0M866.0,607.0L896.0,629.0M866.0,629.0L896.0,651.0M866.0,651.0L896.0,673.0M866.0,673.0L896.0,695.0M866.0,695.0L896.0,717.0M866.0,717.0L896.0,739.0M866.0,739.0L896.0,761.0M866.0,761.0L896.0,783.0M866.0,783.0L896.0,805.0M866.0,805.0L896.0,827.0M896.0,563.0L926.0,585.0M896.0,585.0L926.0,607.0M896.0,607.0L926.0,629.0M896.0,629.0L926.0,651.0M896.0,651.0L926.0,673.0M896.0,673.0L926.0,695.0M896.0,695.0L926.0,717.0M896.0,717.0L926.0,739.0M896.0,739.0L926.0,761.0M896.0,761.0L926.0,783.0M896.0,783.0L926.0,805.0M896.0,805.0L926.0,827.0M926.0,563.0L956.0,585.0M926.0,585.0L956.0,607.0M926.0,607.0L956.0,629.0M926.0,629.0L956.0,651.0M926.0,651.0L956.0,673.0M926.0,673.0L956.0,695.0M926.0,695.0L956.0,717.0M926.0,717.0L956.0,739.0M926.0,739.0L956.0,761.0M926.0,761.0L956.0,783.0M926.0,783.0L956.0,805.0M926.0,805.0L956.0,827.0M956.0,563.0L986.0,585.0M956.0,585.0L986.0,607.0M956.0,607.0L986.0,629.0M956.0,629.0L986.0,651.0M956.0,651.0L986.0,673.0M956.0,673.0L986.0,695.0M956.0,695.0L986.0,717.0M956.0,717.0L986.0,739.0M956.0,739.0L986.0,761.0M956.0,761.0L986.0,783.0M956.0,783.0L986.0,805.0M956.0,805.0L986.0,827.0M986.0,563.0L1016.0,585.0M986.0,585.0L1016.0,607.0M986.0,607.0L1016.0,629.0M986.0,629.0L1016.0,651.0M986.0,651.0L1016.0,673.0M986.0,673.0L1016.0,695.0M986.0,695.0L1016.0,717.0M986.0,717.0L1016.0,739.0M986.0,739.0L1016.0,761.0M986.0,761.0L1016.0,783.0M986.0,783.0L1016.0,805.0M986.0,805.0L1016.0,827.0M1016.0,563.0L1046.0,585.0M1016.0,585.0L1046.0,607.0M1016.0,607.0L1046.0,629.0M1016.0,629.0L1046.0,651.0M1016.0,651.0L1046.0,673.0M1016.0,673.0L1046.0,695.0M1016.0,695.0L1046.0,717.0M1016.0,717.0L1046.0,739.0M1016.0,739.0L1046.0,761.0M1016.0,761.0L1046.0,783.0M1016.0,783.0L1046.0,805.0M1016.0,805.0L1046.0,827.0M1046.0,563.0L1076.0,585.0M1046.0,585.0L1076.0,607.0M1046.0,607.0L1076.0,629.0M1046.0,629.0L1076.0,651.0M1046.0,651.0L1076.0,673.0M1046.0,673.0L1076.0,695.0M1046.0,695.0L1076.0,717.0M1046.0,717.0L1076.0,739.0M1046.0,739.0L1076.0,761.0M1046.0,761.0L1076.0,783.0M1046.0,783.0L1076.0,805.0M1046.0,805.0L1076.0,827.0M1076.0,563.0L1106.0,585.0M1076.0,585.0L1106.0,607.0M1076.0,607.0L1106.0,629.0M1076.0,629.0L1106.0,651.0M1076.0,651.0L1106.0,673.0M1076.0,673.0L1106.0,695.0M1076.0,695.0L1106.0,717.0M1076.0,717.0L1106.0,739.0M1076.0,739.0L1106.0,761.0M1076.0,761.0L1106.0,783.0M1076.0,783.0L1106.0,805.0M1076.0,805.0L1106.0,827.0M1106.0,563.0L1136.0,585.0M1106.0,585.0L1136.0,607.0M1106.0,607.0L1136.0,629.0M1106.0,629.0L1136.0,651.0M1106.0,651.0L1136.0,673.0M1106.0,673.0L1136.0,695.0M1106.0,695.0L1136.0,717.0M1106.0,717.0L1136.0,739.0M1106.0,739.0L1136.0,761.0M1106.0,761.0L1136.0,783.0M1106.0,783.0L1136.0,805.0M1106.0,805.0L1136.0,827.0M1136.0,563.0L1166.0,585.0M1136.0,585.0L1166.0,607.0M1136.0,607.0L1166.0,629.0M1136.0,629.0L1166.0,651.0M1136.0,651.0L1166.0,673.0M1136.0,673.0L1166.0,695.0M1136.0,695.0L1166.0,717.0M1136.0,717.0L1166.0,739.0M1136.0,739.0L1166.0,761.0M1136.0,761.0L1166.0,783.0M1136.0,783.0L1166.0,805.0M1136.0,805.0L1166.0,827.0" stroke="#ff3a3a" stroke-width="1.0" fill="none" opacity="0.5"/><path d="M911.0,560.0L908.2,810.0M941.0,560.0L939.1,810.0M971.0,560.0L970.0,810.0M1001.0,560.0L1000.9,810.0M1031.0,560.0L1031.8,810.0M1061.0,560.0L1062.7,810.0M1091.0,560.0L1093.6,810.0M1121.0,560.0L1124.5,810.0M890.0,574.0L1112.0,575.0M890.0,596.0L1112.0,597.0M890.0,618.0L1112.0,619.0M890.0,640.0L1112.0,641.0M890.0,662.0L1112.0,663.0M890.0,684.0L1112.0,685.0M890.0,706.0L1112.0,707.0M890.0,728.0L1112.0,729.0M890.0,750.0L1112.0,751.0M890.0,772.0L1112.0,773.0M890.0,794.0L1112.0,795.0M890.0,816.0L1112.0,817.0" stroke="#8a0000" stroke-width="1.6" fill="none" opacity="0.55"/><path d="M839.0,582.0L863.0,566.0M839.0,604.0L863.0,588.0M839.0,626.0L863.0,610.0M839.0,648.0L863.0,632.0M839.0,670.0L863.0,654.0M839.0,692.0L863.0,676.0M839.0,714.0L863.0,698.0M839.0,736.0L863.0,720.0M839.0,758.0L863.0,742.0M839.0,780.0L863.0,764.0M839.0,802.0L863.0,786.0M839.0,824.0L863.0,808.0M869.0,582.0L893.0,566.0M869.0,604.0L893.0,588.0M869.0,626.0L893.0,610.0M869.0,648.0L893.0,632.0M869.0,670.0L893.0,654.0M869.0,692.0L893.0,676.0M869.0,714.0L893.0,698.0M869.0,736.0L893.0,720.0M869.0,758.0L893.0,742.0M869.0,780.0L893.0,764.0M869.0,802.0L893.0,786.0M869.0,824.0L893.0,808.0M899.0,582.0L923.0,566.0M899.0,604.0L923.0,588.0M899.0,626.0L923.0,610.0M899.0,648.0L923.0,632.0M899.0,670.0L923.0,654.0M899.0,692.0L923.0,676.0M899.0,714.0L923.0,698.0M899.0,736.0L923.0,720.0M899.0,758.0L923.0,742.0M899.0,780.0L923.0,764.0M899.0,802.0L923.0,786.0M899.0,824.0L923.0,808.0M929.0,582.0L953.0,566.0M929.0,604.0L953.0,588.0M929.0,626.0L953.0,610.0M929.0,648.0L953.0,632.0M929.0,670.0L953.0,654.0M929.0,692.0L953.0,676.0M929.0,714.0L953.0,698.0M929.0,736.0L953.0,720.0M929.0,758.0L953.0,742.0M929.0,780.0L953.0,764.0M929.0,802.0L953.0,786.0M929.0,824.0L953.0,808.0M959.0,582.0L983.0,566.0M959.0,604.0L983.0,588.0M959.0,626.0L983.0,610.0M959.0,648.0L983.0,632.0M959.0,670.0L983.0,654.0M959.0,692.0L983.0,676.0M959.0,714.0L983.0,698.0M959.0,736.0L983.0,720.0M959.0,758.0L983.0,742.0M959.0,780.0L983.0,764.0M959.0,802.0L983.0,786.0M959.0,824.0L983.0,808.0M989.0,582.0L1013.0,566.0M989.0,604.0L1013.0,588.0M989.0,626.0L1013.0,610.0M989.0,648.0L1013.0,632.0M989.0,670.0L1013.0,654.0M989.0,692.0L1013.0,676.0M989.0,714.0L1013.0,698.0M989.0,736.0L1013.0,720.0M989.0,758.0L1013.0,742.0M989.0,780.0L1013.0,764.0M989.0,802.0L1013.0,786.0M989.0,824.0L1013.0,808.0M1019.0,582.0L1043.0,566.0M1019.0,604.0L1043.0,588.0M1019.0,626.0L1043.0,610.0M1019.0,648.0L1043.0,632.0M1019.0,670.0L1043.0,654.0M1019.0,692.0L1043.0,676.0M1019.0,714.0L1043.0,698.0M1019.0,736.0L1043.0,720.0M1019.0,758.0L1043.0,742.0M1019.0,780.0L1043.0,764.0M1019.0,802.0L1043.0,786.0M1019.0,824.0L1043.0,808.0M1049.0,582.0L1073.0,566.0M1049.0,604.0L1073.0,588.0M1049.0,626.0L1073.0,610.0M1049.0,648.0L1073.0,632.0M1049.0,670.0L1073.0,654.0M1049.0,692.0L1073.0,676.0M1049.0,714.0L1073.0,698.0M1049.0,736.0L1073.0,720.0M1049.0,758.0L1073.0,742.0M1049.0,780.0L1073.0,764.0M1049.0,802.0L1073.0,786.0M1049.0,824.0L1073.0,808.0M1079.0,582.0L1103.0,566.0M1079.0,604.0L1103.0,588.0M1079.0,626.0L1103.0,610.0M1079.0,648.0L1103.0,632.0M1079.0,670.0L1103.0,654.0M1079.0,692.0L1103.0,676.0M1079.0,714.0L1103.0,698.0M1079.0,736.0L1103.0,720.0M1079.0,758.0L1103.0,742.0M1079.0,780.0L1103.0,764.0M1079.0,802.0L1103.0,786.0M1079.0,824.0L1103.0,808.0M1109.0,582.0L1133.0,566.0M1109.0,604.0L1133.0,588.0M1109.0,626.0L1133.0,610.0M1109.0,648.0L1133.0,632.0M1109.0,670.0L1133.0,654.0M1109.0,692.0L1133.0,676.0M1109.0,714.0L1133.0,698.0M1109.0,736.0L1133.0,720.0M1109.0,758.0L1133.0,742.0M1109.0,780.0L1133.0,764.0M1109.0,802.0L1133.0,786.0M1109.0,824.0L1133.0,808.0M1139.0,582.0L1163.0,566.0M1139.0,604.0L1163.0,588.0M1139.0,626.0L1163.0,610.0M1139.0,648.0L1163.0,632.0M1139.0,670.0L1163.0,654.0M1139.0,692.0L1163.0,676.0M1139.0,714.0L1163.0,698.0M1139.0,736.0L1163.0,720.0M1139.0,758.0L1163.0,742.0M1139.0,780.0L1163.0,764.0M1139.0,802.0L1163.0,786.0M1139.0,824.0L1163.0,808.0" stroke="#7a0000" stroke-width="1.6" fill="none" opacity="0.6"/><rect x="984" y="560" width="6" height="250" fill="#8a0000" opacity="0.35"/></g><clipPath id="hsc"><path d="M905,630 C896,628 888,636 880,650 C872,665 867,690 867.8,700.9 C868,720 875,742 886,747.8 C895,752 905,753 914.7,753 L912,726 C905,724 897,720 894,712 C891,700 892,690 895,682 C898,672 902,668 905,665 z"/><path d="M1094.5,622.8 C1105,624 1112,627 1118,630.6 C1126,645 1130,660 1133.6,672.3 C1137,700 1139,720 1141.4,737.4 C1147,755 1152,768 1159.7,776.5 C1165,783 1170,789 1172.7,794.7 C1160,796 1148,795 1138.8,792.1 C1130,780 1125,770 1120.6,758.3 C1115,740 1111,720 1107.6,706.1 C1105,703 1102,702 1099.7,700.9 z"/></clipPath><g clip-path="url(#hsc)"><path d="M1112.7,678.7L1114.2,672.9M1020.2,773.2L1021.6,769.2M1117.1,711.3L1115.0,700.8M892.0,760.2L894.0,768.2M1169.4,753.1L1172.1,743.5M1008.0,634.3L1008.5,624.0M875.9,709.2L880.2,708.8M1170.5,782.9L1167.8,773.8M1148.7,786.3L1149.5,776.3M1014.2,756.9L1011.2,747.3M907.0,667.1L910.4,676.7M896.9,731.9L898.1,738.2M1048.5,632.7L1047.5,628.7M1137.3,711.9L1139.3,702.7M1103.2,654.9L1102.9,644.3M1105.5,794.6L1109.2,785.3M1097.3,760.6L1097.5,752.4M880.2,784.0L888.9,784.4M871.9,749.7L880.5,750.7M965.0,704.4L970.5,704.7M1069.4,720.2L1070.3,714.7M1055.3,798.9L1056.2,792.5M1064.7,654.4L1066.5,646.6M1003.6,674.4L1005.5,668.8M1076.3,670.2L1074.6,665.1M1023.0,697.7L1023.7,692.1M1154.4,706.9L1154.1,698.0M1023.0,713.3L1025.4,705.0M891.8,653.9L890.3,662.9M1034.0,700.7L1033.7,693.7M1096.1,679.4L1097.5,671.7M1051.1,772.8L1049.2,765.7M1019.0,790.8L1018.7,782.9M900.5,745.1L900.4,756.8M1002.0,694.3L1000.0,684.7M1073.0,763.0L1073.7,758.8M1026.8,758.7L1026.3,751.2M872.7,657.6L873.5,666.6M1097.1,647.6L1097.0,635.9M885.7,631.4L889.6,632.3M956.5,784.2L962.0,786.1M1172.7,767.6L1173.7,763.0M998.7,633.4L1002.9,633.2M1144.2,709.5L1145.4,701.8M1123.9,662.7L1124.4,653.6M936.0,711.6L938.4,717.4M1000.3,621.5L997.2,611.0M1105.6,673.0L1104.7,666.4M1109.5,679.9L1109.8,674.8M1099.2,708.1L1101.6,700.7M918.7,789.6L919.5,794.5M867.9,730.2L869.5,735.1M1005.8,699.3L1003.7,690.4M939.5,741.5L947.5,740.3M1123.6,722.1L1124.8,716.4M1078.6,698.6L1080.6,693.4M964.3,738.8L963.4,743.1M1136.5,627.6L1134.1,616.9M957.8,737.3L960.1,746.0M1128.7,688.5L1126.2,679.0M884.4,773.8L884.6,779.2M1031.0,718.6L1030.7,713.2M968.4,758.4L965.9,765.8M978.2,726.9L983.4,727.5M937.8,734.7L947.8,731.0M929.6,637.9L930.2,647.9M879.6,670.5L879.9,675.8M1108.3,795.1L1108.4,788.8M1083.0,793.4L1079.4,782.5M1173.1,787.8L1175.2,778.1M1059.6,783.0L1059.2,775.5M1005.7,725.5L1004.4,719.8M956.8,676.6L953.3,684.9M1146.8,653.2L1145.5,645.7M1082.7,777.9L1084.3,768.9M1130.1,681.1L1130.7,675.3M917.5,664.9L926.2,663.1M1073.0,762.8L1074.9,751.7M943.0,784.5L951.8,781.7M1009.4,625.5L1012.1,615.7M1061.4,628.2L1061.5,616.8M893.9,723.4L895.2,733.4M1066.9,652.4L1065.7,644.2M1006.0,692.2L1007.7,683.8M1170.0,702.1L1170.3,698.1M950.8,677.3L962.4,680.4M874.9,711.3L875.6,718.5M902.3,666.0L912.2,664.1M915.8,686.7L918.0,697.5M1136.3,786.9L1137.3,778.0M865.3,646.9L873.5,649.0M950.4,784.1L954.4,785.6M1006.8,759.3L1007.0,754.6M1085.1,622.1L1085.7,615.2M995.0,648.0L1005.0,646.2M1156.7,632.5L1157.9,626.8M976.3,777.9L976.3,784.0M1144.9,677.7L1146.7,671.7M1097.8,695.8L1096.8,686.4M1166.4,748.2L1167.8,737.7M1038.5,628.4L1037.8,623.8M1136.8,795.6L1137.9,791.3M958.7,664.4L957.1,676.1M890.4,639.4L900.3,637.9M1129.0,712.5L1130.3,701.7M985.3,641.5L987.3,647.5M1035.4,707.5L1038.7,698.3M1037.8,704.0L1037.7,699.2M1017.1,763.8L1014.5,754.0M954.2,724.3L953.1,735.0M913.9,689.9L915.6,694.8M1088.4,795.9L1086.7,787.0M1083.2,730.6L1082.5,722.1M1034.6,788.4L1033.7,780.7M1142.7,797.4L1144.4,791.6M946.3,683.1L945.0,690.1M923.7,629.3L925.6,637.9M1056.9,785.5L1056.9,776.9M974.4,742.0L983.5,742.4M1125.5,787.3L1126.5,781.8M931.9,645.5L933.1,656.2M1082.9,794.3L1080.9,783.9M1086.9,715.1L1088.9,707.5M1003.9,646.4L1004.4,637.6M1104.5,691.2L1102.8,681.6M927.3,751.0L935.8,752.6M1095.8,795.3L1094.1,789.5M969.9,759.2L971.2,767.0M979.6,717.8L990.0,718.0M1010.0,721.9L1010.0,713.9M1115.1,715.2L1113.1,703.9M1118.4,626.6L1119.3,620.1M948.4,657.1L957.9,657.8M931.4,751.1L929.0,757.0" stroke="#9a0000" stroke-width="1.1" fill="none" opacity="0.6"/><path d="M1012.6,720.4L1010.6,711.8M927.0,720.8L925.8,728.2M1002.9,759.8L1000.8,751.7M882.5,771.8L894.0,774.1M932.9,705.0L930.8,714.7M1079.5,637.1L1077.8,631.0M892.3,786.4L892.8,791.3M1162.1,662.0L1161.5,654.0M1085.7,728.2L1084.6,720.4M1159.9,689.2L1160.0,681.5M1132.9,777.0L1131.8,766.2M1134.2,688.1L1134.9,678.2M960.8,634.2L963.5,643.2M914.9,794.4L919.4,794.5M891.9,746.4L896.5,746.3M879.6,754.7L884.8,754.3M888.8,620.8L887.8,625.0M1115.3,767.2L1116.6,755.7M1033.3,740.3L1033.5,735.8M985.3,748.7L990.7,748.6M974.9,660.6L980.2,661.3M994.9,713.8L1003.7,715.2M1078.0,764.9L1078.0,756.5M1142.0,689.5L1141.7,678.5M872.5,727.0L884.1,726.5M871.3,633.8L877.5,636.2M1131.6,683.0L1131.5,677.9M916.3,708.7L917.0,715.0M944.3,762.0L944.7,767.4M874.3,750.6L882.1,749.2M1070.6,723.7L1068.6,714.2M1111.0,669.9L1107.7,658.8M979.6,642.0L987.5,640.7M1112.8,627.9L1113.5,616.2M1096.3,797.1L1096.3,791.2M959.5,662.4L962.6,672.0M1118.1,629.0L1117.8,624.9M944.0,704.2L948.6,703.4M894.7,792.0L896.9,799.4M921.8,757.2L932.7,760.9M1069.0,797.8L1070.2,790.0M984.8,764.5L989.5,766.2M1149.9,659.3L1152.5,650.9M1076.3,638.8L1073.4,629.9M873.5,675.4L874.4,680.2M1028.4,759.3L1030.2,749.0M912.6,777.5L922.9,776.3M1006.7,692.7L1007.8,686.0M1173.0,641.6L1173.2,635.2M873.9,744.3L875.9,750.2M984.4,760.5L993.3,763.3M933.1,690.4L943.9,686.2M989.9,732.5L992.2,738.4M1163.2,712.6L1162.7,700.9M1025.3,624.1L1027.1,612.9M1142.4,631.2L1142.1,623.9M923.1,762.3L931.2,764.5M1088.6,644.3L1086.8,634.4M916.5,790.6L923.6,791.5M925.3,759.1L932.4,759.9M876.9,676.2L879.9,683.4M943.1,789.4L949.5,790.4M897.8,624.7L900.2,632.0M1034.7,650.9L1035.4,639.3M931.6,634.5L932.2,639.7M957.4,696.3L958.2,703.4M1147.8,706.2L1149.9,697.2M906.2,698.8L914.1,699.0M1083.3,642.7L1082.0,635.0M919.1,723.4L918.6,729.9M954.1,691.4L962.3,694.3M892.2,649.5L890.6,654.7M1168.6,680.6L1171.3,672.4M1156.9,752.9L1159.2,742.0M1073.6,789.5L1071.2,780.0M1124.3,790.6L1124.6,783.5M1173.3,790.0L1171.3,783.7M1098.2,632.8L1095.3,622.1M903.0,646.6L901.4,653.8M1019.7,716.7L1017.2,705.5M1122.7,692.0L1124.0,681.1M1098.9,632.8L1097.6,622.2M1160.1,666.8L1159.6,656.2M997.6,739.1L1008.2,735.0M1161.9,785.1L1163.6,776.4M958.3,666.5L965.3,666.1M1022.2,643.3L1019.3,634.6M1121.9,769.3L1123.4,760.6M877.5,793.6L882.4,794.6M938.4,754.8L940.4,765.7M977.9,721.9L977.3,726.6M908.3,727.2L906.5,734.5M1172.9,641.7L1170.9,633.6M1085.8,718.2L1086.7,711.3M1120.9,732.2L1119.1,724.8M908.7,751.2L908.7,759.9M898.8,688.9L908.9,690.5M1019.8,673.4L1018.9,666.1M1150.6,740.9L1148.8,729.7M920.9,631.0L922.6,639.8M1119.4,698.8L1117.4,689.9M942.9,652.2L951.9,651.1M1047.4,646.2L1046.9,637.8M888.2,724.7L890.1,729.2M1087.7,700.5L1086.2,693.5M1029.3,763.7L1030.6,756.4M1003.7,733.8L1001.0,723.5M927.6,721.8L928.0,733.7M1077.7,631.1L1077.1,626.6M1061.7,741.2L1061.1,735.7M1131.2,641.4L1132.2,636.3M1092.6,758.4L1092.2,752.0M973.2,641.8L976.9,652.8M1174.7,773.6L1175.9,765.8M996.7,736.1L1005.5,732.7M960.4,725.5L968.6,724.7M1013.3,632.7L1014.4,623.4M1136.1,645.4L1136.5,640.7M1167.5,628.6L1168.0,622.1M1085.4,747.0L1088.3,737.9M1101.8,665.3L1101.2,660.8M1075.9,754.3L1075.8,749.0M905.2,785.2L906.2,790.6M1098.1,742.2L1097.5,737.0M1050.0,694.9L1050.1,686.7M873.7,724.3L875.6,729.8" stroke="#ff3a3a" stroke-width="1.0" fill="none" opacity="0.6"/></g></svg>
</div></body></html>
